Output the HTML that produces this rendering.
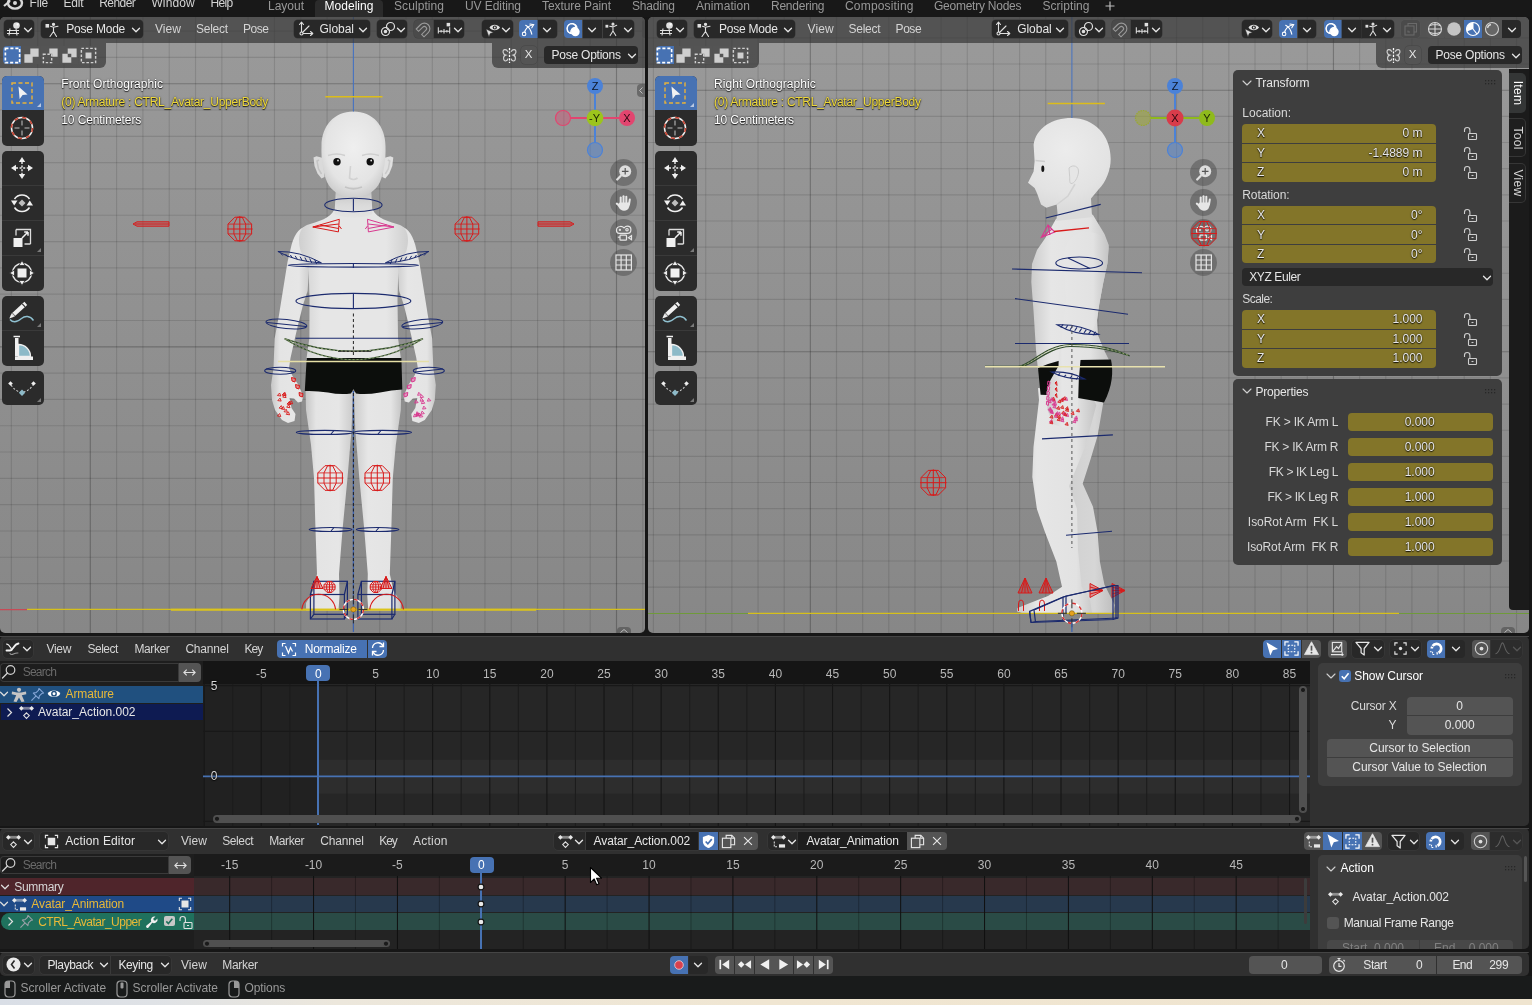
<!DOCTYPE html>
<html><head><meta charset="utf-8"><title>Blender</title>
<style>
html,body{margin:0;padding:0;}
body{will-change:transform;width:1532px;height:1005px;overflow:hidden;background:#161616;font-family:'Liberation Sans', sans-serif;font-size:11.5px;position:relative;}
div,span,svg{box-sizing:border-box;}
svg{overflow:visible;}
</style></head><body>
<div style="position:absolute;left:0px;top:0px;width:1532px;height:17px;background:#181818;border-radius:0px;"></div>
<svg style="position:absolute;left:3px;top:-6px;" width="20" height="16" viewBox="0 0 20 16"><ellipse cx="12" cy="9" rx="7" ry="5.6" fill="none" stroke="#d8d8d8" stroke-width="2.4"/><circle cx="12" cy="9" r="2" fill="#d8d8d8"/><path d="M0 4 L10 4" stroke="#d8d8d8" stroke-width="2.2"/><path d="M1 12 L7 7" stroke="#d8d8d8" stroke-width="2.2"/></svg>
<span style="position:absolute;left:29.5px;top:-2.86px;font-size:12px;line-height:1;color:#d4d4d4;white-space:pre;font-weight:normal;letter-spacing:-0.181px;">File</span>
<span style="position:absolute;left:63.4px;top:-2.86px;font-size:12px;line-height:1;color:#d4d4d4;white-space:pre;font-weight:normal;letter-spacing:-0.196px;">Edit</span>
<span style="position:absolute;left:99.2px;top:-2.86px;font-size:12px;line-height:1;color:#d4d4d4;white-space:pre;font-weight:normal;letter-spacing:-0.552px;">Render</span>
<span style="position:absolute;left:151.4px;top:-2.86px;font-size:12px;line-height:1;color:#d4d4d4;white-space:pre;font-weight:normal;letter-spacing:0.143px;">Window</span>
<span style="position:absolute;left:210.4px;top:-2.86px;font-size:12px;line-height:1;color:#d4d4d4;white-space:pre;font-weight:normal;letter-spacing:-0.629px;">Help</span>
<div style="position:absolute;left:315px;top:0px;width:68px;height:17px;background:#2b2b2b;border-radius:4px 4px 0 0;"></div>
<span style="position:absolute;left:268px;top:0.04px;font-size:12px;line-height:1;color:#989898;white-space:pre;font-weight:normal;letter-spacing:-0.006px;">Layout</span>
<span style="position:absolute;left:324.5px;top:0.04px;font-size:12px;line-height:1;color:#ffffff;white-space:pre;font-weight:normal;letter-spacing:0.028px;">Modeling</span>
<span style="position:absolute;left:394px;top:0.04px;font-size:12px;line-height:1;color:#989898;white-space:pre;font-weight:normal;letter-spacing:0.078px;">Sculpting</span>
<span style="position:absolute;left:465px;top:0.04px;font-size:12px;line-height:1;color:#989898;white-space:pre;font-weight:normal;letter-spacing:-0.078px;">UV Editing</span>
<span style="position:absolute;left:542px;top:0.04px;font-size:12px;line-height:1;color:#989898;white-space:pre;font-weight:normal;letter-spacing:-0.087px;">Texture Paint</span>
<span style="position:absolute;left:632px;top:0.04px;font-size:12px;line-height:1;color:#989898;white-space:pre;font-weight:normal;letter-spacing:-0.174px;">Shading</span>
<span style="position:absolute;left:696px;top:0.04px;font-size:12px;line-height:1;color:#989898;white-space:pre;font-weight:normal;letter-spacing:0.078px;">Animation</span>
<span style="position:absolute;left:771px;top:0.04px;font-size:12px;line-height:1;color:#989898;white-space:pre;font-weight:normal;letter-spacing:-0.234px;">Rendering</span>
<span style="position:absolute;left:845px;top:0.04px;font-size:12px;line-height:1;color:#989898;white-space:pre;font-weight:normal;letter-spacing:0.180px;">Compositing</span>
<span style="position:absolute;left:934px;top:0.04px;font-size:12px;line-height:1;color:#989898;white-space:pre;font-weight:normal;letter-spacing:-0.246px;">Geometry Nodes</span>
<span style="position:absolute;left:1042.5px;top:0.04px;font-size:12px;line-height:1;color:#989898;white-space:pre;font-weight:normal;letter-spacing:0.039px;">Scripting</span>
<svg style="position:absolute;left:1104px;top:0px;" width="12" height="12" viewBox="0 0 12 12"><path d="M6 1.5V10.5M1.5 6H10.5" stroke="#bdbdbd" stroke-width="1.2"/></svg>
<div style="position:absolute;left:0px;top:17px;width:645px;height:616px;background:linear-gradient(180deg,#9a9a9a 0%,#878787 100%);border-radius:5px;overflow:hidden;">
<svg style="position:absolute;left:0;top:0" width="645" height="616"><line x1="11.37" y1="0" x2="11.37" y2="616" stroke="rgba(0,0,0,.115)" stroke-width="1.15"/><line x1="37.68" y1="0" x2="37.68" y2="616" stroke="rgba(0,0,0,.115)" stroke-width="1.15"/><line x1="63.99" y1="0" x2="63.99" y2="616" stroke="rgba(0,0,0,.115)" stroke-width="1.15"/><line x1="90.30" y1="0" x2="90.30" y2="616" stroke="rgba(0,0,0,.24)" stroke-width="1.15"/><line x1="116.61" y1="0" x2="116.61" y2="616" stroke="rgba(0,0,0,.115)" stroke-width="1.15"/><line x1="142.92" y1="0" x2="142.92" y2="616" stroke="rgba(0,0,0,.115)" stroke-width="1.15"/><line x1="169.23" y1="0" x2="169.23" y2="616" stroke="rgba(0,0,0,.115)" stroke-width="1.15"/><line x1="195.54" y1="0" x2="195.54" y2="616" stroke="rgba(0,0,0,.115)" stroke-width="1.15"/><line x1="221.85" y1="0" x2="221.85" y2="616" stroke="rgba(0,0,0,.115)" stroke-width="1.15"/><line x1="248.16" y1="0" x2="248.16" y2="616" stroke="rgba(0,0,0,.115)" stroke-width="1.15"/><line x1="274.47" y1="0" x2="274.47" y2="616" stroke="rgba(0,0,0,.115)" stroke-width="1.15"/><line x1="300.78" y1="0" x2="300.78" y2="616" stroke="rgba(0,0,0,.115)" stroke-width="1.15"/><line x1="327.09" y1="0" x2="327.09" y2="616" stroke="rgba(0,0,0,.115)" stroke-width="1.15"/><line x1="379.71" y1="0" x2="379.71" y2="616" stroke="rgba(0,0,0,.115)" stroke-width="1.15"/><line x1="406.02" y1="0" x2="406.02" y2="616" stroke="rgba(0,0,0,.115)" stroke-width="1.15"/><line x1="432.33" y1="0" x2="432.33" y2="616" stroke="rgba(0,0,0,.115)" stroke-width="1.15"/><line x1="458.64" y1="0" x2="458.64" y2="616" stroke="rgba(0,0,0,.115)" stroke-width="1.15"/><line x1="484.95" y1="0" x2="484.95" y2="616" stroke="rgba(0,0,0,.115)" stroke-width="1.15"/><line x1="511.26" y1="0" x2="511.26" y2="616" stroke="rgba(0,0,0,.115)" stroke-width="1.15"/><line x1="537.57" y1="0" x2="537.57" y2="616" stroke="rgba(0,0,0,.115)" stroke-width="1.15"/><line x1="563.88" y1="0" x2="563.88" y2="616" stroke="rgba(0,0,0,.115)" stroke-width="1.15"/><line x1="590.19" y1="0" x2="590.19" y2="616" stroke="rgba(0,0,0,.115)" stroke-width="1.15"/><line x1="616.50" y1="0" x2="616.50" y2="616" stroke="rgba(0,0,0,.24)" stroke-width="1.15"/><line x1="642.81" y1="0" x2="642.81" y2="616" stroke="rgba(0,0,0,.115)" stroke-width="1.15"/><line x1="0" y1="14.08" x2="645" y2="14.08" stroke="rgba(0,0,0,.115)" stroke-width="1.15"/><line x1="0" y1="40.39" x2="645" y2="40.39" stroke="rgba(0,0,0,.115)" stroke-width="1.15"/><line x1="0" y1="66.70" x2="645" y2="66.70" stroke="rgba(0,0,0,.24)" stroke-width="1.15"/><line x1="0" y1="93.01" x2="645" y2="93.01" stroke="rgba(0,0,0,.115)" stroke-width="1.15"/><line x1="0" y1="119.32" x2="645" y2="119.32" stroke="rgba(0,0,0,.115)" stroke-width="1.15"/><line x1="0" y1="145.63" x2="645" y2="145.63" stroke="rgba(0,0,0,.115)" stroke-width="1.15"/><line x1="0" y1="171.94" x2="645" y2="171.94" stroke="rgba(0,0,0,.115)" stroke-width="1.15"/><line x1="0" y1="198.25" x2="645" y2="198.25" stroke="rgba(0,0,0,.115)" stroke-width="1.15"/><line x1="0" y1="224.56" x2="645" y2="224.56" stroke="rgba(0,0,0,.115)" stroke-width="1.15"/><line x1="0" y1="250.87" x2="645" y2="250.87" stroke="rgba(0,0,0,.115)" stroke-width="1.15"/><line x1="0" y1="277.18" x2="645" y2="277.18" stroke="rgba(0,0,0,.115)" stroke-width="1.15"/><line x1="0" y1="303.49" x2="645" y2="303.49" stroke="rgba(0,0,0,.115)" stroke-width="1.15"/><line x1="0" y1="329.80" x2="645" y2="329.80" stroke="rgba(0,0,0,.24)" stroke-width="1.15"/><line x1="0" y1="356.11" x2="645" y2="356.11" stroke="rgba(0,0,0,.115)" stroke-width="1.15"/><line x1="0" y1="382.42" x2="645" y2="382.42" stroke="rgba(0,0,0,.115)" stroke-width="1.15"/><line x1="0" y1="408.73" x2="645" y2="408.73" stroke="rgba(0,0,0,.115)" stroke-width="1.15"/><line x1="0" y1="435.04" x2="645" y2="435.04" stroke="rgba(0,0,0,.115)" stroke-width="1.15"/><line x1="0" y1="461.35" x2="645" y2="461.35" stroke="rgba(0,0,0,.115)" stroke-width="1.15"/><line x1="0" y1="487.66" x2="645" y2="487.66" stroke="rgba(0,0,0,.115)" stroke-width="1.15"/><line x1="0" y1="513.97" x2="645" y2="513.97" stroke="rgba(0,0,0,.115)" stroke-width="1.15"/><line x1="0" y1="540.28" x2="645" y2="540.28" stroke="rgba(0,0,0,.115)" stroke-width="1.15"/><line x1="0" y1="566.59" x2="645" y2="566.59" stroke="rgba(0,0,0,.115)" stroke-width="1.15"/><g transform="translate(0,-17)">
<defs>
<linearGradient id="limb" x1="0" x2="1" y1="0" y2="0"><stop offset="0" stop-color="#c6c6c6"/><stop offset=".22" stop-color="#e4e4e4"/><stop offset=".7" stop-color="#e6e6e6"/><stop offset="1" stop-color="#cbcbcb"/></linearGradient>
<linearGradient id="torso" x1="0" x2="1" y1="0" y2="0"><stop offset="0" stop-color="#cfcfcf"/><stop offset=".2" stop-color="#e6e6e6"/><stop offset=".8" stop-color="#e6e6e6"/><stop offset="1" stop-color="#cfcfcf"/></linearGradient>
<radialGradient id="head" cx=".5" cy=".42" r=".62"><stop offset="0" stop-color="#efefef"/><stop offset=".7" stop-color="#e4e4e4"/><stop offset="1" stop-color="#c9c9c9"/></radialGradient>
<linearGradient id="neck" x1="0" x2="0" y1="0" y2="1"><stop offset="0" stop-color="#bdbdbd"/><stop offset=".6" stop-color="#dadada"/><stop offset="1" stop-color="#e4e4e4"/></linearGradient>
</defs><path d="M305.5 388 L306 410 L311 445 L314 478 L315.5 530 L317 574 L313.5 590 L306 603 L306 610.5 L338.5 610.5 L339.5 596 L339 574 L342.5 530 L347.5 478 L351.5 430 L353 392 Z" fill="url(#limb)"/><g transform="translate(706.8,0) scale(-1,1)"><path d="M305.5 388 L306 410 L311 445 L314 478 L315.5 530 L317 574 L313.5 590 L306 603 L306 610.5 L338.5 610.5 L339.5 596 L339 574 L342.5 530 L347.5 478 L351.5 430 L353 392 Z" fill="url(#limb)"/></g><path d="M310 226 C300 226 295 233 291.500 245 L287.500 262 L283 290 L279 315 L274.600 338.700 L273.500 368 L271 385 L272 400 L275 410 L282 420 L288 423 L294.500 421 L295.500 414 L291.500 408 L289.500 398 L294 398.500 L298 402.500 L302 401.500 L303.200 396 L298.500 385 L292.500 376 L289 368 L290.500 358 L294.800 338.700 L298 325 L303 305 L307.600 291 L309.500 262 L311 250 Z" fill="url(#limb)"/><g transform="translate(706.8,0) scale(-1,1)"><path d="M310 226 C300 226 295 233 291.500 245 L287.500 262 L283 290 L279 315 L274.600 338.700 L273.500 368 L271 385 L272 400 L275 410 L282 420 L288 423 L294.500 421 L295.500 414 L291.500 408 L289.500 398 L294 398.500 L298 402.500 L302 401.500 L303.200 396 L298.500 385 L292.500 376 L289 368 L290.500 358 L294.800 338.700 L298 325 L303 305 L307.600 291 L309.500 262 L311 250 Z" fill="url(#limb)"/></g><path d="M334 210 L373 210 C376 218 390 222 400 225 C408 228 410 240 406 252 L398.5 262 L397.500 300 L398 338 L400.700 357 L401 360 L306 360 L306.700 357 L309.400 338 L309.500 300 L308.500 262 L301 252 C297 240 299 228 307 225 C317 222 331 218 334 210 Z" fill="url(#torso)"/><path d="M336 186 H371 L372.500 214 C362 219 345 219 334.500 214 Z" fill="url(#neck)"/><path d="M323 158 L316.500 156.200 L313.500 157.500 L314.500 166 L317.500 173.500 L321.500 178.500 L324.500 177 Z" fill="#dadada"/><path d="M319 160 L317 161 L318.500 169 L321.500 174" fill="none" stroke="#c4c4c4" stroke-width="1.500"/><g transform="translate(706.8,0) scale(-1,1)"><path d="M323 158 L316.500 156.200 L313.500 157.500 L314.500 166 L317.500 173.500 L321.500 178.500 L324.500 177 Z" fill="#e0e0e0"/><path d="M319 160 L317 161 L318.500 169 L321.500 174" fill="none" stroke="#cacaca" stroke-width="1.500"/></g><path d="M353.400 111.500 C373 111.500 385.500 126 385.500 146 C386 160 384 172 380 182 C376 191 366 197.500 353.400 197.500 C341 197.500 331 191 327 182 C323 172 321 160 321.500 146 C321.500 126 334 111.500 353.400 111.500 Z" fill="url(#head)"/><circle cx="337" cy="161.800" r="3.700" fill="#101010"/><circle cx="370.200" cy="161.800" r="3.700" fill="#101010"/><circle cx="338" cy="160.500" r=".9" fill="#e8e8e8"/><circle cx="371.200" cy="160.500" r=".9" fill="#e8e8e8"/><path d="M328 155.500 Q337 152.500 345 155.500" stroke="#cfcfcf" stroke-width="1.400" fill="none"/><path d="M362 155.500 Q370 152.500 379 155.500" stroke="#cfcfcf" stroke-width="1.400" fill="none"/><path d="M350.500 166 L349.500 178 Q353.400 181 357.500 178" fill="none" stroke="#d2d2d2" stroke-width="1.600"/><path d="M345 187 Q353.400 190.500 362 187" fill="none" stroke="#c4c4c4" stroke-width="1.800"/><path d="M306.700 358 H401.400 L402.300 389.600 Q392 390 380 392.500 Q366 395 356 393.500 L353.400 389 L351 393.500 Q340 395 328 392.500 Q316 390.500 304.800 391 Z" fill="#0c0e0c"/>
<path d="M0 609.600H27" stroke="#c84a56" stroke-width="1.200"/><path d="M27 609.400H645" stroke="#d6c01a" stroke-width="1.200"/><path d="M171 609.800H536" stroke="#dcc41a" stroke-width="2"/>
<path d="M353.4 17V111.500" stroke="#4672c0" stroke-width="1.100"/><path d="M325.300 96.800H382.500" stroke="#dcbc1a" stroke-width="1.600"/><ellipse cx="353.4" cy="205" rx="28.700" ry="6.700" fill="none" stroke="#1b2a6e" stroke-width="1.100"/><path d="M353.4 199V211" fill="none" stroke="#1b2a6e" stroke-width="1.100"/><g fill="none" stroke="#d81a1a" stroke-width="1"><path d="M312.800 227L339.300 219.300L338.400 231.900Z"/><path d="M312.800 227L338.800 224M320 225L338.600 228.500M339.300 226L341.500 229"/></g><g fill="none" stroke="#d8398f" stroke-width="1"><path d="M394 227L367.500 219.300L368.400 231.900Z"/><path d="M394 227L368 224M387 225L368.200 228.500M367.500 226L365.300 229"/></g><g fill="none" stroke="#d81a1a" stroke-width="1"><polygon points="251.6,233.9 244.7,240.8 234.9,240.8 228.0,233.9 228.0,224.1 234.9,217.2 244.7,217.2 251.6,224.1"/><polygon points="245.7,233.9 242.2,240.8 237.4,240.8 233.9,233.9 233.9,224.1 237.4,217.2 242.2,217.2 245.7,224.1"/><path d="M227.0 229H252.60000000000002M239.8 216.2V241.8"/><path d="M228.0 224.1H251.6M228.0 233.9H251.6" stroke-opacity=".8"/></g><g fill="none" stroke="#d81a1a" stroke-width="1"><polygon points="478.7,233.9 471.8,240.8 462.0,240.8 455.1,233.9 455.1,224.1 462.0,217.2 471.8,217.2 478.7,224.1"/><polygon points="472.8,233.9 469.3,240.8 464.5,240.8 461.0,233.9 461.0,224.1 464.5,217.2 469.3,217.2 472.8,224.1"/><path d="M454.09999999999997 229H479.7M466.9 216.2V241.8"/><path d="M455.1 224.1H478.7M455.1 233.9H478.7" stroke-opacity=".8"/></g><g fill="rgba(216,26,26,.25)" stroke="#d81a1a" stroke-width="1"><path d="M133 224L137 221.800H169V226.200H137Z"/><path d="M135 224H169"/></g><g fill="rgba(216,26,26,.25)" stroke="#d81a1a" stroke-width="1"><path d="M574 224L570 221.800H538V226.200H570Z"/><path d="M572 224H538"/></g><ellipse cx="353.4" cy="265.300" rx="65.200" ry="1.800" fill="none" stroke="#1b2a6e" stroke-width="1.100"/><path d="M353.4 263V268" fill="none" stroke="#1b2a6e" stroke-width="1.100"/><g fill="none" stroke="#1b2a6e" stroke-width="1"><path d="M321.4 262.800 Q299.65 251 277.9 251.500 Q296.65 262 321.4 262.800Z"/><path d="M316.6 264.1L314.6 259.4"/><path d="M311.7 262.9L309.7 258.5"/><path d="M306.9 261.6L304.9 257.6"/><path d="M302.1 260.4L300.1 256.7"/><path d="M297.2 259.2L295.2 255.9"/><path d="M292.4 258.0L290.4 255.0"/><path d="M287.6 256.7L285.6 254.1"/><path d="M282.7 255.5L280.7 253.2"/></g><g fill="none" stroke="#1b2a6e" stroke-width="1"><path d="M385.4 262.800 Q407.15 251 428.9 251.500 Q410.15 262 385.4 262.800Z"/><path d="M390.2 264.1L392.2 259.4"/><path d="M395.1 262.9L397.1 258.5"/><path d="M399.9 261.6L401.9 257.6"/><path d="M404.7 260.4L406.7 256.7"/><path d="M409.6 259.2L411.6 255.9"/><path d="M414.4 258.0L416.4 255.0"/><path d="M419.2 256.7L421.2 254.1"/><path d="M424.1 255.5L426.1 253.2"/></g><ellipse cx="353.4" cy="301" rx="57.400" ry="7.600" fill="none" stroke="#1b2a6e" stroke-width="1.100"/><path d="M353.4 293.500V309" fill="none" stroke="#1b2a6e" stroke-width="1.100"/><g fill="none" stroke="#1b2a6e" stroke-width="1.100"><ellipse cx="286.400" cy="324" rx="20.500" ry="4.600" transform="rotate(6 286.400 324)"/><path d="M267 322.500L306 326.500"/><ellipse cx="422.300" cy="324" rx="20.500" ry="4.600" transform="rotate(-6 422.300 324)"/><path d="M442 322.500L403 326.500"/></g><path d="M353.4 313.500V357" stroke="#222" stroke-width="1" stroke-dasharray="3 2.500"/><path d="M295.600 338.300H411.200" fill="none" stroke="#1b2a6e" stroke-width="1.100"/><path d="M284.500 338.700 Q353.400 380.500 423 338.700 Q353.400 363.800 284.500 338.700Z" fill="none" stroke="#2f4b2a" stroke-width="1.300"/><path d="M338 351.300H371.400" stroke="#1a1a1a" stroke-width="1"/><path d="M284.500 338.700 Q353.400 380.500 423 338.700 Q353.400 363.800 284.500 338.700" fill="none" stroke="#cfd8a0" stroke-width=".6" stroke-dasharray="2 2"/><path d="M278 361.500H429" stroke="#e6dfa6" stroke-width="1.500"/><g fill="none" stroke="#1b2a6e" stroke-width="1.100"><ellipse cx="280.200" cy="370.700" rx="15.500" ry="3.500"/><path d="M266 369L294 372"/><ellipse cx="428.800" cy="370.700" rx="15.500" ry="3.500"/><path d="M443 369L415 372"/></g><path d="M291.5 377.5L295.5 378.5L295.0 382.0L292.0 381.0Z" fill="#d81a1a" fill-opacity=".45" stroke="#d81a1a" stroke-width="1"/><path d="M295.5 384.5L299.5 385.5L299.0 389.0L296.0 388.0Z" fill="#d81a1a" fill-opacity=".45" stroke="#d81a1a" stroke-width="1"/><path d="M299.0 392.5L303.0 393.5L302.5 397.0L299.5 396.0Z" fill="#d81a1a" fill-opacity=".45" stroke="#d81a1a" stroke-width="1"/><path d="M279.1 408.1l2.2 -2.500l1.2 3Z" fill="none" stroke="#d81a1a" stroke-width=".9"/><path d="M281.2 409.0l2.2 -2.500l1.2 3Z" fill="none" stroke="#d81a1a" stroke-width=".9"/><path d="M282.1 395.1l2.2 -2.500l1.2 3Z" fill="none" stroke="#d81a1a" stroke-width=".9"/><path d="M277.4 416.0l2.2 -2.500l1.2 3Z" fill="none" stroke="#d81a1a" stroke-width=".9"/><path d="M277.8 400.6l2.2 -2.500l1.2 3Z" fill="none" stroke="#d81a1a" stroke-width=".9"/><path d="M289.3 403.3l2.2 -2.500l1.2 3Z" fill="none" stroke="#d81a1a" stroke-width=".9"/><path d="M287.1 404.1l2.2 -2.500l1.2 3Z" fill="none" stroke="#d81a1a" stroke-width=".9"/><path d="M282.7 397.1l2.2 -2.500l1.2 3Z" fill="none" stroke="#d81a1a" stroke-width=".9"/><path d="M286.2 414.3l2.2 -2.500l1.2 3Z" fill="none" stroke="#d81a1a" stroke-width=".9"/><path d="M284.0 411.7l2.2 -2.500l1.2 3Z" fill="none" stroke="#d81a1a" stroke-width=".9"/><path d="M282.7 394.9l2.2 -2.500l1.2 3Z" fill="none" stroke="#d81a1a" stroke-width=".9"/><path d="M286.6 407.2l2.2 -2.500l1.2 3Z" fill="none" stroke="#d81a1a" stroke-width=".9"/><path d="M277.4 395.5l2.2 -2.500l1.2 3Z" fill="none" stroke="#d81a1a" stroke-width=".9"/><path d="M287.5 403.9l2.2 -2.500l1.2 3Z" fill="none" stroke="#d81a1a" stroke-width=".9"/><path d="M415.3 377.5L411.3 378.5L411.8 382.0L414.8 381.0Z" fill="#d8398f" fill-opacity=".45" stroke="#d8398f" stroke-width="1"/><path d="M411.3 384.5L407.3 385.5L407.8 389.0L410.8 388.0Z" fill="#d8398f" fill-opacity=".45" stroke="#d8398f" stroke-width="1"/><path d="M407.8 392.5L403.8 393.5L404.3 397.0L407.3 396.0Z" fill="#d8398f" fill-opacity=".45" stroke="#d8398f" stroke-width="1"/><path d="M419.3 414.2l-2.2 -2.500l-1.2 3Z" fill="none" stroke="#d8398f" stroke-width=".9"/><path d="M419.2 415.2l-2.2 -2.500l-1.2 3Z" fill="none" stroke="#d8398f" stroke-width=".9"/><path d="M424.3 413.6l-2.2 -2.500l-1.2 3Z" fill="none" stroke="#d8398f" stroke-width=".9"/><path d="M422.9 416.7l-2.2 -2.500l-1.2 3Z" fill="none" stroke="#d8398f" stroke-width=".9"/><path d="M421.0 394.8l-2.2 -2.500l-1.2 3Z" fill="none" stroke="#d8398f" stroke-width=".9"/><path d="M430.8 400.7l-2.2 -2.500l-1.2 3Z" fill="none" stroke="#d8398f" stroke-width=".9"/><path d="M418.1 402.6l-2.2 -2.500l-1.2 3Z" fill="none" stroke="#d8398f" stroke-width=".9"/><path d="M423.5 400.7l-2.2 -2.500l-1.2 3Z" fill="none" stroke="#d8398f" stroke-width=".9"/><path d="M424.8 403.2l-2.2 -2.500l-1.2 3Z" fill="none" stroke="#d8398f" stroke-width=".9"/><path d="M426.0 408.6l-2.2 -2.500l-1.2 3Z" fill="none" stroke="#d8398f" stroke-width=".9"/><path d="M421.1 415.4l-2.2 -2.500l-1.2 3Z" fill="none" stroke="#d8398f" stroke-width=".9"/><path d="M419.6 415.6l-2.2 -2.500l-1.2 3Z" fill="none" stroke="#d8398f" stroke-width=".9"/><path d="M416.9 416.4l-2.2 -2.500l-1.2 3Z" fill="none" stroke="#d8398f" stroke-width=".9"/><path d="M423.6 397.2l-2.2 -2.500l-1.2 3Z" fill="none" stroke="#d8398f" stroke-width=".9"/><g fill="none" stroke="#1b2a6e" stroke-width="1.100"><ellipse cx="324.800" cy="432.400" rx="28.500" ry="2"/><ellipse cx="382.500" cy="432.400" rx="29" ry="2"/><path d="M331 434l3 -3.500M378 434l3 -3.500"/><ellipse cx="330.600" cy="529.500" rx="21.400" ry="2"/><ellipse cx="377.600" cy="529.500" rx="21.300" ry="2"/><path d="M331 531l3 -3.500M376 531l3 -3.500"/></g><g fill="none" stroke="#d81a1a" stroke-width="1"><polygon points="342.4,483.1 335.2,490.3 325.0,490.3 317.8,483.1 317.8,472.9 325.0,465.7 335.2,465.7 342.4,472.9"/><polygon points="336.2,483.1 332.6,490.3 327.6,490.3 324.0,483.1 324.0,472.9 327.6,465.7 332.6,465.7 336.2,472.9"/><path d="M316.8 478H343.40000000000003M330.1 464.7V491.3"/><path d="M317.9 472.9H342.3M317.9 483.1H342.3" stroke-opacity=".8"/></g><g fill="none" stroke="#d81a1a" stroke-width="1"><polygon points="389.6,483.1 382.4,490.3 372.2,490.3 365.0,483.1 365.0,472.9 372.2,465.7 382.4,465.7 389.6,472.9"/><polygon points="383.4,483.1 379.8,490.3 374.8,490.3 371.2,483.1 371.2,472.9 374.8,465.7 379.8,465.7 383.4,472.9"/><path d="M364.0 478H390.6M377.3 464.7V491.3"/><path d="M365.1 472.9H389.5M365.1 483.1H389.5" stroke-opacity=".8"/></g><path d="M353.4 391V632" stroke="#3d63b0" stroke-width="1.300"/><path d="M353.4 393V600" stroke="#1e1e1e" stroke-width="1" stroke-dasharray="3 2.500"/><g fill="none" stroke="#1b2a6e" stroke-width="1.200"><rect x="310.4" y="594.500" width="34.0" height="24.500"/><rect x="313.9" y="581.300" width="33.5" height="33"/><path d="M310.4 594.500L313.9 581.300M344.4 594.500L347.4 581.300M310.4 619L313.9 614.300M344.4 619L347.4 614.300"/></g><g fill="none" stroke="#1b2a6e" stroke-width="1.200"><rect x="357.9" y="594.500" width="34.0" height="24.500"/><rect x="361.4" y="581.300" width="33.5" height="33"/><path d="M357.9 594.500L361.4 581.300M391.9 594.500L394.9 581.300M357.9 619L361.4 614.300M391.9 619L394.9 614.300"/></g><g fill="none" stroke="#d81a1a" stroke-width="1.100"><path d="M301.800 609.400A17 17 0 0 1 335.600 609.400"/><path d="M369.700 609.400A17 17 0 0 1 403.500 609.400"/></g><path d="M317 576.5l-6 12h12Z M317 576.5v12 M317 576.5l-3 12 M317 576.5l3 12" fill="rgba(216,26,26,.35)" stroke="#d81a1a" stroke-width="1"/><path d="M386 576.5l-6 12h12Z M386 576.5v12 M386 576.5l-3 12 M386 576.5l3 12" fill="rgba(216,26,26,.35)" stroke="#d81a1a" stroke-width="1"/><g fill="none" stroke="#d81a1a" stroke-width="1"><polygon points="335.0,589.3 331.8,592.5 327.2,592.5 324.0,589.3 324.0,584.7 327.2,581.5 331.8,581.5 335.0,584.7"/><polygon points="332.3,589.3 330.6,592.5 328.4,592.5 326.7,589.3 326.7,584.7 328.4,581.5 330.6,581.5 332.3,584.7"/><path d="M323.5 587H335.5M329.5 581V593"/><path d="M324.0 584.7H335.0M324.0 589.3H335.0" stroke-opacity=".8"/></g><g fill="none" stroke="#d81a1a" stroke-width="1"><polygon points="381.3,589.3 378.1,592.5 373.5,592.5 370.3,589.3 370.3,584.7 373.5,581.5 378.1,581.5 381.3,584.7"/><polygon points="378.6,589.3 376.9,592.5 374.7,592.5 373.0,589.3 373.0,584.7 374.7,581.5 376.9,581.5 378.6,584.7"/><path d="M369.8 587H381.8M375.8 581V593"/><path d="M370.3 584.7H381.3M370.3 589.3H381.3" stroke-opacity=".8"/></g>
<circle cx="353.4" cy="609.4" r="10" fill="none" stroke="#fff" stroke-width="1.400"/><circle cx="353.4" cy="609.4" r="10" fill="none" stroke="#d83030" stroke-width="1.400" stroke-dasharray="3.900 3.950"/><path d="M339.4 609.4H348.4M358.4 609.4H367.4M353.4 595.4V604.4M353.4 614.4V623.4" stroke="#2a2a2a" stroke-width="1"/><circle cx="353.4" cy="609.4" r="2.600" fill="#e6a21e" stroke="#7a5a10" stroke-width=".6"/>
</g></svg>
</div>
<div style="position:absolute;left:0px;top:17px;width:645px;height:26px;background:rgba(52,52,52,0.70);border-radius:5px 5px 0 0;"></div>
<div style="position:absolute;left:4px;top:20px;width:30px;height:18px;background:#282828;border-radius:4px;box-shadow:0 0 0 .5px #3a3a3a;"></div>
<svg style="position:absolute;left:6.0px;top:21.0px;" width="16" height="16" viewBox="0 0 16 16"><g fill="none" stroke="#e0e0e0" stroke-width="1.1"><path d="M1 9.5H13M1 12.5H13M4 7.5L3 14.5M10 7.5L11 14.5"/></g><circle cx="10.5" cy="4.5" r="3.3" fill="#e0e0e0"/><circle cx="11.6" cy="3.4" r="1.1" fill="#fff"/></svg>
<svg style="position:absolute;left:21.5px;top:23.5px;" width="12" height="12" viewBox="0 0 12 12"><path d="M2.5 4.25 L6 7.75 L9.5 4.25" fill="none" stroke="#e6e6e6" stroke-width="1.3" stroke-linecap="round" stroke-linejoin="round"/></svg>
<div style="position:absolute;left:41px;top:20px;width:101.5px;height:18px;background:#282828;border-radius:4px;box-shadow:0 0 0 .5px #3a3a3a;"></div>
<svg style="position:absolute;left:44.5px;top:21.5px;" width="16" height="16" viewBox="0 0 16 16"><rect x="0.5" y="2" width="3.6" height="3.6" fill="#e0e0e0"/><g fill="none" stroke="#e0e0e0" stroke-width="1.1" stroke-linecap="round"><circle cx="8.5" cy="2.3" r="1.1" fill="#e0e0e0"/><path d="M5.5 4.2L8.5 5.2L13 4.2M8.5 5.2V9.5M8.5 9.5L5 14.5M8.5 9.5L11.5 14.5"/></g></svg>
<span style="position:absolute;left:66.3px;top:23.02px;font-size:12px;line-height:1;color:#e6e6e6;white-space:pre;font-weight:normal;letter-spacing:-0.213px;">Pose Mode</span>
<svg style="position:absolute;left:129.5px;top:23.5px;" width="12" height="12" viewBox="0 0 12 12"><path d="M2.5 4.25 L6 7.75 L9.5 4.25" fill="none" stroke="#e6e6e6" stroke-width="1.3" stroke-linecap="round" stroke-linejoin="round"/></svg>
<span style="position:absolute;left:155px;top:23.02px;font-size:12px;line-height:1;color:#d4d4d4;white-space:pre;font-weight:normal;letter-spacing:0.068px;">View</span>
<span style="position:absolute;left:196px;top:23.02px;font-size:12px;line-height:1;color:#d4d4d4;white-space:pre;font-weight:normal;letter-spacing:-0.272px;">Select</span>
<span style="position:absolute;left:243px;top:23.02px;font-size:12px;line-height:1;color:#d4d4d4;white-space:pre;font-weight:normal;letter-spacing:-0.453px;">Pose</span>
<div style="position:absolute;left:294px;top:20px;width:76.2px;height:18px;background:#282828;border-radius:4px;box-shadow:0 0 0 .5px #3a3a3a;"></div>
<svg style="position:absolute;left:297.5px;top:21.0px;" width="16" height="16" viewBox="0 0 16 16"><g fill="none" stroke="#e0e0e0" stroke-width="1.1" stroke-linecap="round" stroke-linejoin="round"><path d="M3.5 1.5V12.5H14.5M3.5 12.5L11 5"/><path d="M1.5 3.5L3.5 1.2L5.5 3.5M12.5 10.5L14.8 12.5L12.5 14.5"/><circle cx="3.5" cy="12.5" r="1.5" fill="#282828"/></g></svg>
<span style="position:absolute;left:319.5px;top:23.02px;font-size:12px;line-height:1;color:#e6e6e6;white-space:pre;font-weight:normal;letter-spacing:-0.037px;">Global</span>
<svg style="position:absolute;left:356.5px;top:23.5px;" width="12" height="12" viewBox="0 0 12 12"><path d="M2.5 4.25 L6 7.75 L9.5 4.25" fill="none" stroke="#e6e6e6" stroke-width="1.3" stroke-linecap="round" stroke-linejoin="round"/></svg>
<div style="position:absolute;left:376.9px;top:20px;width:30.5px;height:18px;background:#282828;border-radius:4px;box-shadow:0 0 0 .5px #3a3a3a;"></div>
<svg style="position:absolute;left:379.9px;top:21.0px;" width="16" height="16" viewBox="0 0 16 16"><g fill="none" stroke="#e0e0e0" stroke-width="1.2"><circle cx="5.5" cy="10.5" r="4"/><circle cx="10.5" cy="5.5" r="4"/><circle cx="5.5" cy="10.5" r="1.2" fill="#e0e0e0"/></g></svg>
<svg style="position:absolute;left:395.4px;top:23.5px;" width="12" height="12" viewBox="0 0 12 12"><path d="M2.5 4.25 L6 7.75 L9.5 4.25" fill="none" stroke="#e6e6e6" stroke-width="1.3" stroke-linecap="round" stroke-linejoin="round"/></svg>
<div style="position:absolute;left:413.9px;top:20px;width:19.2px;height:18px;background:#4a4a4a;border-radius:4px 0 0 4px;box-shadow:0 0 0 .5px #404040;"></div>
<svg style="position:absolute;left:415.5px;top:21.0px;" width="16" height="16" viewBox="0 0 16 16"><g transform="rotate(45 8 8)" fill="none" stroke="#9a9a9a" stroke-width="1.100"><path d="M2.500 13.500V7.500a5.500 5.500 0 0 1 11 0V13.500H10.200V7.500a2.200 2.200 0 0 0 -4.400 0V13.500Z"/></g></svg>
<div style="position:absolute;left:433.5px;top:20px;width:30.8px;height:18px;background:#282828;border-radius:0 4px 4px 0;box-shadow:0 0 0 .5px #3a3a3a;"></div>
<svg style="position:absolute;left:436.9px;top:22.0px;" width="14" height="14" viewBox="0 0 16 16"><g stroke="#e0e0e0" stroke-width="1.2" fill="none"><path d="M1.5 6V13M8 8V13M14.5 6V13M1.5 10.5H14.5M4.7 9V12M11.3 9V12"/></g><rect x="11" y="1" width="4" height="4" fill="#e0e0e0"/></svg>
<svg style="position:absolute;left:451.9px;top:23.5px;" width="12" height="12" viewBox="0 0 12 12"><path d="M2.5 4.25 L6 7.75 L9.5 4.25" fill="none" stroke="#e6e6e6" stroke-width="1.3" stroke-linecap="round" stroke-linejoin="round"/></svg>
<div style="position:absolute;left:482.2px;top:20px;width:30.4px;height:18px;background:#282828;border-radius:4px;box-shadow:0 0 0 .5px #3a3a3a;"></div>
<svg style="position:absolute;left:484.7px;top:21.5px;" width="16" height="16" viewBox="0 0 16 16"><path d="M4.500 5.500C6.500 1.800 12.500 1.800 15 5.500C12.500 9.200 6.500 9.200 4.500 5.500Z" fill="#e0e0e0"/><circle cx="9.800" cy="5.500" r="2.100" fill="#282828"/><circle cx="9.800" cy="5.500" r=".9" fill="#e0e0e0"/><path d="M1 7L8.500 10.500L5.200 11.500L4 15Z" fill="#e0e0e0" stroke="#282828" stroke-width=".5"/></svg>
<svg style="position:absolute;left:500.4px;top:23.5px;" width="12" height="12" viewBox="0 0 12 12"><path d="M2.5 4.25 L6 7.75 L9.5 4.25" fill="none" stroke="#e6e6e6" stroke-width="1.3" stroke-linecap="round" stroke-linejoin="round"/></svg>
<div style="position:absolute;left:519.1px;top:20px;width:18.6px;height:18px;background:#4772b3;border-radius:4px 0 0 4px;"></div>
<svg style="position:absolute;left:520.9px;top:21.5px;" width="15" height="15" viewBox="0 0 16 16"><g fill="none" stroke="#fff" stroke-width="1.200" stroke-linecap="round"><path d="M3.500 12C4.500 7 8 4 13 3"/><path d="M9.500 2.200L13.500 2.800L11.500 6.200"/><path d="M5 3.500C8 5 10.500 8 11.500 13"/></g><circle cx="3.300" cy="12.700" r="1.900" fill="#4772b3" stroke="#fff" stroke-width="1.100"/></svg>
<div style="position:absolute;left:538.1px;top:20px;width:18.7px;height:18px;background:#282828;border-radius:0 4px 4px 0;box-shadow:0 0 0 .5px #3a3a3a;"></div>
<svg style="position:absolute;left:541.4px;top:23.5px;" width="12" height="12" viewBox="0 0 12 12"><path d="M2.5 4.25 L6 7.75 L9.5 4.25" fill="none" stroke="#e6e6e6" stroke-width="1.3" stroke-linecap="round" stroke-linejoin="round"/></svg>
<div style="position:absolute;left:564.0px;top:20px;width:18.4px;height:18px;background:#4772b3;border-radius:4px 0 0 4px;"></div>
<svg style="position:absolute;left:565.7px;top:21.5px;" width="15" height="15" viewBox="0 0 16 16"><circle cx="6.5" cy="7" r="5.2" fill="none" stroke="#fff" stroke-width="1.5"/><circle cx="10" cy="10.5" r="4.6" fill="#fff"/><path d="M6.5 1.8A5.2 5.2 0 0 0 1.3 7A5.2 5.2 0 0 0 5.5 12.1A4.6 4.6 0 0 1 10.8 6A5.2 5.2 0 0 0 6.5 1.8Z" fill="#4772b3" stroke="#fff" stroke-width="1.4"/></svg>
<div style="position:absolute;left:582.8px;top:20px;width:19.2px;height:18px;background:#282828;border-radius:0px;box-shadow:0 0 0 .5px #3a3a3a;"></div>
<svg style="position:absolute;left:586.3px;top:23.5px;" width="12" height="12" viewBox="0 0 12 12"><path d="M2.5 4.25 L6 7.75 L9.5 4.25" fill="none" stroke="#e6e6e6" stroke-width="1.3" stroke-linecap="round" stroke-linejoin="round"/></svg>
<div style="position:absolute;left:602.5px;top:20px;width:31.7px;height:18px;background:#282828;border-radius:0 4px 4px 0;box-shadow:0 0 0 .5px #3a3a3a;"></div>
<svg style="position:absolute;left:605.0px;top:22.0px;" width="15" height="15" viewBox="0 0 16 16"><rect x="0.5" y="3" width="3" height="3" fill="#e0e0e0"/><g fill="none" stroke="#e0e0e0" stroke-width="1.1" stroke-linecap="round"><circle cx="8.5" cy="2.3" r="1.1" fill="#e0e0e0"/><path d="M5 4.5L8.5 5.2L12.5 3.5M8.5 5.2V9.5M8.5 9.5L5.5 14.5M8.5 9.5L11.5 14.5"/></g></svg>
<svg style="position:absolute;left:621.5px;top:23.5px;" width="12" height="12" viewBox="0 0 12 12"><path d="M2.5 4.25 L6 7.75 L9.5 4.25" fill="none" stroke="#e6e6e6" stroke-width="1.3" stroke-linecap="round" stroke-linejoin="round"/></svg>
<div style="position:absolute;left:641.5px;top:20px;width:3.5px;height:18px;background:#4a4a4a;border-radius:4px 0 0 4px;"></div>
<div style="position:absolute;left:0px;top:43px;width:106px;height:25px;background:rgba(52,52,52,0.70);border-radius:0 0 6px 0;"></div>
<div style="position:absolute;left:3px;top:46px;width:18.3px;height:18px;background:#4772b3;border-radius:4px 0 0 4px;"></div>
<svg style="position:absolute;left:2.6999999999999993px;top:45.5px;" width="19" height="19" viewBox="0 0 16 16"><rect x="2" y="2" width="12" height="12" fill="none" stroke="#fff" stroke-width="1.4" stroke-dasharray="2.6 1.6"/></svg>
<div style="position:absolute;left:22px;top:46px;width:18.3px;height:18px;background:#545454;border-radius:0;"></div>
<svg style="position:absolute;left:21.7px;top:45.5px;" width="19" height="19" viewBox="0 0 16 16"><path d="M2 7H7V2H14V9H9V14H2Z" fill="#cfcfcf"/></svg>
<div style="position:absolute;left:41px;top:46px;width:18.3px;height:18px;background:#545454;border-radius:0;"></div>
<svg style="position:absolute;left:40.7px;top:45.5px;" width="19" height="19" viewBox="0 0 16 16"><path d="M7 2H14V9H9.5V6.5H7Z" fill="#cfcfcf"/><rect x="2" y="7" width="7" height="7" fill="none" stroke="#cfcfcf" stroke-width="1.2" stroke-dasharray="2 1.4"/></svg>
<div style="position:absolute;left:60px;top:46px;width:18.3px;height:18px;background:#545454;border-radius:0;"></div>
<svg style="position:absolute;left:59.7px;top:45.5px;" width="19" height="19" viewBox="0 0 16 16"><path d="M6.5 2H14V9.5H9.5V14H2V6.5H6.5Z M6.5 6.5V9.5H9.5V6.5Z" fill="#cfcfcf" fill-rule="evenodd"/></svg>
<div style="position:absolute;left:79px;top:46px;width:18.3px;height:18px;background:#545454;border-radius:0 4px 4px 0;"></div>
<svg style="position:absolute;left:78.7px;top:45.5px;" width="19" height="19" viewBox="0 0 16 16"><rect x="2" y="2" width="12" height="12" fill="none" stroke="#cfcfcf" stroke-width="1.2" stroke-dasharray="2.2 1.5"/><rect x="5.5" y="5.5" width="5" height="5" fill="#cfcfcf"/></svg>
<div style="position:absolute;left:492px;top:43px;width:153px;height:25px;background:rgba(52,52,52,0.70);border-radius:0 0 0 6px;"></div>
<svg style="position:absolute;left:500.5px;top:46.5px;" width="17" height="17" viewBox="0 0 16 16"><g fill="none" stroke="#cfcfcf" stroke-width="1.1"><path d="M6.5 4.5C5 1.5 1.5 2 2 5C2.3 6.6 3.5 7.3 4.5 7.6C3 8 2.2 9.5 2.5 11.5C3 14 6 13.5 6.5 11"/><path d="M9.5 4.5C11 1.5 14.5 2 14 5C13.7 6.6 12.5 7.3 11.5 7.6C13 8 13.8 9.5 13.5 11.5C13 14 10 13.5 9.5 11"/></g><path d="M8 1V15" stroke="#fff" stroke-width="1.2" stroke-dasharray="2 1.2"/></svg>
<div style="position:absolute;left:520.5px;top:46px;width:16.5px;height:18px;background:#545454;border-radius:4px;box-shadow:0 0 0 .5px #444;"></div>
<span style="position:absolute;left:528.7px;transform:translateX(-50%);top:49.27px;font-size:11.5px;line-height:1;color:#e6e6e6;white-space:pre;font-weight:normal;letter-spacing:0.000px;">X</span>
<div style="position:absolute;left:543.5px;top:46px;width:94px;height:18px;background:#282828;border-radius:4px;"></div>
<span style="position:absolute;left:551.5px;top:49.02px;font-size:12px;line-height:1;color:#e6e6e6;white-space:pre;font-weight:normal;letter-spacing:-0.232px;">Pose Options</span>
<svg style="position:absolute;left:625.5px;top:49.5px;" width="12" height="12" viewBox="0 0 12 12"><path d="M2.5 4.25 L6 7.75 L9.5 4.25" fill="none" stroke="#e6e6e6" stroke-width="1.3" stroke-linecap="round" stroke-linejoin="round"/></svg>
<div style="position:absolute;left:2.2px;top:76px;width:41.5px;height:69.5px;background:#2b2b2b;border-radius:5px;"></div>
<div style="position:absolute;left:2.2px;top:76px;width:41.5px;height:34.3px;background:#4772b3;border-radius:5px 5px 0 0;"></div>
<svg style="position:absolute;left:6.149999999999999px;top:77.15px;" width="32" height="32" viewBox="0 0 32 32"><rect x="6" y="6" width="20" height="20" fill="none" stroke="#e8b23a" stroke-width="1.4" stroke-dasharray="4 2.5"/><path d="M12.5 9.5L21.5 17.5L16.6 17.9L13.6 22Z" fill="#f2f2f2"/></svg>
<svg style="position:absolute;left:36.7px;top:103.3px;" width="4" height="4" viewBox="0 0 4 4"><path d="M4 0V4H0Z" fill="#b9c8e2"/></svg>
<svg style="position:absolute;left:6.149999999999999px;top:112.15px;" width="32" height="32" viewBox="0 0 32 32"><circle cx="16" cy="16" r="10.500" fill="none" stroke="#f0f0f0" stroke-width="1.500"/><circle cx="16" cy="16" r="10.500" fill="none" stroke="#c8402e" stroke-width="1.500" stroke-dasharray="4.120 4.120"/><path d="M16 8.5V13.5M16 18.5V23.5M8.5 16H13.5M18.5 16H23.5" stroke="#8d8d8d" stroke-width="1.6"/></svg>
<div style="position:absolute;left:2.2px;top:151px;width:41.5px;height:139.6px;background:#2b2b2b;border-radius:5px;"></div>
<div style="position:absolute;left:2.2px;top:185.3px;width:41.5px;height:1px;background:#3a3a3a;border-radius:0px;"></div>
<div style="position:absolute;left:2.2px;top:220.1px;width:41.5px;height:1px;background:#3a3a3a;border-radius:0px;"></div>
<div style="position:absolute;left:2.2px;top:254.9px;width:41.5px;height:1px;background:#3a3a3a;border-radius:0px;"></div>
<svg style="position:absolute;left:6.149999999999999px;top:152.15px;" width="32" height="32" viewBox="0 0 32 32"><g fill="#f0f0f0"><path d="M16 5L19.2 10H12.8Z"/><path d="M16 27L19.2 22H12.8Z"/><path d="M5 16L10 12.8V19.2Z"/><path d="M27 16L22 12.8V19.2Z"/></g><path d="M16 10V22M10 16H22" stroke="#f0f0f0" stroke-width="1.4" stroke-dasharray="2 1.6"/></svg>
<svg style="position:absolute;left:6.149999999999999px;top:186.95000000000002px;" width="32" height="32" viewBox="0 0 32 32"><g fill="none" stroke="#f0f0f0" stroke-width="1.5"><path d="M8.5 12A9 9 0 0 1 23.5 12"/><path d="M23.5 20.5A9 9 0 0 1 8.5 20.5"/></g><path d="M5 13.5H11.5L8.2 18.5Z" fill="#f0f0f0"/><path d="M20.5 18.5H27L23.8 13.5Z" fill="#f0f0f0"/><path d="M16 12.5L19.5 16L16 19.5L12.500 16Z" fill="#bdbdbd"/></svg>
<svg style="position:absolute;left:6.149999999999999px;top:221.75px;" width="32" height="32" viewBox="0 0 32 32"><rect x="7.500" y="16" width="9" height="9" fill="#f0f0f0"/><path d="M10 7.500H24.500V22" fill="none" stroke="#dcdcdc" stroke-width="1.3"/><path d="M10 7.500V13.500M18.500 22H24.500" stroke="#dcdcdc" stroke-width="1.3"/><path d="M16 16L22 10M22 10H18.200M22 10V13.800" stroke="#f0f0f0" stroke-width="1.5" fill="none"/></svg>
<svg style="position:absolute;left:36.7px;top:247.89999999999998px;" width="4" height="4" viewBox="0 0 4 4"><path d="M4 0V4H0Z" fill="#7a7a7a"/></svg>
<svg style="position:absolute;left:6.149999999999999px;top:257.0px;" width="32" height="32" viewBox="0 0 32 32"><circle cx="16" cy="16" r="9.5" fill="none" stroke="#e8e8e8" stroke-width="1.4"/><rect x="11.500" y="11.500" width="9" height="9" fill="#f0f0f0"/><g fill="#f0f0f0" stroke="#2b2b2b" stroke-width=".8"><path d="M16 3.500L19 8.500H13Z"/><path d="M16 28.500L19 23.500H13Z"/><path d="M3.500 16L8.500 13V19Z"/><path d="M28.500 16L23.500 13V19Z"/></g></svg>
<div style="position:absolute;left:2.2px;top:296px;width:41.5px;height:70px;background:#2b2b2b;border-radius:5px;"></div>
<div style="position:absolute;left:2.2px;top:330.3px;width:41.5px;height:1px;background:#3a3a3a;border-radius:0px;"></div>
<svg style="position:absolute;left:6.149999999999999px;top:297.15px;" width="32" height="32" viewBox="0 0 32 32"><path d="M8.200 19.850L5.400 16.750L18.400 4.850L21.200 7.950Z" fill="#f0f0f0"/><path d="M8.200 19.850L5.400 16.750L3.300 21.600Z" fill="#f0f0f0"/><path d="M16.300 6.800L19.100 9.900" stroke="#2b2b2b" stroke-width="1.100"/><path d="M6.300 15.900L9.100 19" stroke="#2b2b2b" stroke-width=".7"/><path d="M4 22.500C8 27 12 24.500 15.500 21.500C19 18.500 24 18.500 27.500 23.500" fill="none" stroke="#8fc0d0" stroke-width="1.400"/></svg>
<svg style="position:absolute;left:36.7px;top:323.3px;" width="4" height="4" viewBox="0 0 4 4"><path d="M4 0V4H0Z" fill="#7a7a7a"/></svg>
<svg style="position:absolute;left:6.149999999999999px;top:332.40000000000003px;" width="32" height="32" viewBox="0 0 32 32"><path d="M9 6H12.500V24.500H9Z" fill="#f0f0f0"/><path d="M9 24.500H27V28H9Z" fill="#f0f0f0"/><path d="M12.500 12.500A12 12 0 0 1 24.500 24.500H12.500Z" fill="#8dbac8" stroke="#f0f0f0" stroke-width="1.3"/><path d="M7.500 4.500H14" stroke="#f0f0f0" stroke-width="1.5"/></svg>
<div style="position:absolute;left:2.2px;top:371.4px;width:41.5px;height:34px;background:#2b2b2b;border-radius:5px;"></div>
<svg style="position:absolute;left:6.149999999999999px;top:372.4px;" width="32" height="32" viewBox="0 0 32 32"><path d="M5 13C8 17.500 12 20 16 20.500C20 20 24 17.500 27 13" fill="none" stroke="#cfcfcf" stroke-width="1.100" stroke-dasharray="2 1.800"/><path d="M4.500 9.200L6.800 11.500L4.500 13.800L2.200 11.500Z" fill="#f0f0f0"/><path d="M27.500 9.200L29.800 11.500L27.500 13.800L25.200 11.500Z" fill="#f0f0f0"/><path d="M16 17.500L19.200 20.700L16 23.900L12.800 20.700Z" fill="#8dbac8"/></svg>
<svg style="position:absolute;left:36.7px;top:398.4px;" width="4" height="4" viewBox="0 0 4 4"><path d="M4 0V4H0Z" fill="#7a7a7a"/></svg>
<span style="position:absolute;left:61.3px;top:78.44px;font-size:12px;line-height:1;color:#ffffff;white-space:pre;font-weight:normal;letter-spacing:0.058px;text-shadow:0 1px 1px rgba(0,0,0,.8),0 0 2px rgba(0,0,0,.6);">Front Orthographic</span>
<span style="position:absolute;left:61.3px;top:96.34px;font-size:12px;line-height:1;color:#eed83a;white-space:pre;font-weight:normal;letter-spacing:-0.254px;text-shadow:0 1px 1px rgba(0,0,0,.8),0 0 2px rgba(0,0,0,.6);">(0) Armature : CTRL_Avatar_UpperBody</span>
<span style="position:absolute;left:61.3px;top:114.44px;font-size:12px;line-height:1;color:#ffffff;white-space:pre;font-weight:normal;letter-spacing:-0.106px;text-shadow:0 1px 1px rgba(0,0,0,.8),0 0 2px rgba(0,0,0,.6);">10 Centimeters</span>
<svg style="position:absolute;left:0;top:0" width="1532" height="700"><path d="M595 86V142.5" stroke="#4b82d8" stroke-width="2"/><path d="M570.5 118H627" stroke="#e2456f" stroke-width="2"/><circle cx="563" cy="118" r="7.5" fill="rgba(226,69,111,0.35)" stroke="#e2456f" stroke-width="1.2" /><circle cx="595" cy="150" r="7.5" fill="rgba(75,130,216,0.45)" stroke="#4b82d8" stroke-width="1.2" /><circle cx="595" cy="86" r="8" fill="#4b82d8"  /><circle cx="627" cy="118" r="8" fill="#e2456f"  /><circle cx="595" cy="118" r="8.3" fill="#9cc41c"  /></svg>
<span style="position:absolute;left:595px;transform:translateX(-50%);top:80.51px;font-size:11px;line-height:1;color:#0c1424;white-space:pre;font-weight:normal;letter-spacing:0.000px;">Z</span>
<span style="position:absolute;left:627px;transform:translateX(-50%);top:112.51px;font-size:11px;line-height:1;color:#2a0810;white-space:pre;font-weight:normal;letter-spacing:0.000px;">X</span>
<span style="position:absolute;left:594.5px;transform:translateX(-50%);top:112.51px;font-size:11px;line-height:1;color:#1a2404;white-space:pre;font-weight:normal;letter-spacing:0.000px;">-Y</span>
<svg style="position:absolute;left:609.7px;top:159.0px;" width="27" height="27" viewBox="0 0 27 27"><circle cx="13.500" cy="13.500" r="13.500" fill="rgba(64,64,64,0.42)"/><circle cx="15.200" cy="12.300" r="6" fill="#dedede"/><path d="M10.600 17L7.200 20.500" stroke="#dedede" stroke-width="2.300" stroke-linecap="round"/><path d="M15.200 9V15.600M11.900 12.300H18.500" stroke="#555" stroke-width="1.200"/></svg>
<svg style="position:absolute;left:609.7px;top:189.1px;" width="27" height="27" viewBox="0 0 27 27"><circle cx="13.500" cy="13.500" r="13.500" fill="rgba(64,64,64,0.42)"/><g fill="none" stroke="#e6e6e6" stroke-width="2" stroke-linecap="round"><path d="M10.700 15V8.600"/><path d="M13.500 14.500V7.200"/><path d="M16.300 14.800V7.800"/><path d="M19 15.500L19.800 10.500"/><path d="M10 17.200L6.800 14.600"/></g><path d="M9.700 13.500H20L19.300 17.500C18.600 20.500 16.500 21.800 14 21.800C11.500 21.800 10 20.600 8.500 18L7.600 15.800Z" fill="#e6e6e6"/></svg>
<svg style="position:absolute;left:609.7px;top:219.2px;" width="27" height="27" viewBox="0 0 27 27"><circle cx="13.500" cy="13.500" r="13.500" fill="rgba(64,64,64,0.42)"/><g transform="translate(0 -2.800)" fill="none" stroke="#e6e6e6" stroke-width="1.200"><path d="M9.200 17.200H17.500C19.800 17.200 20.900 15.600 20.900 13.600C20.900 11.500 19.300 10 17.300 10C15.800 10 14.900 10.700 14 11.600C13 10.700 11.800 10 10.200 10.300C8 10.500 6.500 12 6.500 14C6.500 15.800 7.600 17.200 9.200 17.200Z"/><circle cx="17" cy="13.500" r="1.200"/><path d="M8.800 13.700H11M9.900 12.600V14.800"/><rect x="10" y="19" width="6.500" height="5" rx=".8"/><path d="M18.500 21.500L21.500 19.500V23.500Z"/><path d="M7.800 21H10"/></g></svg>
<svg style="position:absolute;left:609.7px;top:249.3px;" width="27" height="27" viewBox="0 0 27 27"><circle cx="13.500" cy="13.500" r="13.500" fill="rgba(64,64,64,0.42)"/><g fill="none" stroke="#e6e6e6" stroke-width="1.200"><rect x="6" y="6" width="15.400" height="15"/><path d="M11.100 6V21M16.300 6V21M6 11H21.400M6 16H21.400"/></g></svg>
<div style="position:absolute;left:637px;top:84px;width:8px;height:13px;background:rgba(70,70,70,.55);border-radius:4px 0 0 4px;"></div>
<svg style="position:absolute;left:638px;top:86px;" width="6" height="9" viewBox="0 0 6 9"><path d="M4.500 1.500L1.500 4.500L4.500 7.500" fill="none" stroke="#bdbdbd" stroke-width="1"/></svg>
<div style="position:absolute;left:617px;top:627px;width:14px;height:6px;background:rgba(70,70,70,.55);border-radius:4px 4px 0 0;"></div>
<svg style="position:absolute;left:619px;top:628px;" width="10" height="5" viewBox="0 0 10 5"><path d="M1.500 4.500L5 1.500L8.500 4.500" fill="none" stroke="#bdbdbd" stroke-width="1"/></svg>
<div style="position:absolute;left:648px;top:17px;width:881px;height:616px;background:linear-gradient(180deg,#9a9a9a 0%,#878787 100%);border-radius:5px;overflow:hidden;">
<svg style="position:absolute;left:0;top:0" width="881" height="616"><line x1="5.42" y1="0" x2="5.42" y2="616" stroke="rgba(0,0,0,.115)" stroke-width="1.15"/><line x1="31.58" y1="0" x2="31.58" y2="616" stroke="rgba(0,0,0,.115)" stroke-width="1.15"/><line x1="57.73" y1="0" x2="57.73" y2="616" stroke="rgba(0,0,0,.115)" stroke-width="1.15"/><line x1="83.89" y1="0" x2="83.89" y2="616" stroke="rgba(0,0,0,.115)" stroke-width="1.15"/><line x1="110.04" y1="0" x2="110.04" y2="616" stroke="rgba(0,0,0,.115)" stroke-width="1.15"/><line x1="136.20" y1="0" x2="136.20" y2="616" stroke="rgba(0,0,0,.115)" stroke-width="1.15"/><line x1="162.35" y1="0" x2="162.35" y2="616" stroke="rgba(0,0,0,.24)" stroke-width="1.15"/><line x1="188.51" y1="0" x2="188.51" y2="616" stroke="rgba(0,0,0,.115)" stroke-width="1.15"/><line x1="214.66" y1="0" x2="214.66" y2="616" stroke="rgba(0,0,0,.115)" stroke-width="1.15"/><line x1="240.82" y1="0" x2="240.82" y2="616" stroke="rgba(0,0,0,.115)" stroke-width="1.15"/><line x1="266.97" y1="0" x2="266.97" y2="616" stroke="rgba(0,0,0,.115)" stroke-width="1.15"/><line x1="293.13" y1="0" x2="293.13" y2="616" stroke="rgba(0,0,0,.115)" stroke-width="1.15"/><line x1="319.28" y1="0" x2="319.28" y2="616" stroke="rgba(0,0,0,.115)" stroke-width="1.15"/><line x1="345.44" y1="0" x2="345.44" y2="616" stroke="rgba(0,0,0,.115)" stroke-width="1.15"/><line x1="371.59" y1="0" x2="371.59" y2="616" stroke="rgba(0,0,0,.115)" stroke-width="1.15"/><line x1="397.75" y1="0" x2="397.75" y2="616" stroke="rgba(0,0,0,.115)" stroke-width="1.15"/><line x1="450.06" y1="0" x2="450.06" y2="616" stroke="rgba(0,0,0,.115)" stroke-width="1.15"/><line x1="476.21" y1="0" x2="476.21" y2="616" stroke="rgba(0,0,0,.115)" stroke-width="1.15"/><line x1="502.37" y1="0" x2="502.37" y2="616" stroke="rgba(0,0,0,.115)" stroke-width="1.15"/><line x1="528.52" y1="0" x2="528.52" y2="616" stroke="rgba(0,0,0,.115)" stroke-width="1.15"/><line x1="554.68" y1="0" x2="554.68" y2="616" stroke="rgba(0,0,0,.115)" stroke-width="1.15"/><line x1="580.83" y1="0" x2="580.83" y2="616" stroke="rgba(0,0,0,.115)" stroke-width="1.15"/><line x1="606.99" y1="0" x2="606.99" y2="616" stroke="rgba(0,0,0,.115)" stroke-width="1.15"/><line x1="633.14" y1="0" x2="633.14" y2="616" stroke="rgba(0,0,0,.115)" stroke-width="1.15"/><line x1="659.30" y1="0" x2="659.30" y2="616" stroke="rgba(0,0,0,.115)" stroke-width="1.15"/><line x1="685.45" y1="0" x2="685.45" y2="616" stroke="rgba(0,0,0,.24)" stroke-width="1.15"/><line x1="711.61" y1="0" x2="711.61" y2="616" stroke="rgba(0,0,0,.115)" stroke-width="1.15"/><line x1="737.76" y1="0" x2="737.76" y2="616" stroke="rgba(0,0,0,.115)" stroke-width="1.15"/><line x1="763.91" y1="0" x2="763.91" y2="616" stroke="rgba(0,0,0,.115)" stroke-width="1.15"/><line x1="790.07" y1="0" x2="790.07" y2="616" stroke="rgba(0,0,0,.115)" stroke-width="1.15"/><line x1="816.23" y1="0" x2="816.23" y2="616" stroke="rgba(0,0,0,.115)" stroke-width="1.15"/><line x1="842.38" y1="0" x2="842.38" y2="616" stroke="rgba(0,0,0,.115)" stroke-width="1.15"/><line x1="868.54" y1="0" x2="868.54" y2="616" stroke="rgba(0,0,0,.115)" stroke-width="1.15"/><line x1="0" y1="20.89" x2="881" y2="20.89" stroke="rgba(0,0,0,.115)" stroke-width="1.15"/><line x1="0" y1="47.04" x2="881" y2="47.04" stroke="rgba(0,0,0,.115)" stroke-width="1.15"/><line x1="0" y1="73.20" x2="881" y2="73.20" stroke="rgba(0,0,0,.24)" stroke-width="1.15"/><line x1="0" y1="99.35" x2="881" y2="99.35" stroke="rgba(0,0,0,.115)" stroke-width="1.15"/><line x1="0" y1="125.51" x2="881" y2="125.51" stroke="rgba(0,0,0,.115)" stroke-width="1.15"/><line x1="0" y1="151.66" x2="881" y2="151.66" stroke="rgba(0,0,0,.115)" stroke-width="1.15"/><line x1="0" y1="177.82" x2="881" y2="177.82" stroke="rgba(0,0,0,.115)" stroke-width="1.15"/><line x1="0" y1="203.97" x2="881" y2="203.97" stroke="rgba(0,0,0,.115)" stroke-width="1.15"/><line x1="0" y1="230.13" x2="881" y2="230.13" stroke="rgba(0,0,0,.115)" stroke-width="1.15"/><line x1="0" y1="256.28" x2="881" y2="256.28" stroke="rgba(0,0,0,.115)" stroke-width="1.15"/><line x1="0" y1="282.44" x2="881" y2="282.44" stroke="rgba(0,0,0,.115)" stroke-width="1.15"/><line x1="0" y1="308.59" x2="881" y2="308.59" stroke="rgba(0,0,0,.115)" stroke-width="1.15"/><line x1="0" y1="334.75" x2="881" y2="334.75" stroke="rgba(0,0,0,.24)" stroke-width="1.15"/><line x1="0" y1="360.90" x2="881" y2="360.90" stroke="rgba(0,0,0,.115)" stroke-width="1.15"/><line x1="0" y1="387.06" x2="881" y2="387.06" stroke="rgba(0,0,0,.115)" stroke-width="1.15"/><line x1="0" y1="413.21" x2="881" y2="413.21" stroke="rgba(0,0,0,.115)" stroke-width="1.15"/><line x1="0" y1="439.37" x2="881" y2="439.37" stroke="rgba(0,0,0,.115)" stroke-width="1.15"/><line x1="0" y1="465.52" x2="881" y2="465.52" stroke="rgba(0,0,0,.115)" stroke-width="1.15"/><line x1="0" y1="491.68" x2="881" y2="491.68" stroke="rgba(0,0,0,.115)" stroke-width="1.15"/><line x1="0" y1="517.83" x2="881" y2="517.83" stroke="rgba(0,0,0,.115)" stroke-width="1.15"/><line x1="0" y1="543.99" x2="881" y2="543.99" stroke="rgba(0,0,0,.115)" stroke-width="1.15"/><line x1="0" y1="570.14" x2="881" y2="570.14" stroke="rgba(0,0,0,.115)" stroke-width="1.15"/><g transform="translate(-648,-17)">
<defs>
<linearGradient id="sl" x1="0" x2="1" y1="0" y2="0"><stop offset="0" stop-color="#cccccc"/><stop offset=".25" stop-color="#e6e6e6"/><stop offset=".75" stop-color="#e2e2e2"/><stop offset="1" stop-color="#c4c4c4"/></linearGradient>
<linearGradient id="sl2" x1="0" x2="1" y1="0" y2="0"><stop offset="0" stop-color="#d0d0d0"/><stop offset=".6" stop-color="#d6d6d6"/><stop offset="1" stop-color="#bdbdbd"/></linearGradient>
<radialGradient id="shead" gradientUnits="userSpaceOnUse" cx="1066" cy="150" r="62"><stop offset="0" stop-color="#ececec"/><stop offset=".7" stop-color="#e3e3e3"/><stop offset="1" stop-color="#dadada"/></radialGradient>
</defs><path d="M1078 395 L1103.300 402.600 L1097.600 435.800 L1090.700 458.700 L1082.700 483.800 L1093 506.700 L1097.600 532 L1099.900 561.700 L1104.400 584.500 L1114.700 605 L1113 613 L1075 613 L1075 560 L1070 520 L1065 486 L1075 440 Z" fill="url(#sl2)"/><path d="M1038 388 L1039 400 L1033.500 447 L1032.300 477 L1036.900 509 L1044.900 532 L1056.400 561.700 L1062 586.800 L1048 596 L1030 603 L1017.500 608 L1017 611.500 L1022 613 L1092 613 L1090 600 L1081.600 586.800 L1078 550 L1077 509 L1069 486 L1085 447 L1096.400 405 L1092 396 Z" fill="url(#sl)"/><path d="M1056 219 L1093 215 L1104.500 234 L1108.700 245 L1107.500 263 L1103 284 L1099.300 304 L1097 320 L1098 335 L1104 350 L1110 362 L1038 370 L1036 350 L1033.600 312 L1031.300 282 L1032 264 L1037 250 L1044.800 238.800 Z" fill="url(#sl)"/><path d="M1071.600 118 C1094 118 1110.700 135 1110.700 159 C1110.700 170 1106 182 1098.500 189.600 L1091 198.500 L1091.800 213.400 L1093.500 217 L1056 221 L1057.500 213.400 L1056.700 204.500 L1046.300 207.800 L1041 204.500 L1037.300 194 L1036 191 L1034.600 188 L1028 182.800 L1033.600 171.600 L1034.600 161.200 L1033.600 144.800 C1036 128 1052 118 1071.600 118 Z" fill="url(#shead)"/><path d="M1057 204.500 L1068 196 L1075 184" fill="none" stroke="#d2d2d2" stroke-width="1.500"/><ellipse cx="1042.800" cy="168.700" rx="1.500" ry="3.300" fill="#161616"/><path d="M1035.500 160.500 L1045 161.500" stroke="#cdcdcd" stroke-width="1.300"/><path d="M1069 168 C1073 164 1079 166 1078.500 172 C1078 178 1074 184 1071 183.500 C1069 183 1070 178 1069.500 175 Z" fill="#e6e6e6" stroke="#cccccc" stroke-width="1"/><path d="M1038 368 L1048 364 L1060 360.500 L1078 360 L1111 359.500 C1113.500 372 1112.500 386 1104 402.500 L1078 398 L1047 395 L1040.600 394.700 Z" fill="#0c0e0c"/><path d="M1082 232 C1096 230 1108.700 238 1108.700 248 L1107.500 263 L1103 284 L1099.300 304 L1097 320 L1090 337 L1080.500 360 L1078.800 380 L1078 405 L1075 424 L1064 428 L1053 424 L1047.500 410 L1046.500 392 L1050.500 380 L1058.500 366 L1058.800 356 L1062 335 L1066 300 L1063.500 262 C1063.500 246 1070 234 1082 232 Z" fill="url(#sl)"/>
<path d="M648 613.500H748" stroke="#6f9a3a" stroke-width="1.200"/><path d="M1399 613.500H1529" stroke="#6f9a3a" stroke-width="1.200"/><path d="M748 613.300H1399" stroke="#d6c01a" stroke-width="1.300"/>
<path d="M1071.9 17V118" stroke="#4672c0" stroke-width="1"/><path d="M1047.700 103.500H1104.900" stroke="#dcbc1a" stroke-width="1.500"/><path d="M1045.800 218L1100.700 204.400" fill="none" stroke="#1b2a6e" stroke-width="1.100"/><path d="M1048 225L1041.300 237.500L1054.700 232Z M1048 225L1050 235 M1041.300 237.500L1052 229" fill="none" stroke="#d8398f" stroke-width="1.100"/><path d="M1054 231.500L1089 227.800" stroke="#d81a1a" stroke-width="1.300"/><g fill="none" stroke="#1b2a6e" stroke-width="1.100"><ellipse cx="1079.200" cy="263" rx="23.400" ry="6"/><path d="M1068 258L1090 268.500"/></g><path d="M1012 269L1142 272.700" fill="none" stroke="#1b2a6e" stroke-width="1.100"/><path d="M1015 298.600L1128 314.200" fill="none" stroke="#1b2a6e" stroke-width="1.100"/><g fill="none" stroke="#1b2a6e" stroke-width="1.100"><path d="M1057 324.800 Q1080 323.800 1098.700 334.500 Q1075.500 335.600 1057 324.800Z"/><path d="M1060.8 327.6L1063.1 324.2"/><path d="M1065.5 328.7L1067.8 325.3"/><path d="M1070.1 329.7L1072.4 326.3"/><path d="M1074.7 330.8L1077.0 327.4"/><path d="M1079.4 331.9L1081.7 328.5"/><path d="M1084.0 333.0L1086.3 329.6"/><path d="M1088.6 334.0L1090.9 330.6"/><path d="M1093.3 335.1L1095.6 331.7"/></g><path d="M1015 343.500H1129" fill="none" stroke="#1b2a6e" stroke-width="1.100"/><path d="M985 366.400 H1018 C1030 366 1045 345 1070.500 344.500 C1100 344.500 1115 349 1129.600 355.800 C1115 351.500 1100 346.500 1070.500 346.500 C1047 347 1032 366.600 1020 366.800" fill="none" stroke="#2f4b2a" stroke-width="1.200"/><path d="M1020 366.400 C1032 365 1046 345.500 1070.500 345.500 C1100 345.500 1115 350 1129.600 355.800" fill="none" stroke="#c8d28c" stroke-width=".6" stroke-dasharray="2 2"/><path d="M985 366.800H1165" stroke="#e8e2ae" stroke-width="1.600"/><path d="M1071.9 325V548" stroke="#555" stroke-width="1" stroke-dasharray="3 3"/><g fill="none" stroke="#1b2a6e" stroke-width="1.100"><path d="M1051.400 372 Q1070 371 1084.800 379 Q1066 379.500 1051.400 372Z"/><path d="M1058 375.300l2 -2M1064 376.800l2 -2M1070 378.200l2 -2M1076 379.300l2 -1.800"/></g><path d="M1057.7 402.2l2.200 -2.500l1 3.200Z" fill="#d81a1a" fill-opacity=".5" stroke="#d81a1a" stroke-width=".8"/><path d="M1050.2 413.0l2.200 -2.500l1 3.200Z" fill="#d8398f" fill-opacity=".5" stroke="#d8398f" stroke-width=".8"/><path d="M1049.7 412.2l2.200 -2.500l1 3.200Z" fill="#d8398f" fill-opacity=".5" stroke="#d8398f" stroke-width=".8"/><path d="M1061.0 400.0l2.200 -2.500l1 3.200Z" fill="#d8398f" fill-opacity=".5" stroke="#d8398f" stroke-width=".8"/><path d="M1060.7 421.2l2.200 -2.500l1 3.200Z" fill="#d8398f" fill-opacity=".5" stroke="#d8398f" stroke-width=".8"/><path d="M1054.7 415.6l2.200 -2.500l1 3.200Z" fill="#d81a1a" fill-opacity=".5" stroke="#d81a1a" stroke-width=".8"/><path d="M1065.3 409.1l2.200 -2.500l1 3.200Z" fill="#d81a1a" fill-opacity=".5" stroke="#d81a1a" stroke-width=".8"/><path d="M1049.4 422.0l2.200 -2.500l1 3.200Z" fill="#d8398f" fill-opacity=".5" stroke="#d8398f" stroke-width=".8"/><path d="M1052.3 401.3l2.200 -2.500l1 3.200Z" fill="#d8398f" fill-opacity=".5" stroke="#d8398f" stroke-width=".8"/><path d="M1065.4 415.9l2.200 -2.500l1 3.200Z" fill="#d8398f" fill-opacity=".5" stroke="#d8398f" stroke-width=".8"/><path d="M1064.4 399.8l2.200 -2.500l1 3.200Z" fill="#d8398f" fill-opacity=".5" stroke="#d8398f" stroke-width=".8"/><path d="M1054.2 417.1l2.200 -2.500l1 3.200Z" fill="#d8398f" fill-opacity=".5" stroke="#d8398f" stroke-width=".8"/><path d="M1057.4 414.4l2.200 -2.500l1 3.200Z" fill="#d8398f" fill-opacity=".5" stroke="#d8398f" stroke-width=".8"/><path d="M1057.0 420.2l2.200 -2.500l1 3.200Z" fill="#d81a1a" fill-opacity=".5" stroke="#d81a1a" stroke-width=".8"/><path d="M1055.3 414.1l2.200 -2.500l1 3.200Z" fill="#d8398f" fill-opacity=".5" stroke="#d8398f" stroke-width=".8"/><path d="M1074.3 418.4l2.200 -2.500l1 3.200Z" fill="#d8398f" fill-opacity=".5" stroke="#d8398f" stroke-width=".8"/><path d="M1060.5 419.2l2.200 -2.500l1 3.200Z" fill="#d8398f" fill-opacity=".5" stroke="#d8398f" stroke-width=".8"/><path d="M1062.7 399.1l2.200 -2.500l1 3.200Z" fill="#d81a1a" fill-opacity=".5" stroke="#d81a1a" stroke-width=".8"/><path d="M1070.9 414.0l2.200 -2.500l1 3.200Z" fill="#d81a1a" fill-opacity=".5" stroke="#d81a1a" stroke-width=".8"/><path d="M1057.4 417.5l2.200 -2.500l1 3.200Z" fill="#d81a1a" fill-opacity=".5" stroke="#d81a1a" stroke-width=".8"/><path d="M1065.4 410.8l2.200 -2.500l1 3.200Z" fill="#d81a1a" fill-opacity=".5" stroke="#d81a1a" stroke-width=".8"/><path d="M1076.3 411.3l2.200 -2.500l1 3.200Z" fill="#d81a1a" fill-opacity=".5" stroke="#d81a1a" stroke-width=".8"/><path d="M1049.8 417.6l2.200 -2.500l1 3.200Z" fill="#d81a1a" fill-opacity=".5" stroke="#d81a1a" stroke-width=".8"/><path d="M1056.5 408.8l2.200 -2.500l1 3.200Z" fill="#d81a1a" fill-opacity=".5" stroke="#d81a1a" stroke-width=".8"/><path d="M1048.7 410.9l2.200 -2.500l1 3.200Z" fill="#d8398f" fill-opacity=".5" stroke="#d8398f" stroke-width=".8"/><path d="M1051.5 399.7l2.200 -2.500l1 3.200Z" fill="#d81a1a" fill-opacity=".5" stroke="#d81a1a" stroke-width=".8"/><path d="M1051.9 404.9l2.200 -2.500l1 3.200Z" fill="#d8398f" fill-opacity=".5" stroke="#d8398f" stroke-width=".8"/><path d="M1061.5 413.4l2.200 -2.500l1 3.200Z" fill="#d81a1a" fill-opacity=".5" stroke="#d81a1a" stroke-width=".8"/><path d="M1072.6 422.2l2.200 -2.500l1 3.200Z" fill="#d8398f" fill-opacity=".5" stroke="#d8398f" stroke-width=".8"/><path d="M1060.5 408.0l2.200 -2.500l1 3.200Z" fill="#d81a1a" fill-opacity=".5" stroke="#d81a1a" stroke-width=".8"/><path d="M1053.3 404.5l2.200 -2.500l1 3.200Z" fill="#d8398f" fill-opacity=".5" stroke="#d8398f" stroke-width=".8"/><path d="M1062.5 414.5l2.200 -2.500l1 3.200Z" fill="#d8398f" fill-opacity=".5" stroke="#d8398f" stroke-width=".8"/><path d="M1048.1 409.7l2.200 -2.500l1 3.200Z" fill="#d8398f" fill-opacity=".5" stroke="#d8398f" stroke-width=".8"/><path d="M1065.0 424.7l2.200 -2.500l1 3.200Z" fill="#d81a1a" fill-opacity=".5" stroke="#d81a1a" stroke-width=".8"/><path d="M1063.5 415.3l2.200 -2.500l1 3.200Z" fill="#d81a1a" fill-opacity=".5" stroke="#d81a1a" stroke-width=".8"/><path d="M1049.6 423.2l2.200 -2.500l1 3.200Z" fill="#d81a1a" fill-opacity=".5" stroke="#d81a1a" stroke-width=".8"/><path d="M1074.2 420.3l2.200 -2.500l1 3.200Z" fill="#d8398f" fill-opacity=".5" stroke="#d8398f" stroke-width=".8"/><path d="M1060.0 400.9l2.200 -2.500l1 3.200Z" fill="#d81a1a" fill-opacity=".5" stroke="#d81a1a" stroke-width=".8"/><path d="M1049.9 399.9l2.200 -2.500l1 3.200Z" fill="#d8398f" fill-opacity=".5" stroke="#d8398f" stroke-width=".8"/><path d="M1052.9 407.5l2.200 -2.500l1 3.200Z" fill="#d8398f" fill-opacity=".5" stroke="#d8398f" stroke-width=".8"/><path d="M1048.0 402.2l2.200 -2.500l1 3.200Z" fill="#d8398f" fill-opacity=".5" stroke="#d8398f" stroke-width=".8"/><path d="M1048.0 381.0l2 1l-.5 3.500l-2 -1Z" fill="none" stroke="#d8398f" stroke-width="1"/><path d="M1055.0 383.0l1.500 -1.500l.5 4Z" fill="none" stroke="#d81a1a" stroke-width="1"/><path d="M1047.7 386.0l2 1l-.5 3.500l-2 -1Z" fill="none" stroke="#d8398f" stroke-width="1"/><path d="M1055.0 389.0l1.500 -1.500l.5 4Z" fill="none" stroke="#d81a1a" stroke-width="1"/><path d="M1047.4 391.0l2 1l-.5 3.500l-2 -1Z" fill="none" stroke="#d8398f" stroke-width="1"/><path d="M1055.0 395.0l1.500 -1.500l.5 4Z" fill="none" stroke="#d81a1a" stroke-width="1"/><path d="M1047.1 396.0l2 1l-.5 3.500l-2 -1Z" fill="none" stroke="#d8398f" stroke-width="1"/><path d="M1046.8 401.0l2 1l-.5 3.500l-2 -1Z" fill="none" stroke="#d8398f" stroke-width="1"/><path d="M1042 438.900L1112.900 434.900" fill="none" stroke="#1b2a6e" stroke-width="1.100"/><path d="M1066 535.200L1112 531.200" fill="none" stroke="#1b2a6e" stroke-width="1.100"/><g fill="none" stroke="#d81a1a" stroke-width="1"><polygon points="945.6,487.8 938.4,495.0 928.2,495.0 921.0,487.8 921.0,477.6 928.2,470.4 938.4,470.4 945.6,477.6"/><polygon points="939.4,487.8 935.8,495.0 930.8,495.0 927.2,487.8 927.2,477.6 930.8,470.4 935.8,470.4 939.4,477.6"/><path d="M920.0 482.7H946.5999999999999M933.3 469.4V496.0"/><path d="M921.1 477.6H945.5M921.1 487.8H945.5" stroke-opacity=".8"/></g><path d="M1025 578l-7 15h14Z M1025 578v15 M1025 578l-3.500 15 M1025 578l3.500 15" fill="rgba(216,26,26,.35)" stroke="#d81a1a" stroke-width="1"/><path d="M1018.5 611V604a2.500 4 0 0 1 5 0V611" fill="none" stroke="#d81a1a" stroke-width="1"/><path d="M1046 578l-7 15h14Z M1046 578v15 M1046 578l-3.500 15 M1046 578l3.500 15" fill="rgba(216,26,26,.35)" stroke="#d81a1a" stroke-width="1"/><path d="M1039.5 611V604a2.500 4 0 0 1 5 0V611" fill="none" stroke="#d81a1a" stroke-width="1"/><path d="M1090 583.500v14l13 -7Z M1090 590.500h13 M1090 587l13 3.500 M1090 594l13 -3.500" fill="rgba(216,26,26,.35)" stroke="#d81a1a" stroke-width="1"/><path d="M1112 583.500v14l13 -7Z M1112 590.500h13 M1112 587l13 3.500 M1112 594l13 -3.500" fill="rgba(216,26,26,.35)" stroke="#d81a1a" stroke-width="1"/><g fill="none" stroke="#1b2a6e" stroke-width="1.200"><path d="M1029.600 611.400L1063 597L1113 585.500L1118 585.500L1118 618L1113 619.500L1031 622.500Z"/><path d="M1034 610L1066 596L1115 585.500 M1113 585.500V619.500 M1116 585.500V619 M1063 597V621 M1066 596V613 M1034 610L1035.500 622 M1029.600 611.400L1031 622.500 M1031 622.500L1036 621.500L1118 618"/></g>
<circle cx="1071.9" cy="613.3" r="10" fill="none" stroke="#fff" stroke-width="1.400"/><circle cx="1071.9" cy="613.3" r="10" fill="none" stroke="#d83030" stroke-width="1.400" stroke-dasharray="3.900 3.950"/><path d="M1057.9 613.3H1066.9M1076.9 613.3H1085.9M1071.9 599.3V608.3M1071.9 618.3V627.3" stroke="#2a2a2a" stroke-width="1"/><circle cx="1071.9" cy="613.3" r="2.600" fill="#e6a21e" stroke="#7a5a10" stroke-width=".6"/>
<path d="M1071.900 623V632" stroke="#3d63b0" stroke-width="1.300"/>
</g></svg>
</div>
<div style="position:absolute;left:648px;top:17px;width:881px;height:26px;background:rgba(52,52,52,0.70);border-radius:5px 5px 0 0;"></div>
<div style="position:absolute;left:656.6px;top:20px;width:30px;height:18px;background:#282828;border-radius:4px;box-shadow:0 0 0 .5px #3a3a3a;"></div>
<svg style="position:absolute;left:658.6px;top:21.0px;" width="16" height="16" viewBox="0 0 16 16"><g fill="none" stroke="#e0e0e0" stroke-width="1.1"><path d="M1 9.5H13M1 12.5H13M4 7.5L3 14.5M10 7.5L11 14.5"/></g><circle cx="10.5" cy="4.5" r="3.3" fill="#e0e0e0"/><circle cx="11.6" cy="3.4" r="1.1" fill="#fff"/></svg>
<svg style="position:absolute;left:674.1px;top:23.5px;" width="12" height="12" viewBox="0 0 12 12"><path d="M2.5 4.25 L6 7.75 L9.5 4.25" fill="none" stroke="#e6e6e6" stroke-width="1.3" stroke-linecap="round" stroke-linejoin="round"/></svg>
<div style="position:absolute;left:693.6px;top:20px;width:101.5px;height:18px;background:#282828;border-radius:4px;box-shadow:0 0 0 .5px #3a3a3a;"></div>
<svg style="position:absolute;left:697.1px;top:21.5px;" width="16" height="16" viewBox="0 0 16 16"><rect x="0.5" y="2" width="3.6" height="3.6" fill="#e0e0e0"/><g fill="none" stroke="#e0e0e0" stroke-width="1.1" stroke-linecap="round"><circle cx="8.5" cy="2.3" r="1.1" fill="#e0e0e0"/><path d="M5.5 4.2L8.5 5.2L13 4.2M8.5 5.2V9.5M8.5 9.5L5 14.5M8.5 9.5L11.5 14.5"/></g></svg>
<span style="position:absolute;left:718.9px;top:23.02px;font-size:12px;line-height:1;color:#e6e6e6;white-space:pre;font-weight:normal;letter-spacing:-0.213px;">Pose Mode</span>
<svg style="position:absolute;left:782.1px;top:23.5px;" width="12" height="12" viewBox="0 0 12 12"><path d="M2.5 4.25 L6 7.75 L9.5 4.25" fill="none" stroke="#e6e6e6" stroke-width="1.3" stroke-linecap="round" stroke-linejoin="round"/></svg>
<span style="position:absolute;left:807.6px;top:23.02px;font-size:12px;line-height:1;color:#d4d4d4;white-space:pre;font-weight:normal;letter-spacing:0.068px;">View</span>
<span style="position:absolute;left:848.6px;top:23.02px;font-size:12px;line-height:1;color:#d4d4d4;white-space:pre;font-weight:normal;letter-spacing:-0.272px;">Select</span>
<span style="position:absolute;left:895.6px;top:23.02px;font-size:12px;line-height:1;color:#d4d4d4;white-space:pre;font-weight:normal;letter-spacing:-0.453px;">Pose</span>
<div style="position:absolute;left:991.7px;top:20px;width:76.2px;height:18px;background:#282828;border-radius:4px;box-shadow:0 0 0 .5px #3a3a3a;"></div>
<svg style="position:absolute;left:995.2px;top:21.0px;" width="16" height="16" viewBox="0 0 16 16"><g fill="none" stroke="#e0e0e0" stroke-width="1.1" stroke-linecap="round" stroke-linejoin="round"><path d="M3.5 1.5V12.5H14.5M3.5 12.5L11 5"/><path d="M1.5 3.5L3.5 1.2L5.5 3.5M12.5 10.5L14.8 12.5L12.5 14.5"/><circle cx="3.5" cy="12.5" r="1.5" fill="#282828"/></g></svg>
<span style="position:absolute;left:1017.2px;top:23.02px;font-size:12px;line-height:1;color:#e6e6e6;white-space:pre;font-weight:normal;letter-spacing:-0.037px;">Global</span>
<svg style="position:absolute;left:1054.2px;top:23.5px;" width="12" height="12" viewBox="0 0 12 12"><path d="M2.5 4.25 L6 7.75 L9.5 4.25" fill="none" stroke="#e6e6e6" stroke-width="1.3" stroke-linecap="round" stroke-linejoin="round"/></svg>
<div style="position:absolute;left:1074.6000000000001px;top:20px;width:30.5px;height:18px;background:#282828;border-radius:4px;box-shadow:0 0 0 .5px #3a3a3a;"></div>
<svg style="position:absolute;left:1077.6000000000001px;top:21.0px;" width="16" height="16" viewBox="0 0 16 16"><g fill="none" stroke="#e0e0e0" stroke-width="1.2"><circle cx="5.5" cy="10.5" r="4"/><circle cx="10.5" cy="5.5" r="4"/><circle cx="5.5" cy="10.5" r="1.2" fill="#e0e0e0"/></g></svg>
<svg style="position:absolute;left:1093.1000000000001px;top:23.5px;" width="12" height="12" viewBox="0 0 12 12"><path d="M2.5 4.25 L6 7.75 L9.5 4.25" fill="none" stroke="#e6e6e6" stroke-width="1.3" stroke-linecap="round" stroke-linejoin="round"/></svg>
<div style="position:absolute;left:1111.6000000000001px;top:20px;width:19.2px;height:18px;background:#4a4a4a;border-radius:4px 0 0 4px;box-shadow:0 0 0 .5px #404040;"></div>
<svg style="position:absolute;left:1113.2px;top:21.0px;" width="16" height="16" viewBox="0 0 16 16"><g transform="rotate(45 8 8)" fill="none" stroke="#9a9a9a" stroke-width="1.100"><path d="M2.500 13.500V7.500a5.500 5.500 0 0 1 11 0V13.500H10.200V7.500a2.200 2.200 0 0 0 -4.400 0V13.500Z"/></g></svg>
<div style="position:absolute;left:1131.2px;top:20px;width:30.8px;height:18px;background:#282828;border-radius:0 4px 4px 0;box-shadow:0 0 0 .5px #3a3a3a;"></div>
<svg style="position:absolute;left:1134.6000000000001px;top:22.0px;" width="14" height="14" viewBox="0 0 16 16"><g stroke="#e0e0e0" stroke-width="1.2" fill="none"><path d="M1.5 6V13M8 8V13M14.5 6V13M1.5 10.5H14.5M4.7 9V12M11.3 9V12"/></g><rect x="11" y="1" width="4" height="4" fill="#e0e0e0"/></svg>
<svg style="position:absolute;left:1149.6000000000001px;top:23.5px;" width="12" height="12" viewBox="0 0 12 12"><path d="M2.5 4.25 L6 7.75 L9.5 4.25" fill="none" stroke="#e6e6e6" stroke-width="1.3" stroke-linecap="round" stroke-linejoin="round"/></svg>
<div style="position:absolute;left:1241.8px;top:20px;width:30.4px;height:18px;background:#282828;border-radius:4px;box-shadow:0 0 0 .5px #3a3a3a;"></div>
<svg style="position:absolute;left:1244.3px;top:21.5px;" width="16" height="16" viewBox="0 0 16 16"><path d="M4.500 5.500C6.500 1.800 12.500 1.800 15 5.500C12.500 9.200 6.500 9.200 4.500 5.500Z" fill="#e0e0e0"/><circle cx="9.800" cy="5.500" r="2.100" fill="#282828"/><circle cx="9.800" cy="5.500" r=".9" fill="#e0e0e0"/><path d="M1 7L8.500 10.500L5.200 11.500L4 15Z" fill="#e0e0e0" stroke="#282828" stroke-width=".5"/></svg>
<svg style="position:absolute;left:1260.0px;top:23.5px;" width="12" height="12" viewBox="0 0 12 12"><path d="M2.5 4.25 L6 7.75 L9.5 4.25" fill="none" stroke="#e6e6e6" stroke-width="1.3" stroke-linecap="round" stroke-linejoin="round"/></svg>
<div style="position:absolute;left:1278.7px;top:20px;width:18.6px;height:18px;background:#4772b3;border-radius:4px 0 0 4px;"></div>
<svg style="position:absolute;left:1280.5px;top:21.5px;" width="15" height="15" viewBox="0 0 16 16"><g fill="none" stroke="#fff" stroke-width="1.200" stroke-linecap="round"><path d="M3.500 12C4.500 7 8 4 13 3"/><path d="M9.500 2.200L13.500 2.800L11.500 6.200"/><path d="M5 3.500C8 5 10.500 8 11.500 13"/></g><circle cx="3.300" cy="12.700" r="1.900" fill="#4772b3" stroke="#fff" stroke-width="1.100"/></svg>
<div style="position:absolute;left:1297.7px;top:20px;width:18.7px;height:18px;background:#282828;border-radius:0 4px 4px 0;box-shadow:0 0 0 .5px #3a3a3a;"></div>
<svg style="position:absolute;left:1301.0px;top:23.5px;" width="12" height="12" viewBox="0 0 12 12"><path d="M2.5 4.25 L6 7.75 L9.5 4.25" fill="none" stroke="#e6e6e6" stroke-width="1.3" stroke-linecap="round" stroke-linejoin="round"/></svg>
<div style="position:absolute;left:1323.6px;top:20px;width:18.4px;height:18px;background:#4772b3;border-radius:4px 0 0 4px;"></div>
<svg style="position:absolute;left:1325.3px;top:21.5px;" width="15" height="15" viewBox="0 0 16 16"><circle cx="6.5" cy="7" r="5.2" fill="none" stroke="#fff" stroke-width="1.5"/><circle cx="10" cy="10.5" r="4.6" fill="#fff"/><path d="M6.5 1.8A5.2 5.2 0 0 0 1.3 7A5.2 5.2 0 0 0 5.5 12.1A4.6 4.6 0 0 1 10.8 6A5.2 5.2 0 0 0 6.5 1.8Z" fill="#4772b3" stroke="#fff" stroke-width="1.4"/></svg>
<div style="position:absolute;left:1342.3999999999999px;top:20px;width:19.2px;height:18px;background:#282828;border-radius:0px;box-shadow:0 0 0 .5px #3a3a3a;"></div>
<svg style="position:absolute;left:1345.8999999999999px;top:23.5px;" width="12" height="12" viewBox="0 0 12 12"><path d="M2.5 4.25 L6 7.75 L9.5 4.25" fill="none" stroke="#e6e6e6" stroke-width="1.3" stroke-linecap="round" stroke-linejoin="round"/></svg>
<div style="position:absolute;left:1362.1px;top:20px;width:31.7px;height:18px;background:#282828;border-radius:0 4px 4px 0;box-shadow:0 0 0 .5px #3a3a3a;"></div>
<svg style="position:absolute;left:1364.6px;top:22.0px;" width="15" height="15" viewBox="0 0 16 16"><rect x="0.5" y="3" width="3" height="3" fill="#e0e0e0"/><g fill="none" stroke="#e0e0e0" stroke-width="1.1" stroke-linecap="round"><circle cx="8.5" cy="2.3" r="1.1" fill="#e0e0e0"/><path d="M5 4.5L8.5 5.2L12.5 3.5M8.5 5.2V9.5M8.5 9.5L5.5 14.5M8.5 9.5L11.5 14.5"/></g></svg>
<svg style="position:absolute;left:1381.1px;top:23.5px;" width="12" height="12" viewBox="0 0 12 12"><path d="M2.5 4.25 L6 7.75 L9.5 4.25" fill="none" stroke="#e6e6e6" stroke-width="1.3" stroke-linecap="round" stroke-linejoin="round"/></svg>
<div style="position:absolute;left:1401px;top:20px;width:19px;height:18px;background:#4a4a4a;border-radius:4px;box-shadow:0 0 0 .5px #585858;"></div>
<svg style="position:absolute;left:1402.5px;top:21px;" width="16" height="16" viewBox="0 0 16 16"><g fill="none" stroke="#6a6a6a" stroke-width="1.100"><rect x="2" y="5" width="9" height="9"/><path d="M5 5V2.500H13.500V11H11"/><path d="M5 9.500V11H7" /></g></svg>
<div style="position:absolute;left:1425.8px;top:20px;width:18.6px;height:18px;background:#545454;border-radius:4px 0 0 4px;"></div>
<div style="position:absolute;left:1444.85px;top:20px;width:18.6px;height:18px;background:#545454;border-radius:0;"></div>
<div style="position:absolute;left:1463.8999999999999px;top:20px;width:18.6px;height:18px;background:#4772b3;border-radius:0;"></div>
<div style="position:absolute;left:1482.95px;top:20px;width:18.6px;height:18px;background:#545454;border-radius:0;"></div>
<svg style="position:absolute;left:1427px;top:21px;" width="16" height="16" viewBox="0 0 16 16"><g fill="none" stroke="#d8d8d8" stroke-width="1.100"><circle cx="8" cy="8" r="6.500"/><path d="M1.500 8H14.500M8 1.500V14.500M3 4.500Q8 2.500 13 4.500M3 11.500Q8 13.500 13 11.500"/></g></svg>
<svg style="position:absolute;left:1446px;top:21px;" width="16" height="16" viewBox="0 0 16 16"><circle cx="8" cy="8" r="6.800" fill="#c4c4c4"/></svg>
<svg style="position:absolute;left:1465.2px;top:21px;" width="16" height="16" viewBox="0 0 16 16"><circle cx="8" cy="8" r="6.500" fill="#4772b3" stroke="#fff" stroke-width="1.200"/><path d="M8 1.500A6.500 6.500 0 0 0 2 10.500L8 8Z" fill="#fff"/><path d="M8 8L12 13" stroke="#fff" stroke-width="1.200"/><path d="M8 1.500V8" stroke="#fff" stroke-width="1"/></svg>
<svg style="position:absolute;left:1484.2px;top:21px;" width="16" height="16" viewBox="0 0 16 16"><circle cx="8" cy="8" r="6.500" fill="#666" stroke="#d0d0d0" stroke-width="1.100"/><path d="M3.500 7A4.600 4.600 0 0 1 7 3.500" fill="none" stroke="#d8d8d8" stroke-width="1.300"/></svg>
<div style="position:absolute;left:1502px;top:20px;width:19px;height:18px;background:#282828;border-radius:0 4px 4px 0;"></div>
<svg style="position:absolute;left:1505.5px;top:23.5px;" width="12" height="12" viewBox="0 0 12 12"><path d="M2.5 4.25 L6 7.75 L9.5 4.25" fill="none" stroke="#e6e6e6" stroke-width="1.3" stroke-linecap="round" stroke-linejoin="round"/></svg>
<div style="position:absolute;left:648px;top:43px;width:110.60000000000002px;height:25px;background:rgba(52,52,52,0.70);border-radius:0 0 6px 0;"></div>
<div style="position:absolute;left:655.6px;top:46px;width:18.3px;height:18px;background:#4772b3;border-radius:4px 0 0 4px;"></div>
<svg style="position:absolute;left:655.3000000000001px;top:45.5px;" width="19" height="19" viewBox="0 0 16 16"><rect x="2" y="2" width="12" height="12" fill="none" stroke="#fff" stroke-width="1.4" stroke-dasharray="2.6 1.6"/></svg>
<div style="position:absolute;left:674.6px;top:46px;width:18.3px;height:18px;background:#545454;border-radius:0;"></div>
<svg style="position:absolute;left:674.3000000000001px;top:45.5px;" width="19" height="19" viewBox="0 0 16 16"><path d="M2 7H7V2H14V9H9V14H2Z" fill="#cfcfcf"/></svg>
<div style="position:absolute;left:693.6px;top:46px;width:18.3px;height:18px;background:#545454;border-radius:0;"></div>
<svg style="position:absolute;left:693.3000000000001px;top:45.5px;" width="19" height="19" viewBox="0 0 16 16"><path d="M7 2H14V9H9.5V6.5H7Z" fill="#cfcfcf"/><rect x="2" y="7" width="7" height="7" fill="none" stroke="#cfcfcf" stroke-width="1.2" stroke-dasharray="2 1.4"/></svg>
<div style="position:absolute;left:712.6px;top:46px;width:18.3px;height:18px;background:#545454;border-radius:0;"></div>
<svg style="position:absolute;left:712.3000000000001px;top:45.5px;" width="19" height="19" viewBox="0 0 16 16"><path d="M6.5 2H14V9.5H9.5V14H2V6.5H6.5Z M6.5 6.5V9.5H9.5V6.5Z" fill="#cfcfcf" fill-rule="evenodd"/></svg>
<div style="position:absolute;left:731.6px;top:46px;width:18.3px;height:18px;background:#545454;border-radius:0 4px 4px 0;"></div>
<svg style="position:absolute;left:731.3000000000001px;top:45.5px;" width="19" height="19" viewBox="0 0 16 16"><rect x="2" y="2" width="12" height="12" fill="none" stroke="#cfcfcf" stroke-width="1.2" stroke-dasharray="2.2 1.5"/><rect x="5.5" y="5.5" width="5" height="5" fill="#cfcfcf"/></svg>
<div style="position:absolute;left:1376px;top:43px;width:153px;height:25px;background:rgba(52,52,52,0.70);border-radius:0 0 0 6px;"></div>
<svg style="position:absolute;left:1384.5px;top:46.5px;" width="17" height="17" viewBox="0 0 16 16"><g fill="none" stroke="#cfcfcf" stroke-width="1.1"><path d="M6.5 4.5C5 1.5 1.5 2 2 5C2.3 6.6 3.5 7.3 4.5 7.6C3 8 2.2 9.5 2.5 11.5C3 14 6 13.5 6.5 11"/><path d="M9.5 4.5C11 1.5 14.5 2 14 5C13.7 6.6 12.5 7.3 11.5 7.6C13 8 13.8 9.5 13.5 11.5C13 14 10 13.5 9.5 11"/></g><path d="M8 1V15" stroke="#fff" stroke-width="1.2" stroke-dasharray="2 1.2"/></svg>
<div style="position:absolute;left:1404.5px;top:46px;width:16.5px;height:18px;background:#545454;border-radius:4px;box-shadow:0 0 0 .5px #444;"></div>
<span style="position:absolute;left:1412.7px;transform:translateX(-50%);top:49.27px;font-size:11.5px;line-height:1;color:#e6e6e6;white-space:pre;font-weight:normal;letter-spacing:0.000px;">X</span>
<div style="position:absolute;left:1427.5px;top:46px;width:94px;height:18px;background:#282828;border-radius:4px;"></div>
<span style="position:absolute;left:1435.5px;top:49.02px;font-size:12px;line-height:1;color:#e6e6e6;white-space:pre;font-weight:normal;letter-spacing:-0.232px;">Pose Options</span>
<svg style="position:absolute;left:1509.5px;top:49.5px;" width="12" height="12" viewBox="0 0 12 12"><path d="M2.5 4.25 L6 7.75 L9.5 4.25" fill="none" stroke="#e6e6e6" stroke-width="1.3" stroke-linecap="round" stroke-linejoin="round"/></svg>
<div style="position:absolute;left:655px;top:76px;width:41.5px;height:69.5px;background:#2b2b2b;border-radius:5px;"></div>
<div style="position:absolute;left:655px;top:76px;width:41.5px;height:34.3px;background:#4772b3;border-radius:5px 5px 0 0;"></div>
<svg style="position:absolute;left:658.95px;top:77.15px;" width="32" height="32" viewBox="0 0 32 32"><rect x="6" y="6" width="20" height="20" fill="none" stroke="#e8b23a" stroke-width="1.4" stroke-dasharray="4 2.5"/><path d="M12.5 9.5L21.5 17.5L16.6 17.9L13.6 22Z" fill="#f2f2f2"/></svg>
<svg style="position:absolute;left:689.5px;top:103.3px;" width="4" height="4" viewBox="0 0 4 4"><path d="M4 0V4H0Z" fill="#b9c8e2"/></svg>
<svg style="position:absolute;left:658.95px;top:112.15px;" width="32" height="32" viewBox="0 0 32 32"><circle cx="16" cy="16" r="10.500" fill="none" stroke="#f0f0f0" stroke-width="1.500"/><circle cx="16" cy="16" r="10.500" fill="none" stroke="#c8402e" stroke-width="1.500" stroke-dasharray="4.120 4.120"/><path d="M16 8.5V13.5M16 18.5V23.5M8.5 16H13.5M18.5 16H23.5" stroke="#8d8d8d" stroke-width="1.6"/></svg>
<div style="position:absolute;left:655px;top:151px;width:41.5px;height:139.6px;background:#2b2b2b;border-radius:5px;"></div>
<div style="position:absolute;left:655px;top:185.3px;width:41.5px;height:1px;background:#3a3a3a;border-radius:0px;"></div>
<div style="position:absolute;left:655px;top:220.1px;width:41.5px;height:1px;background:#3a3a3a;border-radius:0px;"></div>
<div style="position:absolute;left:655px;top:254.9px;width:41.5px;height:1px;background:#3a3a3a;border-radius:0px;"></div>
<svg style="position:absolute;left:658.95px;top:152.15px;" width="32" height="32" viewBox="0 0 32 32"><g fill="#f0f0f0"><path d="M16 5L19.2 10H12.8Z"/><path d="M16 27L19.2 22H12.8Z"/><path d="M5 16L10 12.8V19.2Z"/><path d="M27 16L22 12.8V19.2Z"/></g><path d="M16 10V22M10 16H22" stroke="#f0f0f0" stroke-width="1.4" stroke-dasharray="2 1.6"/></svg>
<svg style="position:absolute;left:658.95px;top:186.95000000000002px;" width="32" height="32" viewBox="0 0 32 32"><g fill="none" stroke="#f0f0f0" stroke-width="1.5"><path d="M8.5 12A9 9 0 0 1 23.5 12"/><path d="M23.5 20.5A9 9 0 0 1 8.5 20.5"/></g><path d="M5 13.5H11.5L8.2 18.5Z" fill="#f0f0f0"/><path d="M20.5 18.5H27L23.8 13.5Z" fill="#f0f0f0"/><path d="M16 12.5L19.5 16L16 19.5L12.500 16Z" fill="#bdbdbd"/></svg>
<svg style="position:absolute;left:658.95px;top:221.75px;" width="32" height="32" viewBox="0 0 32 32"><rect x="7.500" y="16" width="9" height="9" fill="#f0f0f0"/><path d="M10 7.500H24.500V22" fill="none" stroke="#dcdcdc" stroke-width="1.3"/><path d="M10 7.500V13.500M18.500 22H24.500" stroke="#dcdcdc" stroke-width="1.3"/><path d="M16 16L22 10M22 10H18.200M22 10V13.800" stroke="#f0f0f0" stroke-width="1.5" fill="none"/></svg>
<svg style="position:absolute;left:689.5px;top:247.89999999999998px;" width="4" height="4" viewBox="0 0 4 4"><path d="M4 0V4H0Z" fill="#7a7a7a"/></svg>
<svg style="position:absolute;left:658.95px;top:257.0px;" width="32" height="32" viewBox="0 0 32 32"><circle cx="16" cy="16" r="9.5" fill="none" stroke="#e8e8e8" stroke-width="1.4"/><rect x="11.500" y="11.500" width="9" height="9" fill="#f0f0f0"/><g fill="#f0f0f0" stroke="#2b2b2b" stroke-width=".8"><path d="M16 3.500L19 8.500H13Z"/><path d="M16 28.500L19 23.500H13Z"/><path d="M3.500 16L8.500 13V19Z"/><path d="M28.500 16L23.500 13V19Z"/></g></svg>
<div style="position:absolute;left:655px;top:296px;width:41.5px;height:70px;background:#2b2b2b;border-radius:5px;"></div>
<div style="position:absolute;left:655px;top:330.3px;width:41.5px;height:1px;background:#3a3a3a;border-radius:0px;"></div>
<svg style="position:absolute;left:658.95px;top:297.15px;" width="32" height="32" viewBox="0 0 32 32"><path d="M8.200 19.850L5.400 16.750L18.400 4.850L21.200 7.950Z" fill="#f0f0f0"/><path d="M8.200 19.850L5.400 16.750L3.300 21.600Z" fill="#f0f0f0"/><path d="M16.300 6.800L19.100 9.900" stroke="#2b2b2b" stroke-width="1.100"/><path d="M6.300 15.900L9.100 19" stroke="#2b2b2b" stroke-width=".7"/><path d="M4 22.500C8 27 12 24.500 15.500 21.500C19 18.500 24 18.500 27.500 23.500" fill="none" stroke="#8fc0d0" stroke-width="1.400"/></svg>
<svg style="position:absolute;left:689.5px;top:323.3px;" width="4" height="4" viewBox="0 0 4 4"><path d="M4 0V4H0Z" fill="#7a7a7a"/></svg>
<svg style="position:absolute;left:658.95px;top:332.40000000000003px;" width="32" height="32" viewBox="0 0 32 32"><path d="M9 6H12.500V24.500H9Z" fill="#f0f0f0"/><path d="M9 24.500H27V28H9Z" fill="#f0f0f0"/><path d="M12.500 12.500A12 12 0 0 1 24.500 24.500H12.500Z" fill="#8dbac8" stroke="#f0f0f0" stroke-width="1.3"/><path d="M7.500 4.500H14" stroke="#f0f0f0" stroke-width="1.5"/></svg>
<div style="position:absolute;left:655px;top:371.4px;width:41.5px;height:34px;background:#2b2b2b;border-radius:5px;"></div>
<svg style="position:absolute;left:658.95px;top:372.4px;" width="32" height="32" viewBox="0 0 32 32"><path d="M5 13C8 17.500 12 20 16 20.500C20 20 24 17.500 27 13" fill="none" stroke="#cfcfcf" stroke-width="1.100" stroke-dasharray="2 1.800"/><path d="M4.500 9.200L6.800 11.500L4.500 13.800L2.200 11.500Z" fill="#f0f0f0"/><path d="M27.500 9.200L29.800 11.500L27.500 13.800L25.200 11.500Z" fill="#f0f0f0"/><path d="M16 17.500L19.200 20.700L16 23.900L12.800 20.700Z" fill="#8dbac8"/></svg>
<svg style="position:absolute;left:689.5px;top:398.4px;" width="4" height="4" viewBox="0 0 4 4"><path d="M4 0V4H0Z" fill="#7a7a7a"/></svg>
<span style="position:absolute;left:714px;top:78.44px;font-size:12px;line-height:1;color:#ffffff;white-space:pre;font-weight:normal;letter-spacing:0.058px;text-shadow:0 1px 1px rgba(0,0,0,.8),0 0 2px rgba(0,0,0,.6);">Right Orthographic</span>
<span style="position:absolute;left:714px;top:96.34px;font-size:12px;line-height:1;color:#eed83a;white-space:pre;font-weight:normal;letter-spacing:-0.254px;text-shadow:0 1px 1px rgba(0,0,0,.8),0 0 2px rgba(0,0,0,.6);">(0) Armature : CTRL_Avatar_UpperBody</span>
<span style="position:absolute;left:714px;top:114.44px;font-size:12px;line-height:1;color:#ffffff;white-space:pre;font-weight:normal;letter-spacing:-0.106px;text-shadow:0 1px 1px rgba(0,0,0,.8),0 0 2px rgba(0,0,0,.6);">10 Centimeters</span>
<svg style="position:absolute;left:0;top:0" width="1532" height="700"><path d="M1175 86V142.5" stroke="#4b82d8" stroke-width="2"/><path d="M1150.5 118H1207" stroke="#8fba1c" stroke-width="2"/><circle cx="1143" cy="118" r="7.5" fill="rgba(160,170,60,0.55)" stroke="#9aa832" stroke-width="1.2" stroke-dasharray="1.500 1"/><circle cx="1175" cy="150" r="7.5" fill="rgba(75,130,216,0.45)" stroke="#4b82d8" stroke-width="1.2" /><circle cx="1175" cy="86" r="8" fill="#4b82d8"  /><circle cx="1207" cy="118" r="8" fill="#8fba1c"  /><circle cx="1175" cy="118" r="8.5" fill="#d83c4a"  /></svg>
<span style="position:absolute;left:1175px;transform:translateX(-50%);top:80.51px;font-size:11px;line-height:1;color:#0c1424;white-space:pre;font-weight:normal;letter-spacing:0.000px;">Z</span>
<span style="position:absolute;left:1207px;transform:translateX(-50%);top:112.51px;font-size:11px;line-height:1;color:#1a2404;white-space:pre;font-weight:normal;letter-spacing:0.000px;">Y</span>
<span style="position:absolute;left:1175px;transform:translateX(-50%);top:112.51px;font-size:11px;line-height:1;color:#2a0810;white-space:pre;font-weight:normal;letter-spacing:0.000px;">X</span>
<svg style="position:absolute;left:1189.5px;top:159.0px;" width="27" height="27" viewBox="0 0 27 27"><circle cx="13.500" cy="13.500" r="13.500" fill="rgba(64,64,64,0.42)"/><circle cx="15.200" cy="12.300" r="6" fill="#dedede"/><path d="M10.600 17L7.200 20.500" stroke="#dedede" stroke-width="2.300" stroke-linecap="round"/><path d="M15.200 9V15.600M11.900 12.300H18.500" stroke="#555" stroke-width="1.200"/></svg>
<svg style="position:absolute;left:1189.5px;top:189.1px;" width="27" height="27" viewBox="0 0 27 27"><circle cx="13.500" cy="13.500" r="13.500" fill="rgba(64,64,64,0.42)"/><g fill="none" stroke="#e6e6e6" stroke-width="2" stroke-linecap="round"><path d="M10.700 15V8.600"/><path d="M13.500 14.500V7.200"/><path d="M16.300 14.800V7.800"/><path d="M19 15.500L19.800 10.500"/><path d="M10 17.200L6.800 14.600"/></g><path d="M9.700 13.500H20L19.300 17.500C18.600 20.500 16.500 21.800 14 21.800C11.500 21.800 10 20.600 8.500 18L7.600 15.800Z" fill="#e6e6e6"/></svg>
<svg style="position:absolute;left:1189.5px;top:219.2px;" width="27" height="27" viewBox="0 0 27 27"><circle cx="13.500" cy="13.500" r="13.500" fill="rgba(64,64,64,0.42)"/><g transform="translate(0 -2.800)" fill="none" stroke="#e6e6e6" stroke-width="1.200"><path d="M9.200 17.200H17.500C19.800 17.200 20.900 15.600 20.900 13.600C20.900 11.500 19.300 10 17.300 10C15.800 10 14.900 10.700 14 11.600C13 10.700 11.800 10 10.200 10.300C8 10.500 6.500 12 6.500 14C6.500 15.800 7.600 17.200 9.200 17.200Z"/><circle cx="17" cy="13.500" r="1.200"/><path d="M8.800 13.700H11M9.900 12.600V14.800"/><rect x="10" y="19" width="6.500" height="5" rx=".8"/><path d="M18.500 21.500L21.500 19.500V23.500Z"/><path d="M7.800 21H10"/></g></svg>
<svg style="position:absolute;left:1189.5px;top:249.3px;" width="27" height="27" viewBox="0 0 27 27"><circle cx="13.500" cy="13.500" r="13.500" fill="rgba(64,64,64,0.42)"/><g fill="none" stroke="#e6e6e6" stroke-width="1.200"><rect x="6" y="6" width="15.400" height="15"/><path d="M11.100 6V21M16.300 6V21M6 11H21.400M6 16H21.400"/></g></svg>
<svg style="position:absolute;left:0;top:0" width="1532" height="700"><g fill="none" stroke="#d81a1a" stroke-width="1"><polygon points="1216.0,238.5 1209.0,245.5 1199.0,245.5 1192.0,238.5 1192.0,228.5 1199.0,221.5 1209.0,221.5 1216.0,228.5"/><polygon points="1210.0,238.5 1206.5,245.5 1201.5,245.5 1198.0,238.5 1198.0,228.5 1201.5,221.5 1206.5,221.5 1210.0,228.5"/><path d="M1191 233.5H1217M1204 220.5V246.5"/><path d="M1192.0 228.6H1216.0M1192.0 238.4H1216.0" stroke-opacity=".8"/></g></svg>
<div style="position:absolute;left:1233px;top:70px;width:269px;height:306.3px;background:#3e3e3e;border-radius:5px;"></div>
<svg style="position:absolute;left:1240.5px;top:76.5px;" width="12" height="12" viewBox="0 0 12 12"><path d="M2 4.0 L6 8.0 L10 4.0" fill="none" stroke="#d0d0d0" stroke-width="1.1" stroke-linecap="round" stroke-linejoin="round"/></svg>
<span style="position:absolute;left:1255.5px;top:76.84px;font-size:12px;line-height:1;color:#e6e6e6;white-space:pre;font-weight:normal;letter-spacing:-0.029px;">Transform</span>
<svg style="position:absolute;left:1484.5px;top:79.5px;" width="12" height="5" viewBox="0 0 12 5"><rect x="0" y="0" width="1.200" height="1.300" fill="#272727"/><rect x="0" y="3" width="1.200" height="1.300" fill="#272727"/><rect x="3" y="0" width="1.200" height="1.300" fill="#272727"/><rect x="3" y="3" width="1.200" height="1.300" fill="#272727"/><rect x="6" y="0" width="1.200" height="1.300" fill="#272727"/><rect x="6" y="3" width="1.200" height="1.300" fill="#272727"/><rect x="9" y="0" width="1.200" height="1.300" fill="#272727"/><rect x="9" y="3" width="1.200" height="1.300" fill="#272727"/></svg>
<span style="position:absolute;left:1242.3px;top:106.94px;font-size:12px;line-height:1;color:#d8d8d8;white-space:pre;font-weight:normal;letter-spacing:-0.000px;">Location:</span>
<div style="position:absolute;left:1242px;top:124.0px;width:194px;height:18.5px;background:#837529;border-radius:4px 4px 0 0;"></div>
<span style="position:absolute;left:1257px;top:127.32px;font-size:12px;line-height:1;color:#e6e6e6;white-space:pre;font-weight:normal;letter-spacing:0.000px;text-shadow:0 1px 1px rgba(0,0,0,.8),0 0 2px rgba(0,0,0,.6);">X</span>
<span style="position:absolute;right:109.5px;top:127.32px;font-size:12px;line-height:1;color:#e6e6e6;white-space:pre;font-weight:normal;letter-spacing:0.000px;text-shadow:0 1px 1px rgba(0,0,0,.8),0 0 2px rgba(0,0,0,.6);">0 m</span>
<svg style="position:absolute;left:1462px;top:125.0px;" width="16" height="16" viewBox="0 0 16 16"><g fill="none" stroke="#cfcfcf" stroke-width="1.100"><path d="M2.500 7V5.200a2.700 2.700 0 0 1 5.400 0V8.500"/><rect x="6.500" y="8.500" width="8" height="6" rx=".8"/><path d="M9.500 11.500H11.500"/></g></svg>
<div style="position:absolute;left:1242px;top:143.5px;width:194px;height:18.5px;background:#837529;border-radius:0;"></div>
<span style="position:absolute;left:1257px;top:146.82px;font-size:12px;line-height:1;color:#e6e6e6;white-space:pre;font-weight:normal;letter-spacing:0.000px;text-shadow:0 1px 1px rgba(0,0,0,.8),0 0 2px rgba(0,0,0,.6);">Y</span>
<span style="position:absolute;right:109.5px;top:146.82px;font-size:12px;line-height:1;color:#e6e6e6;white-space:pre;font-weight:normal;letter-spacing:0.000px;text-shadow:0 1px 1px rgba(0,0,0,.8),0 0 2px rgba(0,0,0,.6);">-1.4889 m</span>
<svg style="position:absolute;left:1462px;top:144.5px;" width="16" height="16" viewBox="0 0 16 16"><g fill="none" stroke="#cfcfcf" stroke-width="1.100"><path d="M2.500 7V5.200a2.700 2.700 0 0 1 5.400 0V8.500"/><rect x="6.500" y="8.500" width="8" height="6" rx=".8"/><path d="M9.500 11.500H11.500"/></g></svg>
<div style="position:absolute;left:1242px;top:163.0px;width:194px;height:18.5px;background:#837529;border-radius:0 0 4px 4px;"></div>
<span style="position:absolute;left:1257px;top:166.32px;font-size:12px;line-height:1;color:#e6e6e6;white-space:pre;font-weight:normal;letter-spacing:0.000px;text-shadow:0 1px 1px rgba(0,0,0,.8),0 0 2px rgba(0,0,0,.6);">Z</span>
<span style="position:absolute;right:109.5px;top:166.32px;font-size:12px;line-height:1;color:#e6e6e6;white-space:pre;font-weight:normal;letter-spacing:0.000px;text-shadow:0 1px 1px rgba(0,0,0,.8),0 0 2px rgba(0,0,0,.6);">0 m</span>
<svg style="position:absolute;left:1462px;top:164.0px;" width="16" height="16" viewBox="0 0 16 16"><g fill="none" stroke="#cfcfcf" stroke-width="1.100"><path d="M2.500 7V5.200a2.700 2.700 0 0 1 5.400 0V8.500"/><rect x="6.500" y="8.500" width="8" height="6" rx=".8"/><path d="M9.500 11.500H11.500"/></g></svg>
<span style="position:absolute;left:1242.3px;top:188.54px;font-size:12px;line-height:1;color:#d8d8d8;white-space:pre;font-weight:normal;letter-spacing:-0.091px;">Rotation:</span>
<div style="position:absolute;left:1242px;top:205.7px;width:194px;height:18.5px;background:#837529;border-radius:4px 4px 0 0;"></div>
<span style="position:absolute;left:1257px;top:209.02px;font-size:12px;line-height:1;color:#e6e6e6;white-space:pre;font-weight:normal;letter-spacing:0.000px;text-shadow:0 1px 1px rgba(0,0,0,.8),0 0 2px rgba(0,0,0,.6);">X</span>
<span style="position:absolute;right:109.5px;top:209.02px;font-size:12px;line-height:1;color:#e6e6e6;white-space:pre;font-weight:normal;letter-spacing:0.000px;text-shadow:0 1px 1px rgba(0,0,0,.8),0 0 2px rgba(0,0,0,.6);">0°</span>
<svg style="position:absolute;left:1462px;top:206.7px;" width="16" height="16" viewBox="0 0 16 16"><g fill="none" stroke="#cfcfcf" stroke-width="1.100"><path d="M2.500 7V5.200a2.700 2.700 0 0 1 5.400 0V8.500"/><rect x="6.500" y="8.500" width="8" height="6" rx=".8"/><path d="M9.500 11.500H11.500"/></g></svg>
<div style="position:absolute;left:1242px;top:225.2px;width:194px;height:18.5px;background:#837529;border-radius:0;"></div>
<span style="position:absolute;left:1257px;top:228.52px;font-size:12px;line-height:1;color:#e6e6e6;white-space:pre;font-weight:normal;letter-spacing:0.000px;text-shadow:0 1px 1px rgba(0,0,0,.8),0 0 2px rgba(0,0,0,.6);">Y</span>
<span style="position:absolute;right:109.5px;top:228.52px;font-size:12px;line-height:1;color:#e6e6e6;white-space:pre;font-weight:normal;letter-spacing:0.000px;text-shadow:0 1px 1px rgba(0,0,0,.8),0 0 2px rgba(0,0,0,.6);">0°</span>
<svg style="position:absolute;left:1462px;top:226.2px;" width="16" height="16" viewBox="0 0 16 16"><g fill="none" stroke="#cfcfcf" stroke-width="1.100"><path d="M2.500 7V5.200a2.700 2.700 0 0 1 5.400 0V8.500"/><rect x="6.500" y="8.500" width="8" height="6" rx=".8"/><path d="M9.500 11.500H11.500"/></g></svg>
<div style="position:absolute;left:1242px;top:244.7px;width:194px;height:18.5px;background:#837529;border-radius:0 0 4px 4px;"></div>
<span style="position:absolute;left:1257px;top:248.02px;font-size:12px;line-height:1;color:#e6e6e6;white-space:pre;font-weight:normal;letter-spacing:0.000px;text-shadow:0 1px 1px rgba(0,0,0,.8),0 0 2px rgba(0,0,0,.6);">Z</span>
<span style="position:absolute;right:109.5px;top:248.02px;font-size:12px;line-height:1;color:#e6e6e6;white-space:pre;font-weight:normal;letter-spacing:0.000px;text-shadow:0 1px 1px rgba(0,0,0,.8),0 0 2px rgba(0,0,0,.6);">0°</span>
<svg style="position:absolute;left:1462px;top:245.7px;" width="16" height="16" viewBox="0 0 16 16"><g fill="none" stroke="#cfcfcf" stroke-width="1.100"><path d="M2.500 7V5.200a2.700 2.700 0 0 1 5.400 0V8.500"/><rect x="6.500" y="8.500" width="8" height="6" rx=".8"/><path d="M9.500 11.500H11.500"/></g></svg>
<div style="position:absolute;left:1242px;top:268px;width:251px;height:18.3px;background:#282828;border-radius:4px;"></div>
<span style="position:absolute;left:1249.2px;top:270.84px;font-size:12px;line-height:1;color:#e6e6e6;white-space:pre;font-weight:normal;letter-spacing:-0.386px;">XYZ Euler</span>
<svg style="position:absolute;left:1481.4px;top:271.5px;" width="12" height="12" viewBox="0 0 12 12"><path d="M2.5 4.25 L6 7.75 L9.5 4.25" fill="none" stroke="#e6e6e6" stroke-width="1.3" stroke-linecap="round" stroke-linejoin="round"/></svg>
<span style="position:absolute;left:1242.3px;top:292.84px;font-size:12px;line-height:1;color:#d8d8d8;white-space:pre;font-weight:normal;letter-spacing:-0.552px;">Scale:</span>
<div style="position:absolute;left:1242px;top:310.0px;width:194px;height:18.5px;background:#837529;border-radius:4px 4px 0 0;"></div>
<span style="position:absolute;left:1257px;top:313.32px;font-size:12px;line-height:1;color:#e6e6e6;white-space:pre;font-weight:normal;letter-spacing:0.000px;text-shadow:0 1px 1px rgba(0,0,0,.8),0 0 2px rgba(0,0,0,.6);">X</span>
<span style="position:absolute;right:109.5px;top:313.32px;font-size:12px;line-height:1;color:#e6e6e6;white-space:pre;font-weight:normal;letter-spacing:0.000px;text-shadow:0 1px 1px rgba(0,0,0,.8),0 0 2px rgba(0,0,0,.6);">1.000</span>
<svg style="position:absolute;left:1462px;top:311.0px;" width="16" height="16" viewBox="0 0 16 16"><g fill="none" stroke="#cfcfcf" stroke-width="1.100"><path d="M2.500 7V5.200a2.700 2.700 0 0 1 5.400 0V8.500"/><rect x="6.500" y="8.500" width="8" height="6" rx=".8"/><path d="M9.500 11.500H11.500"/></g></svg>
<div style="position:absolute;left:1242px;top:329.5px;width:194px;height:18.5px;background:#837529;border-radius:0;"></div>
<span style="position:absolute;left:1257px;top:332.82px;font-size:12px;line-height:1;color:#e6e6e6;white-space:pre;font-weight:normal;letter-spacing:0.000px;text-shadow:0 1px 1px rgba(0,0,0,.8),0 0 2px rgba(0,0,0,.6);">Y</span>
<span style="position:absolute;right:109.5px;top:332.82px;font-size:12px;line-height:1;color:#e6e6e6;white-space:pre;font-weight:normal;letter-spacing:0.000px;text-shadow:0 1px 1px rgba(0,0,0,.8),0 0 2px rgba(0,0,0,.6);">1.000</span>
<svg style="position:absolute;left:1462px;top:330.5px;" width="16" height="16" viewBox="0 0 16 16"><g fill="none" stroke="#cfcfcf" stroke-width="1.100"><path d="M2.500 7V5.200a2.700 2.700 0 0 1 5.400 0V8.500"/><rect x="6.500" y="8.500" width="8" height="6" rx=".8"/><path d="M9.500 11.500H11.500"/></g></svg>
<div style="position:absolute;left:1242px;top:349.0px;width:194px;height:18.5px;background:#837529;border-radius:0 0 4px 4px;"></div>
<span style="position:absolute;left:1257px;top:352.32px;font-size:12px;line-height:1;color:#e6e6e6;white-space:pre;font-weight:normal;letter-spacing:0.000px;text-shadow:0 1px 1px rgba(0,0,0,.8),0 0 2px rgba(0,0,0,.6);">Z</span>
<span style="position:absolute;right:109.5px;top:352.32px;font-size:12px;line-height:1;color:#e6e6e6;white-space:pre;font-weight:normal;letter-spacing:0.000px;text-shadow:0 1px 1px rgba(0,0,0,.8),0 0 2px rgba(0,0,0,.6);">1.000</span>
<svg style="position:absolute;left:1462px;top:350.0px;" width="16" height="16" viewBox="0 0 16 16"><g fill="none" stroke="#cfcfcf" stroke-width="1.100"><path d="M2.500 7V5.200a2.700 2.700 0 0 1 5.400 0V8.500"/><rect x="6.500" y="8.500" width="8" height="6" rx=".8"/><path d="M9.500 11.500H11.500"/></g></svg>
<div style="position:absolute;left:1233px;top:379.4px;width:269px;height:185.2px;background:#3e3e3e;border-radius:5px;"></div>
<svg style="position:absolute;left:1240.5px;top:385.2px;" width="12" height="12" viewBox="0 0 12 12"><path d="M2 4.0 L6 8.0 L10 4.0" fill="none" stroke="#d0d0d0" stroke-width="1.1" stroke-linecap="round" stroke-linejoin="round"/></svg>
<span style="position:absolute;left:1255.5px;top:385.54px;font-size:12px;line-height:1;color:#e6e6e6;white-space:pre;font-weight:normal;letter-spacing:-0.189px;">Properties</span>
<svg style="position:absolute;left:1484.5px;top:388.5px;" width="12" height="5" viewBox="0 0 12 5"><rect x="0" y="0" width="1.200" height="1.300" fill="#272727"/><rect x="0" y="3" width="1.200" height="1.300" fill="#272727"/><rect x="3" y="0" width="1.200" height="1.300" fill="#272727"/><rect x="3" y="3" width="1.200" height="1.300" fill="#272727"/><rect x="6" y="0" width="1.200" height="1.300" fill="#272727"/><rect x="6" y="3" width="1.200" height="1.300" fill="#272727"/><rect x="9" y="0" width="1.200" height="1.300" fill="#272727"/><rect x="9" y="3" width="1.200" height="1.300" fill="#272727"/></svg>
<div style="position:absolute;left:1348px;top:412.7px;width:145px;height:18.3px;background:#837529;border-radius:4px;"></div>
<span style="position:absolute;right:193.79999999999995px;top:415.92px;font-size:12px;line-height:1;color:#d8d8d8;white-space:pre;font-weight:normal;letter-spacing:-0.186px;">FK &gt; IK Arm L</span>
<span style="position:absolute;left:1419.7px;transform:translateX(-50%);top:415.92px;font-size:12px;line-height:1;color:#e6e6e6;white-space:pre;font-weight:normal;letter-spacing:0.000px;text-shadow:0 1px 1px rgba(0,0,0,.8),0 0 2px rgba(0,0,0,.6);">0.000</span>
<div style="position:absolute;left:1348px;top:437.7px;width:145px;height:18.3px;background:#837529;border-radius:4px;"></div>
<span style="position:absolute;right:193.79999999999995px;top:440.92px;font-size:12px;line-height:1;color:#d8d8d8;white-space:pre;font-weight:normal;letter-spacing:-0.251px;">FK &gt; IK Arm R</span>
<span style="position:absolute;left:1419.7px;transform:translateX(-50%);top:440.92px;font-size:12px;line-height:1;color:#e6e6e6;white-space:pre;font-weight:normal;letter-spacing:0.000px;text-shadow:0 1px 1px rgba(0,0,0,.8),0 0 2px rgba(0,0,0,.6);">0.000</span>
<div style="position:absolute;left:1348px;top:462.7px;width:145px;height:18.3px;background:#837529;border-radius:4px;"></div>
<span style="position:absolute;right:193.79999999999995px;top:465.92px;font-size:12px;line-height:1;color:#d8d8d8;white-space:pre;font-weight:normal;letter-spacing:-0.327px;">FK &gt; IK Leg L</span>
<span style="position:absolute;left:1419.7px;transform:translateX(-50%);top:465.92px;font-size:12px;line-height:1;color:#e6e6e6;white-space:pre;font-weight:normal;letter-spacing:0.000px;text-shadow:0 1px 1px rgba(0,0,0,.8),0 0 2px rgba(0,0,0,.6);">1.000</span>
<div style="position:absolute;left:1348px;top:487.7px;width:145px;height:18.3px;background:#837529;border-radius:4px;"></div>
<span style="position:absolute;right:193.79999999999995px;top:490.92px;font-size:12px;line-height:1;color:#d8d8d8;white-space:pre;font-weight:normal;letter-spacing:-0.392px;">FK &gt; IK Leg R</span>
<span style="position:absolute;left:1419.7px;transform:translateX(-50%);top:490.92px;font-size:12px;line-height:1;color:#e6e6e6;white-space:pre;font-weight:normal;letter-spacing:0.000px;text-shadow:0 1px 1px rgba(0,0,0,.8),0 0 2px rgba(0,0,0,.6);">1.000</span>
<div style="position:absolute;left:1348px;top:512.7px;width:145px;height:18.3px;background:#837529;border-radius:4px;"></div>
<span style="position:absolute;right:193.79999999999995px;top:515.92px;font-size:12px;line-height:1;color:#d8d8d8;white-space:pre;font-weight:normal;letter-spacing:-0.064px;">IsoRot Arm  FK L</span>
<span style="position:absolute;left:1419.7px;transform:translateX(-50%);top:515.92px;font-size:12px;line-height:1;color:#e6e6e6;white-space:pre;font-weight:normal;letter-spacing:0.000px;text-shadow:0 1px 1px rgba(0,0,0,.8),0 0 2px rgba(0,0,0,.6);">1.000</span>
<div style="position:absolute;left:1348px;top:537.7px;width:145px;height:18.3px;background:#837529;border-radius:4px;"></div>
<span style="position:absolute;right:193.79999999999995px;top:540.92px;font-size:12px;line-height:1;color:#d8d8d8;white-space:pre;font-weight:normal;letter-spacing:-0.131px;">IsoRot Arm  FK R</span>
<span style="position:absolute;left:1419.7px;transform:translateX(-50%);top:540.92px;font-size:12px;line-height:1;color:#e6e6e6;white-space:pre;font-weight:normal;letter-spacing:0.000px;text-shadow:0 1px 1px rgba(0,0,0,.8),0 0 2px rgba(0,0,0,.6);">1.000</span>
<div style="position:absolute;left:1509px;top:69px;width:20px;height:541px;background:#1b1b1b;border-radius:0 0 0 4px;"></div>
<div style="position:absolute;left:1509px;top:72.7px;width:17px;height:40.599999999999994px;background:#343636;border-radius:0 5px 5px 0;"></div>
<span style="position:absolute;left:1517.8px;top:93.0px;transform:translate(-50%,-50%) rotate(90deg);font-size:12px;line-height:1;color:#ffffff;white-space:pre;letter-spacing:.3px">Item</span>
<div style="position:absolute;left:1509px;top:118px;width:17px;height:39px;background:#1e1e1e;border-radius:0 5px 5px 0;border:1px solid #363636;border-left:none;"></div>
<span style="position:absolute;left:1517.8px;top:137.5px;transform:translate(-50%,-50%) rotate(90deg);font-size:12px;line-height:1;color:#d6d6d6;white-space:pre;letter-spacing:.3px">Tool</span>
<div style="position:absolute;left:1509px;top:162.5px;width:17px;height:40.5px;background:#1e1e1e;border-radius:0 5px 5px 0;border:1px solid #363636;border-left:none;"></div>
<span style="position:absolute;left:1517.8px;top:182.75px;transform:translate(-50%,-50%) rotate(90deg);font-size:12px;line-height:1;color:#d6d6d6;white-space:pre;letter-spacing:.3px">View</span>
<div style="position:absolute;left:1501px;top:627px;width:14px;height:6px;background:rgba(70,70,70,.55);border-radius:4px 4px 0 0;"></div>
<svg style="position:absolute;left:1503px;top:628px;" width="10" height="5" viewBox="0 0 10 5"><path d="M1.500 4.500L5 1.500L8.500 4.500" fill="none" stroke="#bdbdbd" stroke-width="1"/></svg>
<div style="position:absolute;left:0px;top:635.5px;width:1529px;height:190.5px;background:#232323;border-radius:5px;overflow:hidden;"></div>
<div style="position:absolute;left:0px;top:635.5px;width:1529px;height:25.5px;background:#303030;border-radius:5px 5px 0 0;"></div>
<div style="position:absolute;left:0px;top:635.5px;width:1529px;height:1px;background:#454545;border-radius:0px;"></div>
<div style="position:absolute;left:3px;top:640px;width:30px;height:18px;background:#282828;border-radius:4px;box-shadow:0 0 0 .5px #3d3d3d;"></div>
<svg style="position:absolute;left:5.0px;top:640.8px;" width="16" height="16" viewBox="0 0 16 16"><path d="M1.500 9.500H5C8.500 9.500 8.500 3 13.500 2.500" fill="none" stroke="#f0f0f0" stroke-width="1.800" stroke-linecap="round"/><path d="M1.500 3C4.500 3.200 5.500 7 7 8.800" fill="none" stroke="#f0f0f0" stroke-width="1.100" stroke-linecap="round"/><path d="M5 12.500C7 15.500 8.500 11.500 13 12" fill="none" stroke="#9a9a9a" stroke-width="1.100" stroke-linecap="round"/></svg>
<svg style="position:absolute;left:21px;top:643.3px;" width="12" height="12" viewBox="0 0 12 12"><path d="M2.5 4.25 L6 7.75 L9.5 4.25" fill="none" stroke="#e6e6e6" stroke-width="1.3" stroke-linecap="round" stroke-linejoin="round"/></svg>
<span style="position:absolute;left:46.5px;top:642.82px;font-size:12px;line-height:1;color:#d4d4d4;white-space:pre;font-weight:normal;letter-spacing:-0.332px;">View</span>
<span style="position:absolute;left:87.5px;top:642.82px;font-size:12px;line-height:1;color:#d4d4d4;white-space:pre;font-weight:normal;letter-spacing:-0.512px;">Select</span>
<span style="position:absolute;left:134.5px;top:642.82px;font-size:12px;line-height:1;color:#d4d4d4;white-space:pre;font-weight:normal;letter-spacing:-0.429px;">Marker</span>
<span style="position:absolute;left:185.4px;top:642.82px;font-size:12px;line-height:1;color:#d4d4d4;white-space:pre;font-weight:normal;letter-spacing:-0.184px;">Channel</span>
<span style="position:absolute;left:244.6px;top:642.82px;font-size:12px;line-height:1;color:#d4d4d4;white-space:pre;font-weight:normal;letter-spacing:-1.000px;">Key</span>
<div style="position:absolute;left:277.3px;top:640.3px;width:89.5px;height:17.5px;background:#4772b3;border-radius:4px 0 0 4px;"></div>
<svg style="position:absolute;left:281px;top:641.5px;" width="16" height="15" viewBox="0 0 16 15"><g fill="none" stroke="#fff" stroke-width="1.200"><path d="M1.500 4.500V1.500H4.500M11.500 1.500H14.500V4.500M14.500 10.500V13.500H11.500M4.500 13.500H1.500V10.500"/><path d="M4.500 4L7.500 11L9.500 5.500L11.500 9.500"/></g></svg>
<span style="position:absolute;left:304.7px;top:642.82px;font-size:12px;line-height:1;color:#ffffff;white-space:pre;font-weight:normal;letter-spacing:-0.214px;">Normalize</span>
<div style="position:absolute;left:367.6px;top:640.3px;width:19.4px;height:17.5px;background:#4772b3;border-radius:0 4px 4px 0;"></div>
<svg style="position:absolute;left:369.5px;top:641.2px;" width="16" height="16" viewBox="0 0 16 16"><g fill="none" stroke="#fff" stroke-width="1.300"><path d="M2.500 7A5.500 5.500 0 0 1 13 5"/><path d="M13.500 9A5.500 5.500 0 0 1 3 11"/><path d="M13.500 1.500V5.500H9.500M2.500 14.500V10.500H6.500"/></g></svg>
<div style="position:absolute;left:1262.8px;top:640px;width:18.4px;height:18px;background:#4772b3;border-radius:4px 0 0 4px;"></div>
<svg style="position:absolute;left:1264.0px;top:640.8px;" width="16" height="16" viewBox="0 0 16 16"><path d="M2.500 1.200L14 8L8.800 9.200L6.300 14.500Z" fill="#fff"/></svg>
<div style="position:absolute;left:1281.7px;top:640px;width:19.4px;height:18px;background:#4772b3;border-radius:0px;"></div>
<svg style="position:absolute;left:1283.8px;top:641.3px;" width="15" height="15" viewBox="0 0 16 16"><g fill="none" stroke="#fff" stroke-width="1.300"><path d="M1 5V1H5M11 1H15V5M15 11V15H11M5 15H1V11"/></g><rect x="4.500" y="4.500" width="7" height="7" fill="none" stroke="#fff" stroke-width="1.100" stroke-dasharray="2 1.300"/></svg>
<div style="position:absolute;left:1301.6px;top:640px;width:19.4px;height:18px;background:#545454;border-radius:0 4px 4px 0;"></div>
<svg style="position:absolute;left:1303.8px;top:641.0px;" width="15" height="15" viewBox="0 0 16 16"><path d="M8 .800L15.500 14.500H.5Z" fill="#e6e6e6" stroke="#e6e6e6" stroke-width=".8" stroke-linejoin="round"/><path d="M8 5V10.300" stroke="#545454" stroke-width="1.800"/><circle cx="8" cy="12.400" r="1" fill="#545454"/></svg>
<div style="position:absolute;left:1327.5px;top:640px;width:19px;height:18px;background:#545454;border-radius:4px;"></div>
<svg style="position:absolute;left:1329.5px;top:641.3px;" width="15" height="15" viewBox="0 0 16 16"><g fill="none" stroke="#e6e6e6" stroke-width="1.200"><rect x="2.500" y="1.500" width="10" height="10"/><path d="M2.500 11.500L7 6L9 8L12.500 2.500"/><path d="M1 14.500H14.500M13 12V16"/></g></svg>
<div style="position:absolute;left:1352.4px;top:640px;width:31.2px;height:18px;background:#282828;border-radius:4px;box-shadow:0 0 0 .5px #3d3d3d;"></div>
<svg style="position:absolute;left:1355.0px;top:641.3px;" width="15" height="15" viewBox="0 0 16 16"><path d="M1 1.500H15L9.800 8V15L6.500 12.500V8Z" fill="none" stroke="#e6e6e6" stroke-width="1.300" stroke-linejoin="round"/></svg>
<svg style="position:absolute;left:1371.5px;top:643.3px;" width="12" height="12" viewBox="0 0 12 12"><path d="M2.5 4.25 L6 7.75 L9.5 4.25" fill="none" stroke="#e6e6e6" stroke-width="1.3" stroke-linecap="round" stroke-linejoin="round"/></svg>
<div style="position:absolute;left:1389.5px;top:640px;width:31px;height:18px;background:#282828;border-radius:4px;box-shadow:0 0 0 .5px #3d3d3d;"></div>
<svg style="position:absolute;left:1393.0px;top:641.3px;" width="15" height="15" viewBox="0 0 16 16"><g fill="none" stroke="#e6e6e6" stroke-width="1.200"><path d="M2 5V2H5M11 2H14V5M14 11V14H11M5 14H2V11"/></g><circle cx="8" cy="8" r="1.800" fill="#e6e6e6"/></svg>
<svg style="position:absolute;left:1408.5px;top:643.3px;" width="12" height="12" viewBox="0 0 12 12"><path d="M2.5 4.25 L6 7.75 L9.5 4.25" fill="none" stroke="#e6e6e6" stroke-width="1.3" stroke-linecap="round" stroke-linejoin="round"/></svg>
<div style="position:absolute;left:1427px;top:640px;width:18.3px;height:18px;background:#4772b3;border-radius:4px 0 0 4px;"></div>
<svg style="position:absolute;left:1428.7px;top:641.3px;" width="15" height="15" viewBox="0 0 16 16"><path d="M3 8A5 5 0 1 1 8 13" fill="none" stroke="#fff" stroke-width="2.800" stroke-dasharray="2 .9 17.800 .9 2"/><path d="M1 11.500H3.800V14.300H6.500" fill="none" stroke="#fff" stroke-width="1.100" stroke-dasharray="1.800 1"/></svg>
<div style="position:absolute;left:1445.7px;top:640px;width:19.6px;height:18px;background:#282828;border-radius:0 4px 4px 0;"></div>
<svg style="position:absolute;left:1449.5px;top:643.3px;" width="12" height="12" viewBox="0 0 12 12"><path d="M2.5 4.25 L6 7.75 L9.5 4.25" fill="none" stroke="#e6e6e6" stroke-width="1.3" stroke-linecap="round" stroke-linejoin="round"/></svg>
<div style="position:absolute;left:1471.7px;top:640px;width:18.5px;height:18px;background:#545454;border-radius:4px 0 0 4px;"></div>
<svg style="position:absolute;left:1473.5px;top:641.3px;" width="15" height="15" viewBox="0 0 16 16"><circle cx="8" cy="8" r="6.600" fill="none" stroke="#cfcfcf" stroke-width="1.200"/><circle cx="8" cy="8" r="2" fill="#e0e0e0"/></svg>
<div style="position:absolute;left:1490.7px;top:640px;width:31.7px;height:18px;background:#2c2c2c;border-radius:0 4px 4px 0;box-shadow:0 0 0 .5px #3a3a3a;"></div>
<svg style="position:absolute;left:1494.5px;top:641.3px;" width="15" height="15" viewBox="0 0 16 16"><path d="M.5 13.500C5.500 13.500 5.800 2 8 2C10.200 2 10.500 13.500 15.500 13.500" fill="none" stroke="#606060" stroke-width="1.100"/></svg>
<svg style="position:absolute;left:1510.5px;top:643.3px;" width="12" height="12" viewBox="0 0 12 12"><path d="M2.5 4.25 L6 7.75 L9.5 4.25" fill="none" stroke="#555" stroke-width="1.3" stroke-linecap="round" stroke-linejoin="round"/></svg>
<div style="position:absolute;left:0px;top:661px;width:203px;height:165px;background:#1e1e1e;border-radius:0px;"></div>
<div style="position:absolute;left:0px;top:662.8px;width:178.5px;height:18.8px;background:#1d1d1d;border-radius:4px 0 0 4px;box-shadow:inset 0 0 0 1px #3a3a3a;"></div>
<svg style="position:absolute;left:1.0px;top:663.8px;" width="16" height="16" viewBox="0 0 16 16"><circle cx="9.500" cy="6" r="4.300" fill="none" stroke="#d0d0d0" stroke-width="1.200"/><path d="M6.500 9L1.500 14" stroke="#d0d0d0" stroke-width="1.400" stroke-linecap="round"/></svg>
<span style="position:absolute;left:22.7px;top:666.42px;font-size:12px;line-height:1;color:#6a6a6a;white-space:pre;font-weight:normal;letter-spacing:-0.746px;">Search</span>
<div style="position:absolute;left:178.5px;top:662.8px;width:22px;height:18.8px;background:#545454;border-radius:0 4px 4px 0;"></div>
<svg style="position:absolute;left:182.0px;top:664.6999999999999px;" width="15" height="15" viewBox="0 0 16 16"><path d="M2 8H14M5 5L2 8L5 11M11 5L14 8L11 11" fill="none" stroke="#e0e0e0" stroke-width="1.200"/></svg>
<div style="position:absolute;left:0px;top:686px;width:203px;height:16.5px;background:#20507f;border-radius:0px;"></div>
<svg style="position:absolute;left:-2px;top:688px;" width="12" height="12" viewBox="0 0 12 12"><path d="M2.5 4.25 L6 7.75 L9.5 4.25" fill="none" stroke="#e0e0e0" stroke-width="1.2" stroke-linecap="round" stroke-linejoin="round"/></svg>
<svg style="position:absolute;left:11px;top:686.5px;" width="16" height="16" viewBox="0 0 16 16"><g fill="#c4c4c4"><circle cx="8" cy="2.800" r="2.100"/><path d="M1 4.500L6 5.500H10L15 4.500L15.300 7.200L10.800 8.200L13.500 14.500L10.500 15L8 10.500L5.500 15L2.500 14.500L5.200 8.200L.7 7.200Z"/></g></svg>
<svg style="position:absolute;left:30.0px;top:686.5px;" width="15" height="15" viewBox="0 0 16 16"><path d="M9.500 1.500L14.500 6.500L12.500 7L10 9.500L9.500 12.500L3.500 6.500L6.500 6L9 3.500Z" fill="none" stroke="#86a6d6" stroke-width="1.100" stroke-linejoin="round"/><path d="M6.500 9.500L1.500 14.500" stroke="#86a6d6" stroke-width="1.200"/></svg>
<svg style="position:absolute;left:47.3px;top:688px;" width="14" height="11.4" viewBox="0 0 16 13"><path d="M.8 6.500C3.500 1.500 12.500 1.500 15.200 6.500C12.500 11.500 3.500 11.500 .8 6.500Z" fill="#fff"/><circle cx="8" cy="6.500" r="3.300" fill="#20507f"/><circle cx="8" cy="6.500" r="1.700" fill="#fff"/></svg>
<span style="position:absolute;left:65.5px;top:688.32px;font-size:12px;line-height:1;color:#e9b938;white-space:pre;font-weight:normal;letter-spacing:-0.123px;">Armature</span>
<div style="position:absolute;left:1px;top:703.8px;width:202px;height:16.5px;background:#0e1b52;border-radius:0px;"></div>
<svg style="position:absolute;left:5px;top:706.5px;" width="8" height="11" viewBox="0 0 8 11"><path d="M2.500 1.500L6.500 5.500L2.500 9.500" fill="none" stroke="#e0e0e0" stroke-width="1.200"/></svg>
<svg style="position:absolute;left:18.5px;top:704.5px;" width="15" height="15" viewBox="0 0 16 16"><path d="M3.500 2H12.500V5H3.500Z" fill="#e0e0e0" fill-opacity=".5"/><path d="M2.500 1L5 3.500L2.500 6L0 3.500Z M13.500 1L16 3.500L13.500 6L11 3.500Z" fill="#e8e8e8"/><path d="M8 8.300L11 11.300L8 14.300L5 11.300Z" fill="none" stroke="#e0e0e0" stroke-width="1.100"/></svg>
<span style="position:absolute;left:38px;top:706.32px;font-size:12px;line-height:1;color:#e6e6e6;white-space:pre;font-weight:normal;letter-spacing:-0.022px;">Avatar_Action.002</span>
<div style="position:absolute;left:203px;top:661px;width:1107px;height:23px;background:#151515;border-radius:0px;"></div>
<svg style="position:absolute;left:203px;top:684px;overflow:hidden;" width="1107" height="142" viewBox="0 0 1107 142"><rect x="0" y="0" width="1107" height="142" fill="#212121"/><rect x="115.39999999999998" y="0" width="1107" height="142" fill="#262626"/><rect x="115.39999999999998" y="75.79999999999995" width="1107" height="33.800" fill="#2d2d2d"/><path d="M1.15 0V142" stroke="#151515" stroke-width="1.100"/><path d="M29.71 0V142" stroke="#1c1c1c" stroke-width="1.100"/><path d="M58.27 0V142" stroke="#151515" stroke-width="1.100"/><path d="M86.84 0V142" stroke="#1c1c1c" stroke-width="1.100"/><path d="M115.40 0V142" stroke="#151515" stroke-width="1.100"/><path d="M143.96 0V142" stroke="#1c1c1c" stroke-width="1.100"/><path d="M172.52 0V142" stroke="#151515" stroke-width="1.100"/><path d="M201.09 0V142" stroke="#1c1c1c" stroke-width="1.100"/><path d="M229.65 0V142" stroke="#151515" stroke-width="1.100"/><path d="M258.21 0V142" stroke="#1c1c1c" stroke-width="1.100"/><path d="M286.77 0V142" stroke="#151515" stroke-width="1.100"/><path d="M315.34 0V142" stroke="#1c1c1c" stroke-width="1.100"/><path d="M343.90 0V142" stroke="#151515" stroke-width="1.100"/><path d="M372.46 0V142" stroke="#1c1c1c" stroke-width="1.100"/><path d="M401.02 0V142" stroke="#151515" stroke-width="1.100"/><path d="M429.59 0V142" stroke="#1c1c1c" stroke-width="1.100"/><path d="M458.15 0V142" stroke="#151515" stroke-width="1.100"/><path d="M486.71 0V142" stroke="#1c1c1c" stroke-width="1.100"/><path d="M515.27 0V142" stroke="#151515" stroke-width="1.100"/><path d="M543.84 0V142" stroke="#1c1c1c" stroke-width="1.100"/><path d="M572.40 0V142" stroke="#151515" stroke-width="1.100"/><path d="M600.96 0V142" stroke="#1c1c1c" stroke-width="1.100"/><path d="M629.52 0V142" stroke="#151515" stroke-width="1.100"/><path d="M658.09 0V142" stroke="#1c1c1c" stroke-width="1.100"/><path d="M686.65 0V142" stroke="#151515" stroke-width="1.100"/><path d="M715.21 0V142" stroke="#1c1c1c" stroke-width="1.100"/><path d="M743.77 0V142" stroke="#151515" stroke-width="1.100"/><path d="M772.34 0V142" stroke="#1c1c1c" stroke-width="1.100"/><path d="M800.90 0V142" stroke="#151515" stroke-width="1.100"/><path d="M829.46 0V142" stroke="#1c1c1c" stroke-width="1.100"/><path d="M858.03 0V142" stroke="#151515" stroke-width="1.100"/><path d="M886.59 0V142" stroke="#1c1c1c" stroke-width="1.100"/><path d="M915.15 0V142" stroke="#151515" stroke-width="1.100"/><path d="M943.71 0V142" stroke="#1c1c1c" stroke-width="1.100"/><path d="M972.28 0V142" stroke="#151515" stroke-width="1.100"/><path d="M1000.84 0V142" stroke="#1c1c1c" stroke-width="1.100"/><path d="M1029.40 0V142" stroke="#151515" stroke-width="1.100"/><path d="M1057.96 0V142" stroke="#1c1c1c" stroke-width="1.100"/><path d="M1086.53 0V142" stroke="#151515" stroke-width="1.100"/><path d="M0 1.6000000000000227H1107" stroke="#181818" stroke-width="1.100"/><path d="M0 47.39999999999998H1107" stroke="#181818" stroke-width="1.100"/><path d="M0 137.39999999999998H1107" stroke="#181818" stroke-width="1.100"/><path d="M0 92.39999999999998H1107" stroke="#4772b3" stroke-width="1.600"/></svg>
<span style="position:absolute;left:261.275px;transform:translateX(-50%);top:667.64px;font-size:12px;line-height:1;color:#b8b8b8;white-space:pre;font-weight:normal;letter-spacing:0.000px;">-5</span>
<span style="position:absolute;left:375.525px;transform:translateX(-50%);top:667.64px;font-size:12px;line-height:1;color:#b8b8b8;white-space:pre;font-weight:normal;letter-spacing:0.000px;">5</span>
<span style="position:absolute;left:432.65px;transform:translateX(-50%);top:667.64px;font-size:12px;line-height:1;color:#b8b8b8;white-space:pre;font-weight:normal;letter-spacing:0.000px;">10</span>
<span style="position:absolute;left:489.775px;transform:translateX(-50%);top:667.64px;font-size:12px;line-height:1;color:#b8b8b8;white-space:pre;font-weight:normal;letter-spacing:0.000px;">15</span>
<span style="position:absolute;left:546.9px;transform:translateX(-50%);top:667.64px;font-size:12px;line-height:1;color:#b8b8b8;white-space:pre;font-weight:normal;letter-spacing:0.000px;">20</span>
<span style="position:absolute;left:604.025px;transform:translateX(-50%);top:667.64px;font-size:12px;line-height:1;color:#b8b8b8;white-space:pre;font-weight:normal;letter-spacing:0.000px;">25</span>
<span style="position:absolute;left:661.15px;transform:translateX(-50%);top:667.64px;font-size:12px;line-height:1;color:#b8b8b8;white-space:pre;font-weight:normal;letter-spacing:0.000px;">30</span>
<span style="position:absolute;left:718.275px;transform:translateX(-50%);top:667.64px;font-size:12px;line-height:1;color:#b8b8b8;white-space:pre;font-weight:normal;letter-spacing:0.000px;">35</span>
<span style="position:absolute;left:775.4px;transform:translateX(-50%);top:667.64px;font-size:12px;line-height:1;color:#b8b8b8;white-space:pre;font-weight:normal;letter-spacing:0.000px;">40</span>
<span style="position:absolute;left:832.525px;transform:translateX(-50%);top:667.64px;font-size:12px;line-height:1;color:#b8b8b8;white-space:pre;font-weight:normal;letter-spacing:0.000px;">45</span>
<span style="position:absolute;left:889.65px;transform:translateX(-50%);top:667.64px;font-size:12px;line-height:1;color:#b8b8b8;white-space:pre;font-weight:normal;letter-spacing:0.000px;">50</span>
<span style="position:absolute;left:946.775px;transform:translateX(-50%);top:667.64px;font-size:12px;line-height:1;color:#b8b8b8;white-space:pre;font-weight:normal;letter-spacing:0.000px;">55</span>
<span style="position:absolute;left:1003.9px;transform:translateX(-50%);top:667.64px;font-size:12px;line-height:1;color:#b8b8b8;white-space:pre;font-weight:normal;letter-spacing:0.000px;">60</span>
<span style="position:absolute;left:1061.025px;transform:translateX(-50%);top:667.64px;font-size:12px;line-height:1;color:#b8b8b8;white-space:pre;font-weight:normal;letter-spacing:0.000px;">65</span>
<span style="position:absolute;left:1118.15px;transform:translateX(-50%);top:667.64px;font-size:12px;line-height:1;color:#b8b8b8;white-space:pre;font-weight:normal;letter-spacing:0.000px;">70</span>
<span style="position:absolute;left:1175.275px;transform:translateX(-50%);top:667.64px;font-size:12px;line-height:1;color:#b8b8b8;white-space:pre;font-weight:normal;letter-spacing:0.000px;">75</span>
<span style="position:absolute;left:1232.4px;transform:translateX(-50%);top:667.64px;font-size:12px;line-height:1;color:#b8b8b8;white-space:pre;font-weight:normal;letter-spacing:0.000px;">80</span>
<span style="position:absolute;left:1289.525px;transform:translateX(-50%);top:667.64px;font-size:12px;line-height:1;color:#b8b8b8;white-space:pre;font-weight:normal;letter-spacing:0.000px;">85</span>
<div style="position:absolute;left:317.4px;top:681px;width:2.1px;height:144px;background:#4772b3;border-radius:0px;"></div>
<div style="position:absolute;left:306.3px;top:664.6px;width:24.2px;height:16.4px;background:#4772b3;border-radius:4px;"></div>
<span style="position:absolute;left:318.4px;transform:translateX(-50%);top:667.64px;font-size:12px;line-height:1;color:#ffffff;white-space:pre;font-weight:normal;letter-spacing:0.000px;">0</span>
<span style="position:absolute;left:214px;transform:translateX(-50%);top:680.14px;font-size:12px;line-height:1;color:#d8d8d8;white-space:pre;font-weight:normal;letter-spacing:0.000px;text-shadow:0 1px 1px rgba(0,0,0,.8),0 0 2px rgba(0,0,0,.6);">5</span>
<span style="position:absolute;left:214px;transform:translateX(-50%);top:770.14px;font-size:12px;line-height:1;color:#d8d8d8;white-space:pre;font-weight:normal;letter-spacing:0.000px;text-shadow:0 1px 1px rgba(0,0,0,.8),0 0 2px rgba(0,0,0,.6);">0</span>
<div style="position:absolute;left:213px;top:815px;width:1088px;height:7.5px;background:#505050;border-radius:4px;"></div>
<svg style="position:absolute;left:213px;top:815px;" width="8" height="8" viewBox="0 0 8 8"><circle cx="4" cy="3.800" r="2.600" fill="#1a1a1a" stroke="#5a5a5a" stroke-width=".8"/></svg>
<svg style="position:absolute;left:1293px;top:815px;" width="8" height="8" viewBox="0 0 8 8"><circle cx="4" cy="3.800" r="2.600" fill="#1a1a1a" stroke="#5a5a5a" stroke-width=".8"/></svg>
<div style="position:absolute;left:1299.2px;top:685.7px;width:8px;height:127px;background:#505050;border-radius:4px;"></div>
<svg style="position:absolute;left:1299.2px;top:686px;" width="8" height="8" viewBox="0 0 8 8"><circle cx="4" cy="4" r="2.600" fill="#1a1a1a" stroke="#5a5a5a" stroke-width=".8"/></svg>
<svg style="position:absolute;left:1299.2px;top:804.5px;" width="8" height="8" viewBox="0 0 8 8"><circle cx="4" cy="4" r="2.600" fill="#1a1a1a" stroke="#5a5a5a" stroke-width=".8"/></svg>
<div style="position:absolute;left:1310px;top:661px;width:219px;height:165px;background:#303030;border-radius:0 0 5px 0;"></div>
<div style="position:absolute;left:1318px;top:662.8px;width:204px;height:123px;background:#3d3d3d;border-radius:5px;"></div>
<svg style="position:absolute;left:1325px;top:670.2px;" width="12" height="12" viewBox="0 0 12 12"><path d="M2 4.0 L6 8.0 L10 4.0" fill="none" stroke="#d0d0d0" stroke-width="1.1" stroke-linecap="round" stroke-linejoin="round"/></svg>
<div style="position:absolute;left:1339px;top:670px;width:12.2px;height:12px;background:#4772b3;border-radius:3px;"></div>
<svg style="position:absolute;left:1339px;top:670px;" width="12.2" height="12" viewBox="0 0 12.2 12"><path d="M2.800 6.200L5.200 8.800L9.600 3.200" fill="none" stroke="#fff" stroke-width="1.600"/></svg>
<span style="position:absolute;left:1354.3px;top:669.94px;font-size:12px;line-height:1;color:#ffffff;white-space:pre;font-weight:normal;letter-spacing:-0.066px;">Show Cursor</span>
<svg style="position:absolute;left:1504.5px;top:674px;" width="12" height="5" viewBox="0 0 12 5"><rect x="0" y="0" width="1.200" height="1.300" fill="#272727"/><rect x="0" y="3" width="1.200" height="1.300" fill="#272727"/><rect x="3" y="0" width="1.200" height="1.300" fill="#272727"/><rect x="3" y="3" width="1.200" height="1.300" fill="#272727"/><rect x="6" y="0" width="1.200" height="1.300" fill="#272727"/><rect x="6" y="3" width="1.200" height="1.300" fill="#272727"/><rect x="9" y="0" width="1.200" height="1.300" fill="#272727"/><rect x="9" y="3" width="1.200" height="1.300" fill="#272727"/></svg>
<div style="position:absolute;left:1407px;top:697px;width:106px;height:17.6px;background:#545454;border-radius:4px 4px 0 0;"></div>
<div style="position:absolute;left:1407px;top:716px;width:106px;height:18.6px;background:#545454;border-radius:0 0 4px 4px;"></div>
<span style="position:absolute;right:135.5px;top:700.44px;font-size:12px;line-height:1;color:#d8d8d8;white-space:pre;font-weight:normal;letter-spacing:-0.192px;">Cursor X</span>
<span style="position:absolute;right:135.5px;top:719.44px;font-size:12px;line-height:1;color:#d8d8d8;white-space:pre;font-weight:normal;letter-spacing:0.000px;">Y</span>
<span style="position:absolute;left:1459.7px;transform:translateX(-50%);top:700.14px;font-size:12px;line-height:1;color:#e6e6e6;white-space:pre;font-weight:normal;letter-spacing:0.000px;">0</span>
<span style="position:absolute;left:1459.7px;transform:translateX(-50%);top:719.14px;font-size:12px;line-height:1;color:#e6e6e6;white-space:pre;font-weight:normal;letter-spacing:0.000px;">0.000</span>
<div style="position:absolute;left:1327px;top:739.4px;width:186px;height:17.4px;background:#545454;border-radius:4px 4px 0 0;"></div>
<div style="position:absolute;left:1327px;top:758px;width:186px;height:18.8px;background:#545454;border-radius:0 0 4px 4px;"></div>
<span style="position:absolute;left:1369.3px;top:742.14px;font-size:12px;line-height:1;color:#e6e6e6;white-space:pre;font-weight:normal;letter-spacing:-0.058px;">Cursor to Selection</span>
<span style="position:absolute;left:1352.3px;top:761.34px;font-size:12px;line-height:1;color:#e6e6e6;white-space:pre;font-weight:normal;letter-spacing:-0.037px;">Cursor Value to Selection</span>
<div style="position:absolute;left:0px;top:828px;width:1529px;height:121px;background:#232323;border-radius:5px;overflow:hidden;"></div>
<div style="position:absolute;left:0px;top:828px;width:1529px;height:25.5px;background:#303030;border-radius:5px 5px 0 0;"></div>
<div style="position:absolute;left:0px;top:828px;width:1529px;height:1px;background:#454545;border-radius:0px;"></div>
<div style="position:absolute;left:3px;top:831.5px;width:30.5px;height:18.5px;background:#282828;border-radius:4px;box-shadow:0 0 0 .5px #3d3d3d;"></div>
<svg style="position:absolute;left:6.0px;top:833.5px;" width="15" height="15" viewBox="0 0 16 16"><path d="M3.500 2H12.500V5H3.500Z" fill="#e0e0e0" fill-opacity=".5"/><path d="M2.500 1L5 3.500L2.500 6L0 3.500Z M13.500 1L16 3.500L13.500 6L11 3.500Z" fill="#e8e8e8"/><path d="M8 8.300L11 11.300L8 14.300L5 11.300Z" fill="none" stroke="#e0e0e0" stroke-width="1.100"/></svg>
<svg style="position:absolute;left:21.5px;top:835.5px;" width="12" height="12" viewBox="0 0 12 12"><path d="M2.5 4.25 L6 7.75 L9.5 4.25" fill="none" stroke="#e6e6e6" stroke-width="1.3" stroke-linecap="round" stroke-linejoin="round"/></svg>
<div style="position:absolute;left:40px;top:831.5px;width:128.4px;height:18.5px;background:#282828;border-radius:4px;box-shadow:0 0 0 .5px #3d3d3d;"></div>
<svg style="position:absolute;left:43.5px;top:833.5px;" width="15" height="15" viewBox="0 0 16 16"><g fill="none" stroke="#e6e6e6" stroke-width="1.200"><path d="M1.500 4.500V1.500H4.500M11.500 1.500H14.500V4.500M14.500 11.500V14.500H11.500M4.500 14.500H1.500V11.500"/></g><rect x="4" y="4" width="8" height="8" fill="#e6e6e6"/></svg>
<span style="position:absolute;left:65.2px;top:835.02px;font-size:12px;line-height:1;color:#e6e6e6;white-space:pre;font-weight:normal;letter-spacing:0.146px;">Action Editor</span>
<svg style="position:absolute;left:156px;top:835.5px;" width="12" height="12" viewBox="0 0 12 12"><path d="M2.5 4.25 L6 7.75 L9.5 4.25" fill="none" stroke="#e6e6e6" stroke-width="1.3" stroke-linecap="round" stroke-linejoin="round"/></svg>
<span style="position:absolute;left:181px;top:835.02px;font-size:12px;line-height:1;color:#d4d4d4;white-space:pre;font-weight:normal;letter-spacing:0.068px;">View</span>
<span style="position:absolute;left:222.2px;top:835.02px;font-size:12px;line-height:1;color:#d4d4d4;white-space:pre;font-weight:normal;letter-spacing:-0.392px;">Select</span>
<span style="position:absolute;left:269.2px;top:835.02px;font-size:12px;line-height:1;color:#d4d4d4;white-space:pre;font-weight:normal;letter-spacing:-0.409px;">Marker</span>
<span style="position:absolute;left:320.2px;top:835.02px;font-size:12px;line-height:1;color:#d4d4d4;white-space:pre;font-weight:normal;letter-spacing:-0.151px;">Channel</span>
<span style="position:absolute;left:379.2px;top:835.02px;font-size:12px;line-height:1;color:#d4d4d4;white-space:pre;font-weight:normal;letter-spacing:-1.000px;">Key</span>
<span style="position:absolute;left:413px;top:835.02px;font-size:12px;line-height:1;color:#d4d4d4;white-space:pre;font-weight:normal;letter-spacing:0.228px;">Action</span>
<div style="position:absolute;left:554.3px;top:832px;width:31px;height:18px;background:#282828;border-radius:4px 0 0 4px;box-shadow:0 0 0 .5px #3d3d3d;"></div>
<svg style="position:absolute;left:557.5px;top:833.5px;" width="15" height="15" viewBox="0 0 16 16"><path d="M3.500 2H12.500V5H3.500Z" fill="#e0e0e0" fill-opacity=".5"/><path d="M2.500 1L5 3.500L2.500 6L0 3.500Z M13.500 1L16 3.500L13.500 6L11 3.500Z" fill="#e8e8e8"/><path d="M8 8.300L11 11.300L8 14.300L5 11.300Z" fill="none" stroke="#e0e0e0" stroke-width="1.100"/></svg>
<svg style="position:absolute;left:572.5px;top:835.5px;" width="12" height="12" viewBox="0 0 12 12"><path d="M2.5 4.25 L6 7.75 L9.5 4.25" fill="none" stroke="#e6e6e6" stroke-width="1.3" stroke-linecap="round" stroke-linejoin="round"/></svg>
<div style="position:absolute;left:585.7px;top:832px;width:112.8px;height:18px;background:#1d1d1d;border-radius:0px;box-shadow:0 0 0 .5px #3d3d3d;"></div>
<span style="position:absolute;left:593.5px;top:835.02px;font-size:12px;line-height:1;color:#e6e6e6;white-space:pre;font-weight:normal;letter-spacing:-0.072px;">Avatar_Action.002</span>
<div style="position:absolute;left:698.8px;top:832px;width:19.4px;height:18px;background:#4772b3;border-radius:0px;"></div>
<svg style="position:absolute;left:701.0px;top:833.5px;" width="15" height="15" viewBox="0 0 16 16"><path d="M8 1L14 3.200V8C14 11.500 11 14 8 15C5 14 2 11.500 2 8V3.200Z" fill="#fff"/><path d="M5 8L7.300 10.500L11.500 5.500" fill="none" stroke="#4772b3" stroke-width="1.800"/></svg>
<div style="position:absolute;left:718.6px;top:832px;width:19.4px;height:18px;background:#545454;border-radius:0px;"></div>
<svg style="position:absolute;left:720.8px;top:833.5px;" width="15" height="15" viewBox="0 0 16 16"><g fill="none" stroke="#e6e6e6" stroke-width="1.200"><path d="M5.500 4.500V1.500H11.500L14.500 4.500V11.500H10.500"/><path d="M11.500 1.500V4.500H14.500"/><rect x="1.500" y="4.500" width="9" height="10"/></g></svg>
<div style="position:absolute;left:738.4px;top:832px;width:19.6px;height:18px;background:#545454;border-radius:0 4px 4px 0;"></div>
<svg style="position:absolute;left:741.2px;top:834.0px;" width="14" height="14" viewBox="0 0 16 16"><path d="M3.500 3.500L12.500 12.500M12.500 3.500L3.500 12.500" stroke="#e6e6e6" stroke-width="1.300"/></svg>
<div style="position:absolute;left:767.5px;top:832px;width:30.3px;height:18px;background:#282828;border-radius:4px 0 0 4px;box-shadow:0 0 0 .5px #3d3d3d;"></div>
<svg style="position:absolute;left:770.5px;top:833.5px;" width="15" height="15" viewBox="0 0 16 16"><path d="M3.500 2H12.500V5H3.500Z" fill="#e0e0e0" fill-opacity=".5"/><path d="M2.500 1L5 3.500L2.500 6L0 3.500Z M13.500 1L16 3.500L13.500 6L11 3.500Z" fill="#e8e8e8"/><path d="M3.500 8V13.500H7" fill="none" stroke="#e0e0e0" stroke-width="1.100" stroke-dasharray="2 1.200"/><rect x="8.500" y="11" width="6.500" height="3.500" fill="#e8e8e8"/></svg>
<svg style="position:absolute;left:785.5px;top:835.5px;" width="12" height="12" viewBox="0 0 12 12"><path d="M2.5 4.25 L6 7.75 L9.5 4.25" fill="none" stroke="#e6e6e6" stroke-width="1.3" stroke-linecap="round" stroke-linejoin="round"/></svg>
<div style="position:absolute;left:798.2px;top:832px;width:108.6px;height:18px;background:#1d1d1d;border-radius:0px;box-shadow:0 0 0 .5px #3d3d3d;"></div>
<span style="position:absolute;left:806.4px;top:835.02px;font-size:12px;line-height:1;color:#e6e6e6;white-space:pre;font-weight:normal;letter-spacing:-0.127px;">Avatar_Animation</span>
<div style="position:absolute;left:907.2px;top:832px;width:19.6px;height:18px;background:#545454;border-radius:0px;"></div>
<svg style="position:absolute;left:909.5px;top:833.5px;" width="15" height="15" viewBox="0 0 16 16"><g fill="none" stroke="#e6e6e6" stroke-width="1.200"><path d="M5.500 4.500V1.500H11.500L14.500 4.500V11.500H10.500"/><path d="M11.500 1.500V4.500H14.500"/><rect x="1.500" y="4.500" width="9" height="10"/></g></svg>
<div style="position:absolute;left:927.2px;top:832px;width:19.8px;height:18px;background:#545454;border-radius:0 4px 4px 0;"></div>
<svg style="position:absolute;left:930.0px;top:834.0px;" width="14" height="14" viewBox="0 0 16 16"><path d="M3.500 3.500L12.500 12.500M12.500 3.500L3.500 12.500" stroke="#e6e6e6" stroke-width="1.300"/></svg>
<div style="position:absolute;left:1304px;top:832px;width:19px;height:18px;background:#545454;border-radius:4px 0 0 4px;"></div>
<svg style="position:absolute;left:1306.0px;top:833.5px;" width="15" height="15" viewBox="0 0 16 16"><path d="M3.500 2H12.500V5H3.500Z" fill="#e0e0e0" fill-opacity=".5"/><path d="M2.500 1L5 3.500L2.500 6L0 3.500Z M13.500 1L16 3.500L13.500 6L11 3.500Z" fill="#e8e8e8"/><path d="M3.500 8V13.500H7" fill="none" stroke="#e0e0e0" stroke-width="1.100" stroke-dasharray="2 1.200"/><rect x="8.500" y="11" width="6.500" height="3.500" fill="#e8e8e8"/></svg>
<div style="position:absolute;left:1323.4px;top:832px;width:19px;height:18px;background:#4772b3;border-radius:0px;"></div>
<svg style="position:absolute;left:1325.0px;top:833.0px;" width="16" height="16" viewBox="0 0 16 16"><path d="M2.500 1.200L14 8L8.800 9.200L6.300 14.500Z" fill="#fff"/></svg>
<div style="position:absolute;left:1342.8px;top:832px;width:19.2px;height:18px;background:#4772b3;border-radius:0px;"></div>
<svg style="position:absolute;left:1344.9px;top:833.5px;" width="15" height="15" viewBox="0 0 16 16"><g fill="none" stroke="#fff" stroke-width="1.300"><path d="M1 5V1H5M11 1H15V5M15 11V15H11M5 15H1V11"/></g><rect x="4.500" y="4.500" width="7" height="7" fill="none" stroke="#fff" stroke-width="1.100" stroke-dasharray="2 1.300"/></svg>
<div style="position:absolute;left:1362.4px;top:832px;width:19.6px;height:18px;background:#545454;border-radius:0 4px 4px 0;"></div>
<svg style="position:absolute;left:1364.7px;top:833.2px;" width="15" height="15" viewBox="0 0 16 16"><path d="M8 .800L15.500 14.500H.5Z" fill="#e6e6e6" stroke="#e6e6e6" stroke-width=".8" stroke-linejoin="round"/><path d="M8 5V10.300" stroke="#545454" stroke-width="1.800"/><circle cx="8" cy="12.400" r="1" fill="#545454"/></svg>
<div style="position:absolute;left:1388.4px;top:832px;width:31px;height:18px;background:#282828;border-radius:4px;box-shadow:0 0 0 .5px #3d3d3d;"></div>
<svg style="position:absolute;left:1391.0px;top:833.5px;" width="15" height="15" viewBox="0 0 16 16"><path d="M1 1.500H15L9.800 8V15L6.500 12.500V8Z" fill="none" stroke="#e6e6e6" stroke-width="1.300" stroke-linejoin="round"/></svg>
<svg style="position:absolute;left:1407.5px;top:835.5px;" width="12" height="12" viewBox="0 0 12 12"><path d="M2.5 4.25 L6 7.75 L9.5 4.25" fill="none" stroke="#e6e6e6" stroke-width="1.3" stroke-linecap="round" stroke-linejoin="round"/></svg>
<div style="position:absolute;left:1425.9px;top:832px;width:19px;height:18px;background:#4772b3;border-radius:4px 0 0 4px;"></div>
<svg style="position:absolute;left:1427.9px;top:833.5px;" width="15" height="15" viewBox="0 0 16 16"><path d="M3 8A5 5 0 1 1 8 13" fill="none" stroke="#fff" stroke-width="2.800" stroke-dasharray="2 .9 17.800 .9 2"/><path d="M1 11.500H3.800V14.300H6.500" fill="none" stroke="#fff" stroke-width="1.100" stroke-dasharray="1.800 1"/></svg>
<div style="position:absolute;left:1445.3px;top:832px;width:19.1px;height:18px;background:#282828;border-radius:0 4px 4px 0;"></div>
<svg style="position:absolute;left:1449px;top:835.5px;" width="12" height="12" viewBox="0 0 12 12"><path d="M2.5 4.25 L6 7.75 L9.5 4.25" fill="none" stroke="#e6e6e6" stroke-width="1.3" stroke-linecap="round" stroke-linejoin="round"/></svg>
<div style="position:absolute;left:1471px;top:832px;width:19px;height:18px;background:#545454;border-radius:4px 0 0 4px;"></div>
<svg style="position:absolute;left:1473.0px;top:833.5px;" width="15" height="15" viewBox="0 0 16 16"><circle cx="8" cy="8" r="6.600" fill="none" stroke="#cfcfcf" stroke-width="1.200"/><circle cx="8" cy="8" r="2" fill="#e0e0e0"/></svg>
<div style="position:absolute;left:1490.4px;top:832px;width:32px;height:18px;background:#2c2c2c;border-radius:0 4px 4px 0;box-shadow:0 0 0 .5px #3a3a3a;"></div>
<svg style="position:absolute;left:1494.5px;top:833.5px;" width="15" height="15" viewBox="0 0 16 16"><path d="M.5 13.500C5.500 13.500 5.800 2 8 2C10.200 2 10.500 13.500 15.500 13.500" fill="none" stroke="#606060" stroke-width="1.100"/></svg>
<svg style="position:absolute;left:1510.5px;top:835.5px;" width="12" height="12" viewBox="0 0 12 12"><path d="M2.5 4.25 L6 7.75 L9.5 4.25" fill="none" stroke="#555" stroke-width="1.3" stroke-linecap="round" stroke-linejoin="round"/></svg>
<div style="position:absolute;left:0px;top:853.5px;width:194px;height:95.5px;background:#1e1e1e;border-radius:0px;"></div>
<div style="position:absolute;left:0px;top:855.6px;width:169.4px;height:18.8px;background:#1d1d1d;border-radius:4px 0 0 4px;box-shadow:inset 0 0 0 1px #3a3a3a;"></div>
<svg style="position:absolute;left:1.0px;top:856.6px;" width="16" height="16" viewBox="0 0 16 16"><circle cx="9.500" cy="6" r="4.300" fill="none" stroke="#d0d0d0" stroke-width="1.200"/><path d="M6.500 9L1.500 14" stroke="#d0d0d0" stroke-width="1.400" stroke-linecap="round"/></svg>
<span style="position:absolute;left:22.7px;top:859.22px;font-size:12px;line-height:1;color:#6a6a6a;white-space:pre;font-weight:normal;letter-spacing:-0.746px;">Search</span>
<div style="position:absolute;left:169.4px;top:855.6px;width:22px;height:18.8px;background:#545454;border-radius:0 4px 4px 0;"></div>
<svg style="position:absolute;left:172.9px;top:857.5px;" width="15" height="15" viewBox="0 0 16 16"><path d="M2 8H14M5 5L2 8L5 11M11 5L14 8L11 11" fill="none" stroke="#e0e0e0" stroke-width="1.200"/></svg>
<div style="position:absolute;left:194px;top:853.5px;width:1116px;height:22px;background:#1b1b1b;border-radius:0px;"></div>
<div style="position:absolute;left:194px;top:877.8px;width:1116px;height:17.6px;background:#39292b;border-radius:0px;"></div>
<div style="position:absolute;left:194px;top:896.2px;width:1116px;height:16px;background:#27394d;border-radius:0px;"></div>
<div style="position:absolute;left:194px;top:913.4px;width:1116px;height:16.8px;background:#2a4b46;border-radius:0px;"></div>
<div style="position:absolute;left:0px;top:877.8px;width:194px;height:17.6px;background:#4f252b;border-radius:0px;"></div>
<div style="position:absolute;left:0px;top:896.2px;width:194px;height:16px;background:#1f4a87;border-radius:0px;"></div>
<div style="position:absolute;left:1px;top:913.4px;width:193px;height:16.8px;background:#1f715d;border-radius:9px 0 0 9px;"></div>
<svg style="position:absolute;left:194px;top:875.5px;overflow:hidden;" width="1116" height="73.5" viewBox="0 0 1116 73.5"><path d="M35.68 0V73.500" stroke="#101010" stroke-width="1"/><path d="M77.61 0V73.500" stroke="rgba(0,0,0,.28)" stroke-width="1"/><path d="M119.55 0V73.500" stroke="#101010" stroke-width="1"/><path d="M161.49 0V73.500" stroke="rgba(0,0,0,.28)" stroke-width="1"/><path d="M203.43 0V73.500" stroke="#101010" stroke-width="1"/><path d="M245.36 0V73.500" stroke="rgba(0,0,0,.28)" stroke-width="1"/><path d="M287.30 0V73.500" stroke="#101010" stroke-width="1"/><path d="M329.24 0V73.500" stroke="rgba(0,0,0,.28)" stroke-width="1"/><path d="M371.17 0V73.500" stroke="#101010" stroke-width="1"/><path d="M413.11 0V73.500" stroke="rgba(0,0,0,.28)" stroke-width="1"/><path d="M455.05 0V73.500" stroke="#101010" stroke-width="1"/><path d="M496.99 0V73.500" stroke="rgba(0,0,0,.28)" stroke-width="1"/><path d="M538.92 0V73.500" stroke="#101010" stroke-width="1"/><path d="M580.86 0V73.500" stroke="rgba(0,0,0,.28)" stroke-width="1"/><path d="M622.80 0V73.500" stroke="#101010" stroke-width="1"/><path d="M664.74 0V73.500" stroke="rgba(0,0,0,.28)" stroke-width="1"/><path d="M706.67 0V73.500" stroke="#101010" stroke-width="1"/><path d="M748.61 0V73.500" stroke="rgba(0,0,0,.28)" stroke-width="1"/><path d="M790.55 0V73.500" stroke="#101010" stroke-width="1"/><path d="M832.49 0V73.500" stroke="rgba(0,0,0,.28)" stroke-width="1"/><path d="M874.42 0V73.500" stroke="#101010" stroke-width="1"/><path d="M916.36 0V73.500" stroke="rgba(0,0,0,.28)" stroke-width="1"/><path d="M958.30 0V73.500" stroke="#101010" stroke-width="1"/><path d="M1000.24 0V73.500" stroke="rgba(0,0,0,.28)" stroke-width="1"/><path d="M1042.17 0V73.500" stroke="#101010" stroke-width="1"/><path d="M1084.11 0V73.500" stroke="rgba(0,0,0,.28)" stroke-width="1"/></svg>
<span style="position:absolute;left:229.67500000000004px;transform:translateX(-50%);top:859.44px;font-size:12px;line-height:1;color:#b8b8b8;white-space:pre;font-weight:normal;letter-spacing:0.000px;">-15</span>
<span style="position:absolute;left:313.55px;transform:translateX(-50%);top:859.44px;font-size:12px;line-height:1;color:#b8b8b8;white-space:pre;font-weight:normal;letter-spacing:0.000px;">-10</span>
<span style="position:absolute;left:397.425px;transform:translateX(-50%);top:859.44px;font-size:12px;line-height:1;color:#b8b8b8;white-space:pre;font-weight:normal;letter-spacing:0.000px;">-5</span>
<span style="position:absolute;left:565.175px;transform:translateX(-50%);top:859.44px;font-size:12px;line-height:1;color:#b8b8b8;white-space:pre;font-weight:normal;letter-spacing:0.000px;">5</span>
<span style="position:absolute;left:649.05px;transform:translateX(-50%);top:859.44px;font-size:12px;line-height:1;color:#b8b8b8;white-space:pre;font-weight:normal;letter-spacing:0.000px;">10</span>
<span style="position:absolute;left:732.925px;transform:translateX(-50%);top:859.44px;font-size:12px;line-height:1;color:#b8b8b8;white-space:pre;font-weight:normal;letter-spacing:0.000px;">15</span>
<span style="position:absolute;left:816.8px;transform:translateX(-50%);top:859.44px;font-size:12px;line-height:1;color:#b8b8b8;white-space:pre;font-weight:normal;letter-spacing:0.000px;">20</span>
<span style="position:absolute;left:900.675px;transform:translateX(-50%);top:859.44px;font-size:12px;line-height:1;color:#b8b8b8;white-space:pre;font-weight:normal;letter-spacing:0.000px;">25</span>
<span style="position:absolute;left:984.55px;transform:translateX(-50%);top:859.44px;font-size:12px;line-height:1;color:#b8b8b8;white-space:pre;font-weight:normal;letter-spacing:0.000px;">30</span>
<span style="position:absolute;left:1068.425px;transform:translateX(-50%);top:859.44px;font-size:12px;line-height:1;color:#b8b8b8;white-space:pre;font-weight:normal;letter-spacing:0.000px;">35</span>
<span style="position:absolute;left:1152.3px;transform:translateX(-50%);top:859.44px;font-size:12px;line-height:1;color:#b8b8b8;white-space:pre;font-weight:normal;letter-spacing:0.000px;">40</span>
<span style="position:absolute;left:1236.175px;transform:translateX(-50%);top:859.44px;font-size:12px;line-height:1;color:#b8b8b8;white-space:pre;font-weight:normal;letter-spacing:0.000px;">45</span>
<div style="position:absolute;left:480.3px;top:872px;width:2.1px;height:77px;background:#4772b3;border-radius:0px;"></div>
<div style="position:absolute;left:469.8px;top:856.5px;width:23.8px;height:16px;background:#4772b3;border-radius:4px;"></div>
<span style="position:absolute;left:481.3px;transform:translateX(-50%);top:859.44px;font-size:12px;line-height:1;color:#ffffff;white-space:pre;font-weight:normal;letter-spacing:0.000px;">0</span>
<svg style="position:absolute;left:477.3px;top:882.6px;" width="8" height="8" viewBox="0 0 8 8"><circle cx="4" cy="4" r="2.900" fill="#e8e8e8" stroke="#111" stroke-width="1.100"/></svg>
<svg style="position:absolute;left:477.3px;top:900.2px;" width="8" height="8" viewBox="0 0 8 8"><circle cx="4" cy="4" r="2.900" fill="#e8e8e8" stroke="#111" stroke-width="1.100"/></svg>
<svg style="position:absolute;left:477.3px;top:917.8px;" width="8" height="8" viewBox="0 0 8 8"><circle cx="4" cy="4" r="2.900" fill="#e8e8e8" stroke="#111" stroke-width="1.100"/></svg>
<svg style="position:absolute;left:-1px;top:880.5px;" width="12" height="12" viewBox="0 0 12 12"><path d="M2.5 4.25 L6 7.75 L9.5 4.25" fill="none" stroke="#e0e0e0" stroke-width="1.2" stroke-linecap="round" stroke-linejoin="round"/></svg>
<span style="position:absolute;left:14.3px;top:880.62px;font-size:12px;line-height:1;color:#d6d6d6;white-space:pre;font-weight:normal;letter-spacing:-0.307px;">Summary</span>
<svg style="position:absolute;left:-2px;top:898.3px;" width="12" height="12" viewBox="0 0 12 12"><path d="M2.5 4.25 L6 7.75 L9.5 4.25" fill="none" stroke="#e0e0e0" stroke-width="1.2" stroke-linecap="round" stroke-linejoin="round"/></svg>
<svg style="position:absolute;left:11.5px;top:896.7px;" width="15" height="15" viewBox="0 0 16 16"><path d="M3.500 2H12.500V5H3.500Z" fill="#e0e0e0" fill-opacity=".5"/><path d="M2.500 1L5 3.500L2.500 6L0 3.500Z M13.500 1L16 3.500L13.500 6L11 3.500Z" fill="#e8e8e8"/><path d="M3.500 8V13.500H7" fill="none" stroke="#e0e0e0" stroke-width="1.100" stroke-dasharray="2 1.200"/><rect x="8.500" y="11" width="6.500" height="3.500" fill="#e8e8e8"/></svg>
<span style="position:absolute;left:31.3px;top:898.32px;font-size:12px;line-height:1;color:#e9b938;white-space:pre;font-weight:normal;letter-spacing:-0.100px;">Avatar_Animation</span>
<svg style="position:absolute;left:178.0px;top:897.2px;" width="14" height="14" viewBox="0 0 16 16"><g fill="none" stroke="#e6e6e6" stroke-width="1.200"><path d="M1.500 4.500V1.500H4.500M11.500 1.500H14.500V4.500M14.500 11.500V14.500H11.500M4.500 14.500H1.500V11.500"/></g><rect x="4" y="4" width="8" height="8" fill="#e6e6e6"/></svg>
<svg style="position:absolute;left:6px;top:916px;" width="8" height="11" viewBox="0 0 8 11"><path d="M2.500 1.500L6.500 5.500L2.500 9.500" fill="none" stroke="#e0e0e0" stroke-width="1.200"/></svg>
<svg style="position:absolute;left:19.0px;top:914.0px;" width="15" height="15" viewBox="0 0 16 16"><path d="M9.500 1.500L14.500 6.500L12.500 7L10 9.500L9.500 12.500L3.500 6.500L6.500 6L9 3.500Z" fill="none" stroke="#9aa0a8" stroke-width="1.100" stroke-linejoin="round"/><path d="M6.500 9.500L1.500 14.500" stroke="#9aa0a8" stroke-width="1.200"/></svg>
<span style="position:absolute;left:38.2px;top:915.82px;font-size:12px;line-height:1;color:#e9b938;white-space:pre;font-weight:normal;letter-spacing:-0.521px;">CTRL_Avatar_Upper</span>
<svg style="position:absolute;left:145px;top:914.5px;" width="14" height="14" viewBox="0 0 14 14"><path d="M12.500 3.500A3.800 3.800 0 0 1 7.200 7.800L3.500 12.500A1.300 1.300 0 0 1 1.500 10.500L6.200 6.800A3.800 3.800 0 0 1 10.500 1.500L8.200 3.800L8.800 5.200L10.200 5.800Z" fill="#f0f0f0"/></svg>
<div style="position:absolute;left:164px;top:915.5px;width:10.5px;height:10.5px;background:#c8c8c8;border-radius:2px;"></div>
<svg style="position:absolute;left:164px;top:915.5px;" width="10.5" height="10.5" viewBox="0 0 10.5 10.5"><path d="M2.300 5.400L4.400 7.600L8.300 2.800" fill="none" stroke="#1f715d" stroke-width="1.600"/></svg>
<svg style="position:absolute;left:178px;top:913.5px;" width="16" height="16" viewBox="0 0 16 16"><g fill="none" stroke="#e0e0e0" stroke-width="1.100"><path d="M2 7V5.200a2.700 2.700 0 0 1 5.400 0V8.500"/><rect x="6" y="8.500" width="8" height="6" rx=".8"/><path d="M9 11.500H11"/></g></svg>
<div style="position:absolute;left:203px;top:939.5px;width:187px;height:7.3px;background:#505050;border-radius:4px;"></div>
<svg style="position:absolute;left:203px;top:939.5px;" width="8" height="8" viewBox="0 0 8 8"><circle cx="4" cy="3.700" r="2.600" fill="#1a1a1a" stroke="#5a5a5a" stroke-width=".8"/></svg>
<svg style="position:absolute;left:382px;top:939.5px;" width="8" height="8" viewBox="0 0 8 8"><circle cx="4" cy="3.700" r="2.600" fill="#1a1a1a" stroke="#5a5a5a" stroke-width=".8"/></svg>
<div style="position:absolute;left:1304.2px;top:878px;width:3px;height:46px;background:#3c3c3c;border-radius:2px;"></div>
<div style="position:absolute;left:1310px;top:853.5px;width:219px;height:95.5px;background:#303030;border-radius:0 0 5px 0;"></div>
<div style="position:absolute;left:1318px;top:855.200px;width:204px;height:93.800px;overflow:hidden;">
<div style="position:absolute;left:0;top:0;width:204px;height:120px;background:#3d3d3d;border-radius:5px;"></div>
<div style="position:absolute;left:9px;top:84.800px;width:91.500px;height:18px;background:#484848;border-radius:4px 0 0 4px;"></div>
<div style="position:absolute;left:101.500px;top:84.800px;width:93.500px;height:18px;background:#484848;border-radius:0 4px 4px 0;"></div>
</div>
<svg style="position:absolute;left:1324.5px;top:862.5px;" width="12" height="12" viewBox="0 0 12 12"><path d="M2 4.0 L6 8.0 L10 4.0" fill="none" stroke="#d0d0d0" stroke-width="1.1" stroke-linecap="round" stroke-linejoin="round"/></svg>
<span style="position:absolute;left:1340.4px;top:862.04px;font-size:12px;line-height:1;color:#ffffff;white-space:pre;font-weight:normal;letter-spacing:0.048px;">Action</span>
<svg style="position:absolute;left:1504.5px;top:866px;" width="12" height="5" viewBox="0 0 12 5"><rect x="0" y="0" width="1.200" height="1.300" fill="#272727"/><rect x="0" y="3" width="1.200" height="1.300" fill="#272727"/><rect x="3" y="0" width="1.200" height="1.300" fill="#272727"/><rect x="3" y="3" width="1.200" height="1.300" fill="#272727"/><rect x="6" y="0" width="1.200" height="1.300" fill="#272727"/><rect x="6" y="3" width="1.200" height="1.300" fill="#272727"/><rect x="9" y="0" width="1.200" height="1.300" fill="#272727"/><rect x="9" y="3" width="1.200" height="1.300" fill="#272727"/></svg>
<svg style="position:absolute;left:1328.0px;top:890.8px;" width="15" height="15" viewBox="0 0 16 16"><path d="M3.500 2H12.500V5H3.500Z" fill="#e0e0e0" fill-opacity=".5"/><path d="M2.500 1L5 3.500L2.500 6L0 3.500Z M13.500 1L16 3.500L13.500 6L11 3.500Z" fill="#e8e8e8"/><path d="M8 8.300L11 11.300L8 14.300L5 11.300Z" fill="none" stroke="#e0e0e0" stroke-width="1.100"/></svg>
<span style="position:absolute;left:1352.5px;top:891.44px;font-size:12px;line-height:1;color:#e6e6e6;white-space:pre;font-weight:normal;letter-spacing:-0.085px;">Avatar_Action.002</span>
<div style="position:absolute;left:1326.7px;top:917px;width:12.2px;height:12.3px;background:#545454;border-radius:3px;"></div>
<span style="position:absolute;left:1343.7px;top:916.54px;font-size:12px;line-height:1;color:#e6e6e6;white-space:pre;font-weight:normal;letter-spacing:-0.339px;">Manual Frame Range</span>
<div style="position:absolute;left:1318px;top:940px;width:204px;height:9px;overflow:hidden;">
<span style="position:absolute;left:24px;top:1.500px;font-size:12px;line-height:1;color:#808080;white-space:pre">Start  0.000</span>
<span style="position:absolute;left:116px;top:1.500px;font-size:12px;line-height:1;color:#808080;white-space:pre">End    0.000</span>
</div>
<div style="position:absolute;left:1524px;top:856px;width:3px;height:26px;background:#555;border-radius:2px;"></div>
<div style="position:absolute;left:0px;top:952px;width:1529px;height:24px;background:#303030;border-radius:5px;"></div>
<div style="position:absolute;left:0px;top:952px;width:1529px;height:1px;background:#454545;border-radius:5px 5px 0 0;"></div>
<div style="position:absolute;left:3px;top:955.8px;width:30.5px;height:18.2px;background:#282828;border-radius:4px;box-shadow:0 0 0 .5px #3d3d3d;"></div>
<svg style="position:absolute;left:6px;top:957.2px;" width="15" height="15" viewBox="0 0 15 15"><circle cx="7.500" cy="7.500" r="7" fill="#e8e8e8"/><path d="M8.500 3.500L5.500 7.500L8.500 11.500" fill="none" stroke="#282828" stroke-width="1.600"/></svg>
<svg style="position:absolute;left:21.5px;top:959.2px;" width="12" height="12" viewBox="0 0 12 12"><path d="M2.5 4.25 L6 7.75 L9.5 4.25" fill="none" stroke="#e6e6e6" stroke-width="1.3" stroke-linecap="round" stroke-linejoin="round"/></svg>
<div style="position:absolute;left:40px;top:955.8px;width:70px;height:18.2px;background:#282828;border-radius:4px 0 0 4px;box-shadow:0 0 0 .5px #3d3d3d;"></div>
<span style="position:absolute;left:47.4px;top:958.72px;font-size:12px;line-height:1;color:#e6e6e6;white-space:pre;font-weight:normal;letter-spacing:-0.358px;">Playback</span>
<svg style="position:absolute;left:98px;top:959.2px;" width="12" height="12" viewBox="0 0 12 12"><path d="M2.5 4.25 L6 7.75 L9.5 4.25" fill="none" stroke="#e6e6e6" stroke-width="1.3" stroke-linecap="round" stroke-linejoin="round"/></svg>
<div style="position:absolute;left:110.8px;top:955.8px;width:60.5px;height:18.2px;background:#282828;border-radius:0 4px 4px 0;box-shadow:0 0 0 .5px #3d3d3d;"></div>
<span style="position:absolute;left:118.5px;top:958.72px;font-size:12px;line-height:1;color:#e6e6e6;white-space:pre;font-weight:normal;letter-spacing:-0.421px;">Keying</span>
<svg style="position:absolute;left:159px;top:959.2px;" width="12" height="12" viewBox="0 0 12 12"><path d="M2.5 4.25 L6 7.75 L9.5 4.25" fill="none" stroke="#e6e6e6" stroke-width="1.3" stroke-linecap="round" stroke-linejoin="round"/></svg>
<span style="position:absolute;left:181px;top:958.72px;font-size:12px;line-height:1;color:#d4d4d4;white-space:pre;font-weight:normal;letter-spacing:0.068px;">View</span>
<span style="position:absolute;left:222.2px;top:958.72px;font-size:12px;line-height:1;color:#d4d4d4;white-space:pre;font-weight:normal;letter-spacing:-0.289px;">Marker</span>
<div style="position:absolute;left:670.1px;top:956px;width:18.1px;height:17.8px;background:#4772b3;border-radius:4px 0 0 4px;"></div>
<svg style="position:absolute;left:673.2px;top:959px;" width="12" height="12" viewBox="0 0 12 12"><circle cx="6" cy="6" r="4.300" fill="#d8414f" stroke="#f0d0d4" stroke-width=".8"/></svg>
<div style="position:absolute;left:688.6px;top:956px;width:19.7px;height:17.8px;background:#282828;border-radius:0 4px 4px 0;"></div>
<svg style="position:absolute;left:692.3px;top:959.2px;" width="12" height="12" viewBox="0 0 12 12"><path d="M2.5 4.25 L6 7.75 L9.5 4.25" fill="none" stroke="#e6e6e6" stroke-width="1.3" stroke-linecap="round" stroke-linejoin="round"/></svg>
<div style="position:absolute;left:715.3px;top:956px;width:19.17px;height:17.8px;background:#545454;border-radius:4px 0 0 4px;"></div>
<svg style="position:absolute;left:717.435px;top:957.4000000000001px;" width="15" height="15" viewBox="0 0 16 16"><path d="M3.500 3V13" stroke="#f0f0f0" stroke-width="1.800"/><path d="M13 3V13L5.500 8Z" fill="#f0f0f0"/></svg>
<div style="position:absolute;left:734.9699999999999px;top:956px;width:19.17px;height:17.8px;background:#545454;border-radius:0;"></div>
<svg style="position:absolute;left:737.1049999999999px;top:957.4000000000001px;" width="15" height="15" viewBox="0 0 16 16"><path d="M4.500 4.500L8 8L4.500 11.500L1 8Z" fill="#f0f0f0"/><path d="M15 3.500V12.500L8.500 8Z" fill="#f0f0f0"/></svg>
<div style="position:absolute;left:754.64px;top:956px;width:19.17px;height:17.8px;background:#545454;border-radius:0;"></div>
<svg style="position:absolute;left:756.775px;top:957.4000000000001px;" width="15" height="15" viewBox="0 0 16 16"><path d="M13 2.500V13.500L3.500 8Z" fill="#f0f0f0"/></svg>
<div style="position:absolute;left:774.31px;top:956px;width:19.17px;height:17.8px;background:#545454;border-radius:0;"></div>
<svg style="position:absolute;left:776.4449999999999px;top:957.4000000000001px;" width="15" height="15" viewBox="0 0 16 16"><path d="M3.500 2.500V13.500L13 8Z" fill="#f0f0f0"/></svg>
<div style="position:absolute;left:793.98px;top:956px;width:19.17px;height:17.8px;background:#545454;border-radius:0;"></div>
<svg style="position:absolute;left:796.115px;top:957.4000000000001px;" width="15" height="15" viewBox="0 0 16 16"><path d="M11.500 4.500L15 8L11.500 11.500L8 8Z" fill="#f0f0f0"/><path d="M1 3.500V12.500L7.500 8Z" fill="#f0f0f0"/></svg>
<div style="position:absolute;left:813.65px;top:956px;width:19.17px;height:17.8px;background:#545454;border-radius:0 4px 4px 0;"></div>
<svg style="position:absolute;left:815.785px;top:957.4000000000001px;" width="15" height="15" viewBox="0 0 16 16"><path d="M12.500 3V13" stroke="#f0f0f0" stroke-width="1.800"/><path d="M3 3V13L10.500 8Z" fill="#f0f0f0"/></svg>
<div style="position:absolute;left:1249px;top:955.5px;width:72.8px;height:18px;background:#545454;border-radius:4px;"></div>
<span style="position:absolute;left:1284.3px;transform:translateX(-50%);top:958.72px;font-size:12px;line-height:1;color:#e6e6e6;white-space:pre;font-weight:normal;letter-spacing:0.000px;">0</span>
<div style="position:absolute;left:1329px;top:955.5px;width:18.5px;height:18px;background:#545454;border-radius:4px 0 0 4px;"></div>
<svg style="position:absolute;left:1330.5px;top:956.5px;" width="16" height="16" viewBox="0 0 16 16"><g fill="none" stroke="#e6e6e6" stroke-width="1.200"><circle cx="8" cy="9" r="5.300"/><path d="M8 6V9.300H10.500M6.500 1.500H9.500M8 1.500V3.500M12.500 3L13.800 4.300"/></g></svg>
<div style="position:absolute;left:1348px;top:955.5px;width:87.8px;height:18px;background:#545454;border-radius:0px;"></div>
<span style="position:absolute;left:1363.3px;top:958.72px;font-size:12px;line-height:1;color:#e6e6e6;white-space:pre;font-weight:normal;letter-spacing:-0.411px;">Start</span>
<span style="position:absolute;right:109.29999999999995px;top:958.72px;font-size:12px;line-height:1;color:#e6e6e6;white-space:pre;font-weight:normal;letter-spacing:0.000px;">0</span>
<div style="position:absolute;left:1437px;top:955.5px;width:85.2px;height:18px;background:#545454;border-radius:0 4px 4px 0;"></div>
<span style="position:absolute;left:1452.4px;top:958.72px;font-size:12px;line-height:1;color:#e6e6e6;white-space:pre;font-weight:normal;letter-spacing:-0.580px;">End</span>
<span style="position:absolute;right:23.5px;top:958.72px;font-size:12px;line-height:1;color:#e6e6e6;white-space:pre;font-weight:normal;letter-spacing:-0.216px;">299</span>
<div style="position:absolute;left:0px;top:976px;width:1532px;height:23.2px;background:#191b1b;border-radius:0px;"></div>
<svg style="position:absolute;left:4px;top:980px;" width="12" height="18" viewBox="0 0 12 18"><rect x="1" y="1" width="10" height="16" rx="3.500" fill="none" stroke="#9a9a9a" stroke-width="1.200"/><path d="M1 8V4.500A3.500 3.500 0 0 1 4.500 1H6V8Z" fill="#9a9a9a"/></svg>
<span style="position:absolute;left:20.6px;top:981.84px;font-size:12px;line-height:1;color:#989898;white-space:pre;font-weight:normal;letter-spacing:-0.034px;">Scroller Activate</span>
<svg style="position:absolute;left:116px;top:980px;" width="12" height="18" viewBox="0 0 12 18"><rect x="1" y="1" width="10" height="16" rx="3.500" fill="none" stroke="#9a9a9a" stroke-width="1.200"/><rect x="4.500" y="2.500" width="3" height="6" rx="1" fill="#9a9a9a"/></svg>
<span style="position:absolute;left:132.6px;top:981.84px;font-size:12px;line-height:1;color:#989898;white-space:pre;font-weight:normal;letter-spacing:-0.040px;">Scroller Activate</span>
<svg style="position:absolute;left:228px;top:980px;" width="12" height="18" viewBox="0 0 12 18"><rect x="1" y="1" width="10" height="16" rx="3.500" fill="none" stroke="#9a9a9a" stroke-width="1.200"/><path d="M11 8V4.500A3.500 3.500 0 0 0 7.500 1H6V8Z" fill="#9a9a9a"/></svg>
<span style="position:absolute;left:244.4px;top:981.84px;font-size:12px;line-height:1;color:#989898;white-space:pre;font-weight:normal;letter-spacing:-0.077px;">Options</span>
<div style="position:absolute;left:0px;top:999.2px;width:1532px;height:6px;background:linear-gradient(90deg,#d9dee6 0%,#dfe2e6 10%,#ece7dc 22%,#f0e6d2 50%,#efe4cf 100%);border-radius:0px;"></div>
<svg style="position:absolute;left:589.2px;top:866px;" width="14" height="21" viewBox="0 0 14 21"><path d="M1.500 1.500V16.500L5.200 13L7.700 18.800L10 17.800L7.600 12.200H12.500Z" fill="#fff" stroke="#000" stroke-width="1.100" stroke-linejoin="round"/></svg>
</body></html>
